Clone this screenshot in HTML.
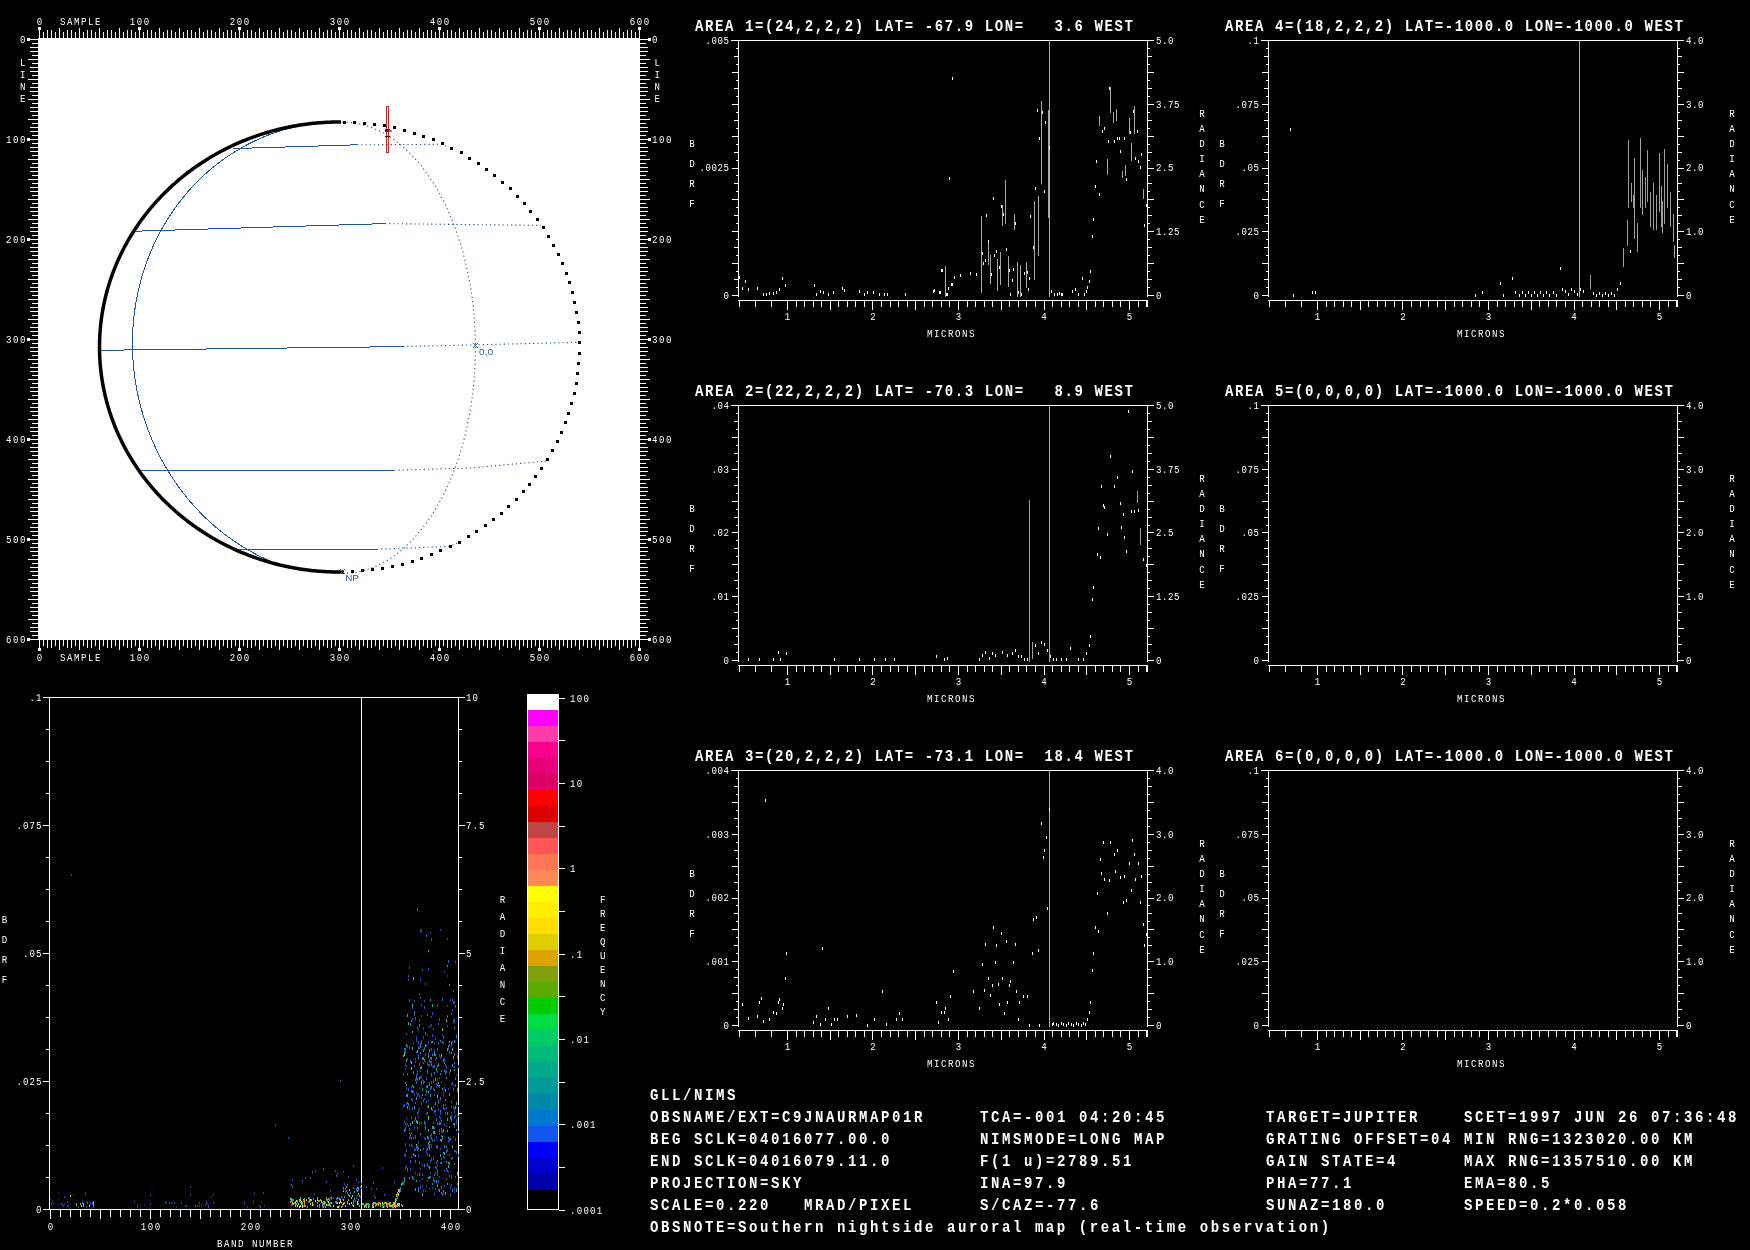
<!DOCTYPE html>
<html><head><meta charset="utf-8"><title>GLL/NIMS</title>
<style>
html,body{margin:0;padding:0;background:#000;width:1750px;height:1250px;overflow:hidden}
svg{display:block;will-change:transform}
text{font-family:"Liberation Mono",monospace;fill:#fff}
.s{font-size:10.6px}
.b{font-size:16.7px;font-weight:bold}
.g{font-family:"Liberation Sans",sans-serif;font-size:9.8px;fill:#2a5a96}
</style></head><body>
<svg width="1750" height="1250" viewBox="0 0 1750 1250">
<rect x="0" y="0" width="1750" height="1250" fill="#000"/>
<rect x="38" y="38" width="602" height="602" fill="#fff"/>
<rect x="39" y="30" width="1" height="8" fill="#fff"/>
<rect x="39" y="640" width="1" height="8" fill="#fff"/>
<rect x="30" y="39" width="8" height="1" fill="#fff"/>
<rect x="640" y="39" width="8" height="1" fill="#fff"/>
<rect x="38" y="27" width="3" height="3" fill="#fff"/>
<rect x="38" y="27" width="3" height="3" fill="#fff"/>
<rect x="38" y="648" width="3" height="3" fill="#fff"/>
<rect x="27" y="38" width="3" height="3" fill="#fff"/>
<rect x="648" y="38" width="3" height="3" fill="#fff"/>
<rect x="43" y="32" width="1" height="6" fill="#fff"/>
<rect x="43" y="640" width="1" height="6" fill="#fff"/>
<rect x="32" y="43" width="6" height="1" fill="#fff"/>
<rect x="640" y="43" width="6" height="1" fill="#fff"/>
<rect x="47" y="30" width="1" height="8" fill="#fff"/>
<rect x="47" y="640" width="1" height="8" fill="#fff"/>
<rect x="30" y="47" width="8" height="1" fill="#fff"/>
<rect x="640" y="47" width="8" height="1" fill="#fff"/>
<rect x="51" y="30" width="1" height="8" fill="#fff"/>
<rect x="51" y="640" width="1" height="8" fill="#fff"/>
<rect x="30" y="51" width="8" height="1" fill="#fff"/>
<rect x="640" y="51" width="8" height="1" fill="#fff"/>
<rect x="55" y="32" width="1" height="6" fill="#fff"/>
<rect x="55" y="640" width="1" height="6" fill="#fff"/>
<rect x="32" y="55" width="6" height="1" fill="#fff"/>
<rect x="640" y="55" width="6" height="1" fill="#fff"/>
<rect x="59" y="28" width="1" height="10" fill="#fff"/>
<rect x="59" y="640" width="1" height="10" fill="#fff"/>
<rect x="28" y="59" width="10" height="1" fill="#fff"/>
<rect x="640" y="59" width="10" height="1" fill="#fff"/>
<rect x="63" y="32" width="1" height="6" fill="#fff"/>
<rect x="63" y="640" width="1" height="6" fill="#fff"/>
<rect x="32" y="63" width="6" height="1" fill="#fff"/>
<rect x="640" y="63" width="6" height="1" fill="#fff"/>
<rect x="67" y="30" width="1" height="8" fill="#fff"/>
<rect x="67" y="640" width="1" height="8" fill="#fff"/>
<rect x="30" y="67" width="8" height="1" fill="#fff"/>
<rect x="640" y="67" width="8" height="1" fill="#fff"/>
<rect x="71" y="30" width="1" height="8" fill="#fff"/>
<rect x="71" y="640" width="1" height="8" fill="#fff"/>
<rect x="30" y="71" width="8" height="1" fill="#fff"/>
<rect x="640" y="71" width="8" height="1" fill="#fff"/>
<rect x="75" y="32" width="1" height="6" fill="#fff"/>
<rect x="75" y="640" width="1" height="6" fill="#fff"/>
<rect x="32" y="75" width="6" height="1" fill="#fff"/>
<rect x="640" y="75" width="6" height="1" fill="#fff"/>
<rect x="79" y="28" width="1" height="10" fill="#fff"/>
<rect x="79" y="640" width="1" height="10" fill="#fff"/>
<rect x="28" y="79" width="10" height="1" fill="#fff"/>
<rect x="640" y="79" width="10" height="1" fill="#fff"/>
<rect x="83" y="32" width="1" height="6" fill="#fff"/>
<rect x="83" y="640" width="1" height="6" fill="#fff"/>
<rect x="32" y="83" width="6" height="1" fill="#fff"/>
<rect x="640" y="83" width="6" height="1" fill="#fff"/>
<rect x="87" y="30" width="1" height="8" fill="#fff"/>
<rect x="87" y="640" width="1" height="8" fill="#fff"/>
<rect x="30" y="87" width="8" height="1" fill="#fff"/>
<rect x="640" y="87" width="8" height="1" fill="#fff"/>
<rect x="91" y="30" width="1" height="8" fill="#fff"/>
<rect x="91" y="640" width="1" height="8" fill="#fff"/>
<rect x="30" y="91" width="8" height="1" fill="#fff"/>
<rect x="640" y="91" width="8" height="1" fill="#fff"/>
<rect x="95" y="32" width="1" height="6" fill="#fff"/>
<rect x="95" y="640" width="1" height="6" fill="#fff"/>
<rect x="32" y="95" width="6" height="1" fill="#fff"/>
<rect x="640" y="95" width="6" height="1" fill="#fff"/>
<rect x="99" y="28" width="1" height="10" fill="#fff"/>
<rect x="99" y="640" width="1" height="10" fill="#fff"/>
<rect x="28" y="99" width="10" height="1" fill="#fff"/>
<rect x="640" y="99" width="10" height="1" fill="#fff"/>
<rect x="103" y="32" width="1" height="6" fill="#fff"/>
<rect x="103" y="640" width="1" height="6" fill="#fff"/>
<rect x="32" y="103" width="6" height="1" fill="#fff"/>
<rect x="640" y="103" width="6" height="1" fill="#fff"/>
<rect x="107" y="30" width="1" height="8" fill="#fff"/>
<rect x="107" y="640" width="1" height="8" fill="#fff"/>
<rect x="30" y="107" width="8" height="1" fill="#fff"/>
<rect x="640" y="107" width="8" height="1" fill="#fff"/>
<rect x="111" y="30" width="1" height="8" fill="#fff"/>
<rect x="111" y="640" width="1" height="8" fill="#fff"/>
<rect x="30" y="111" width="8" height="1" fill="#fff"/>
<rect x="640" y="111" width="8" height="1" fill="#fff"/>
<rect x="115" y="32" width="1" height="6" fill="#fff"/>
<rect x="115" y="640" width="1" height="6" fill="#fff"/>
<rect x="32" y="115" width="6" height="1" fill="#fff"/>
<rect x="640" y="115" width="6" height="1" fill="#fff"/>
<rect x="119" y="28" width="1" height="10" fill="#fff"/>
<rect x="119" y="640" width="1" height="10" fill="#fff"/>
<rect x="28" y="119" width="10" height="1" fill="#fff"/>
<rect x="640" y="119" width="10" height="1" fill="#fff"/>
<rect x="123" y="32" width="1" height="6" fill="#fff"/>
<rect x="123" y="640" width="1" height="6" fill="#fff"/>
<rect x="32" y="123" width="6" height="1" fill="#fff"/>
<rect x="640" y="123" width="6" height="1" fill="#fff"/>
<rect x="127" y="30" width="1" height="8" fill="#fff"/>
<rect x="127" y="640" width="1" height="8" fill="#fff"/>
<rect x="30" y="127" width="8" height="1" fill="#fff"/>
<rect x="640" y="127" width="8" height="1" fill="#fff"/>
<rect x="131" y="30" width="1" height="8" fill="#fff"/>
<rect x="131" y="640" width="1" height="8" fill="#fff"/>
<rect x="30" y="131" width="8" height="1" fill="#fff"/>
<rect x="640" y="131" width="8" height="1" fill="#fff"/>
<rect x="135" y="32" width="1" height="6" fill="#fff"/>
<rect x="135" y="640" width="1" height="6" fill="#fff"/>
<rect x="32" y="135" width="6" height="1" fill="#fff"/>
<rect x="640" y="135" width="6" height="1" fill="#fff"/>
<rect x="139" y="30" width="1" height="8" fill="#fff"/>
<rect x="139" y="640" width="1" height="8" fill="#fff"/>
<rect x="30" y="139" width="8" height="1" fill="#fff"/>
<rect x="640" y="139" width="8" height="1" fill="#fff"/>
<rect x="38" y="27" width="3" height="3" fill="#fff"/>
<rect x="138" y="27" width="3" height="3" fill="#fff"/>
<rect x="138" y="648" width="3" height="3" fill="#fff"/>
<rect x="27" y="138" width="3" height="3" fill="#fff"/>
<rect x="648" y="138" width="3" height="3" fill="#fff"/>
<rect x="143" y="32" width="1" height="6" fill="#fff"/>
<rect x="143" y="640" width="1" height="6" fill="#fff"/>
<rect x="32" y="143" width="6" height="1" fill="#fff"/>
<rect x="640" y="143" width="6" height="1" fill="#fff"/>
<rect x="147" y="30" width="1" height="8" fill="#fff"/>
<rect x="147" y="640" width="1" height="8" fill="#fff"/>
<rect x="30" y="147" width="8" height="1" fill="#fff"/>
<rect x="640" y="147" width="8" height="1" fill="#fff"/>
<rect x="151" y="30" width="1" height="8" fill="#fff"/>
<rect x="151" y="640" width="1" height="8" fill="#fff"/>
<rect x="30" y="151" width="8" height="1" fill="#fff"/>
<rect x="640" y="151" width="8" height="1" fill="#fff"/>
<rect x="155" y="32" width="1" height="6" fill="#fff"/>
<rect x="155" y="640" width="1" height="6" fill="#fff"/>
<rect x="32" y="155" width="6" height="1" fill="#fff"/>
<rect x="640" y="155" width="6" height="1" fill="#fff"/>
<rect x="159" y="28" width="1" height="10" fill="#fff"/>
<rect x="159" y="640" width="1" height="10" fill="#fff"/>
<rect x="28" y="159" width="10" height="1" fill="#fff"/>
<rect x="640" y="159" width="10" height="1" fill="#fff"/>
<rect x="163" y="32" width="1" height="6" fill="#fff"/>
<rect x="163" y="640" width="1" height="6" fill="#fff"/>
<rect x="32" y="163" width="6" height="1" fill="#fff"/>
<rect x="640" y="163" width="6" height="1" fill="#fff"/>
<rect x="167" y="30" width="1" height="8" fill="#fff"/>
<rect x="167" y="640" width="1" height="8" fill="#fff"/>
<rect x="30" y="167" width="8" height="1" fill="#fff"/>
<rect x="640" y="167" width="8" height="1" fill="#fff"/>
<rect x="171" y="30" width="1" height="8" fill="#fff"/>
<rect x="171" y="640" width="1" height="8" fill="#fff"/>
<rect x="30" y="171" width="8" height="1" fill="#fff"/>
<rect x="640" y="171" width="8" height="1" fill="#fff"/>
<rect x="175" y="32" width="1" height="6" fill="#fff"/>
<rect x="175" y="640" width="1" height="6" fill="#fff"/>
<rect x="32" y="175" width="6" height="1" fill="#fff"/>
<rect x="640" y="175" width="6" height="1" fill="#fff"/>
<rect x="179" y="28" width="1" height="10" fill="#fff"/>
<rect x="179" y="640" width="1" height="10" fill="#fff"/>
<rect x="28" y="179" width="10" height="1" fill="#fff"/>
<rect x="640" y="179" width="10" height="1" fill="#fff"/>
<rect x="183" y="32" width="1" height="6" fill="#fff"/>
<rect x="183" y="640" width="1" height="6" fill="#fff"/>
<rect x="32" y="183" width="6" height="1" fill="#fff"/>
<rect x="640" y="183" width="6" height="1" fill="#fff"/>
<rect x="187" y="30" width="1" height="8" fill="#fff"/>
<rect x="187" y="640" width="1" height="8" fill="#fff"/>
<rect x="30" y="187" width="8" height="1" fill="#fff"/>
<rect x="640" y="187" width="8" height="1" fill="#fff"/>
<rect x="191" y="30" width="1" height="8" fill="#fff"/>
<rect x="191" y="640" width="1" height="8" fill="#fff"/>
<rect x="30" y="191" width="8" height="1" fill="#fff"/>
<rect x="640" y="191" width="8" height="1" fill="#fff"/>
<rect x="195" y="32" width="1" height="6" fill="#fff"/>
<rect x="195" y="640" width="1" height="6" fill="#fff"/>
<rect x="32" y="195" width="6" height="1" fill="#fff"/>
<rect x="640" y="195" width="6" height="1" fill="#fff"/>
<rect x="199" y="28" width="1" height="10" fill="#fff"/>
<rect x="199" y="640" width="1" height="10" fill="#fff"/>
<rect x="28" y="199" width="10" height="1" fill="#fff"/>
<rect x="640" y="199" width="10" height="1" fill="#fff"/>
<rect x="203" y="32" width="1" height="6" fill="#fff"/>
<rect x="203" y="640" width="1" height="6" fill="#fff"/>
<rect x="32" y="203" width="6" height="1" fill="#fff"/>
<rect x="640" y="203" width="6" height="1" fill="#fff"/>
<rect x="207" y="30" width="1" height="8" fill="#fff"/>
<rect x="207" y="640" width="1" height="8" fill="#fff"/>
<rect x="30" y="207" width="8" height="1" fill="#fff"/>
<rect x="640" y="207" width="8" height="1" fill="#fff"/>
<rect x="211" y="30" width="1" height="8" fill="#fff"/>
<rect x="211" y="640" width="1" height="8" fill="#fff"/>
<rect x="30" y="211" width="8" height="1" fill="#fff"/>
<rect x="640" y="211" width="8" height="1" fill="#fff"/>
<rect x="215" y="32" width="1" height="6" fill="#fff"/>
<rect x="215" y="640" width="1" height="6" fill="#fff"/>
<rect x="32" y="215" width="6" height="1" fill="#fff"/>
<rect x="640" y="215" width="6" height="1" fill="#fff"/>
<rect x="219" y="28" width="1" height="10" fill="#fff"/>
<rect x="219" y="640" width="1" height="10" fill="#fff"/>
<rect x="28" y="219" width="10" height="1" fill="#fff"/>
<rect x="640" y="219" width="10" height="1" fill="#fff"/>
<rect x="223" y="32" width="1" height="6" fill="#fff"/>
<rect x="223" y="640" width="1" height="6" fill="#fff"/>
<rect x="32" y="223" width="6" height="1" fill="#fff"/>
<rect x="640" y="223" width="6" height="1" fill="#fff"/>
<rect x="227" y="30" width="1" height="8" fill="#fff"/>
<rect x="227" y="640" width="1" height="8" fill="#fff"/>
<rect x="30" y="227" width="8" height="1" fill="#fff"/>
<rect x="640" y="227" width="8" height="1" fill="#fff"/>
<rect x="231" y="30" width="1" height="8" fill="#fff"/>
<rect x="231" y="640" width="1" height="8" fill="#fff"/>
<rect x="30" y="231" width="8" height="1" fill="#fff"/>
<rect x="640" y="231" width="8" height="1" fill="#fff"/>
<rect x="235" y="32" width="1" height="6" fill="#fff"/>
<rect x="235" y="640" width="1" height="6" fill="#fff"/>
<rect x="32" y="235" width="6" height="1" fill="#fff"/>
<rect x="640" y="235" width="6" height="1" fill="#fff"/>
<rect x="239" y="30" width="1" height="8" fill="#fff"/>
<rect x="239" y="640" width="1" height="8" fill="#fff"/>
<rect x="30" y="239" width="8" height="1" fill="#fff"/>
<rect x="640" y="239" width="8" height="1" fill="#fff"/>
<rect x="38" y="27" width="3" height="3" fill="#fff"/>
<rect x="238" y="27" width="3" height="3" fill="#fff"/>
<rect x="238" y="648" width="3" height="3" fill="#fff"/>
<rect x="27" y="238" width="3" height="3" fill="#fff"/>
<rect x="648" y="238" width="3" height="3" fill="#fff"/>
<rect x="243" y="32" width="1" height="6" fill="#fff"/>
<rect x="243" y="640" width="1" height="6" fill="#fff"/>
<rect x="32" y="243" width="6" height="1" fill="#fff"/>
<rect x="640" y="243" width="6" height="1" fill="#fff"/>
<rect x="247" y="30" width="1" height="8" fill="#fff"/>
<rect x="247" y="640" width="1" height="8" fill="#fff"/>
<rect x="30" y="247" width="8" height="1" fill="#fff"/>
<rect x="640" y="247" width="8" height="1" fill="#fff"/>
<rect x="251" y="30" width="1" height="8" fill="#fff"/>
<rect x="251" y="640" width="1" height="8" fill="#fff"/>
<rect x="30" y="251" width="8" height="1" fill="#fff"/>
<rect x="640" y="251" width="8" height="1" fill="#fff"/>
<rect x="255" y="32" width="1" height="6" fill="#fff"/>
<rect x="255" y="640" width="1" height="6" fill="#fff"/>
<rect x="32" y="255" width="6" height="1" fill="#fff"/>
<rect x="640" y="255" width="6" height="1" fill="#fff"/>
<rect x="259" y="28" width="1" height="10" fill="#fff"/>
<rect x="259" y="640" width="1" height="10" fill="#fff"/>
<rect x="28" y="259" width="10" height="1" fill="#fff"/>
<rect x="640" y="259" width="10" height="1" fill="#fff"/>
<rect x="263" y="32" width="1" height="6" fill="#fff"/>
<rect x="263" y="640" width="1" height="6" fill="#fff"/>
<rect x="32" y="263" width="6" height="1" fill="#fff"/>
<rect x="640" y="263" width="6" height="1" fill="#fff"/>
<rect x="267" y="30" width="1" height="8" fill="#fff"/>
<rect x="267" y="640" width="1" height="8" fill="#fff"/>
<rect x="30" y="267" width="8" height="1" fill="#fff"/>
<rect x="640" y="267" width="8" height="1" fill="#fff"/>
<rect x="271" y="30" width="1" height="8" fill="#fff"/>
<rect x="271" y="640" width="1" height="8" fill="#fff"/>
<rect x="30" y="271" width="8" height="1" fill="#fff"/>
<rect x="640" y="271" width="8" height="1" fill="#fff"/>
<rect x="275" y="32" width="1" height="6" fill="#fff"/>
<rect x="275" y="640" width="1" height="6" fill="#fff"/>
<rect x="32" y="275" width="6" height="1" fill="#fff"/>
<rect x="640" y="275" width="6" height="1" fill="#fff"/>
<rect x="279" y="28" width="1" height="10" fill="#fff"/>
<rect x="279" y="640" width="1" height="10" fill="#fff"/>
<rect x="28" y="279" width="10" height="1" fill="#fff"/>
<rect x="640" y="279" width="10" height="1" fill="#fff"/>
<rect x="283" y="32" width="1" height="6" fill="#fff"/>
<rect x="283" y="640" width="1" height="6" fill="#fff"/>
<rect x="32" y="283" width="6" height="1" fill="#fff"/>
<rect x="640" y="283" width="6" height="1" fill="#fff"/>
<rect x="287" y="30" width="1" height="8" fill="#fff"/>
<rect x="287" y="640" width="1" height="8" fill="#fff"/>
<rect x="30" y="287" width="8" height="1" fill="#fff"/>
<rect x="640" y="287" width="8" height="1" fill="#fff"/>
<rect x="291" y="30" width="1" height="8" fill="#fff"/>
<rect x="291" y="640" width="1" height="8" fill="#fff"/>
<rect x="30" y="291" width="8" height="1" fill="#fff"/>
<rect x="640" y="291" width="8" height="1" fill="#fff"/>
<rect x="295" y="32" width="1" height="6" fill="#fff"/>
<rect x="295" y="640" width="1" height="6" fill="#fff"/>
<rect x="32" y="295" width="6" height="1" fill="#fff"/>
<rect x="640" y="295" width="6" height="1" fill="#fff"/>
<rect x="299" y="28" width="1" height="10" fill="#fff"/>
<rect x="299" y="640" width="1" height="10" fill="#fff"/>
<rect x="28" y="299" width="10" height="1" fill="#fff"/>
<rect x="640" y="299" width="10" height="1" fill="#fff"/>
<rect x="303" y="32" width="1" height="6" fill="#fff"/>
<rect x="303" y="640" width="1" height="6" fill="#fff"/>
<rect x="32" y="303" width="6" height="1" fill="#fff"/>
<rect x="640" y="303" width="6" height="1" fill="#fff"/>
<rect x="307" y="30" width="1" height="8" fill="#fff"/>
<rect x="307" y="640" width="1" height="8" fill="#fff"/>
<rect x="30" y="307" width="8" height="1" fill="#fff"/>
<rect x="640" y="307" width="8" height="1" fill="#fff"/>
<rect x="311" y="30" width="1" height="8" fill="#fff"/>
<rect x="311" y="640" width="1" height="8" fill="#fff"/>
<rect x="30" y="311" width="8" height="1" fill="#fff"/>
<rect x="640" y="311" width="8" height="1" fill="#fff"/>
<rect x="315" y="32" width="1" height="6" fill="#fff"/>
<rect x="315" y="640" width="1" height="6" fill="#fff"/>
<rect x="32" y="315" width="6" height="1" fill="#fff"/>
<rect x="640" y="315" width="6" height="1" fill="#fff"/>
<rect x="319" y="28" width="1" height="10" fill="#fff"/>
<rect x="319" y="640" width="1" height="10" fill="#fff"/>
<rect x="28" y="319" width="10" height="1" fill="#fff"/>
<rect x="640" y="319" width="10" height="1" fill="#fff"/>
<rect x="323" y="32" width="1" height="6" fill="#fff"/>
<rect x="323" y="640" width="1" height="6" fill="#fff"/>
<rect x="32" y="323" width="6" height="1" fill="#fff"/>
<rect x="640" y="323" width="6" height="1" fill="#fff"/>
<rect x="327" y="30" width="1" height="8" fill="#fff"/>
<rect x="327" y="640" width="1" height="8" fill="#fff"/>
<rect x="30" y="327" width="8" height="1" fill="#fff"/>
<rect x="640" y="327" width="8" height="1" fill="#fff"/>
<rect x="331" y="30" width="1" height="8" fill="#fff"/>
<rect x="331" y="640" width="1" height="8" fill="#fff"/>
<rect x="30" y="331" width="8" height="1" fill="#fff"/>
<rect x="640" y="331" width="8" height="1" fill="#fff"/>
<rect x="335" y="32" width="1" height="6" fill="#fff"/>
<rect x="335" y="640" width="1" height="6" fill="#fff"/>
<rect x="32" y="335" width="6" height="1" fill="#fff"/>
<rect x="640" y="335" width="6" height="1" fill="#fff"/>
<rect x="339" y="30" width="1" height="8" fill="#fff"/>
<rect x="339" y="640" width="1" height="8" fill="#fff"/>
<rect x="30" y="339" width="8" height="1" fill="#fff"/>
<rect x="640" y="339" width="8" height="1" fill="#fff"/>
<rect x="38" y="27" width="3" height="3" fill="#fff"/>
<rect x="338" y="27" width="3" height="3" fill="#fff"/>
<rect x="338" y="648" width="3" height="3" fill="#fff"/>
<rect x="27" y="338" width="3" height="3" fill="#fff"/>
<rect x="648" y="338" width="3" height="3" fill="#fff"/>
<rect x="343" y="32" width="1" height="6" fill="#fff"/>
<rect x="343" y="640" width="1" height="6" fill="#fff"/>
<rect x="32" y="343" width="6" height="1" fill="#fff"/>
<rect x="640" y="343" width="6" height="1" fill="#fff"/>
<rect x="347" y="30" width="1" height="8" fill="#fff"/>
<rect x="347" y="640" width="1" height="8" fill="#fff"/>
<rect x="30" y="347" width="8" height="1" fill="#fff"/>
<rect x="640" y="347" width="8" height="1" fill="#fff"/>
<rect x="351" y="30" width="1" height="8" fill="#fff"/>
<rect x="351" y="640" width="1" height="8" fill="#fff"/>
<rect x="30" y="351" width="8" height="1" fill="#fff"/>
<rect x="640" y="351" width="8" height="1" fill="#fff"/>
<rect x="355" y="32" width="1" height="6" fill="#fff"/>
<rect x="355" y="640" width="1" height="6" fill="#fff"/>
<rect x="32" y="355" width="6" height="1" fill="#fff"/>
<rect x="640" y="355" width="6" height="1" fill="#fff"/>
<rect x="359" y="28" width="1" height="10" fill="#fff"/>
<rect x="359" y="640" width="1" height="10" fill="#fff"/>
<rect x="28" y="359" width="10" height="1" fill="#fff"/>
<rect x="640" y="359" width="10" height="1" fill="#fff"/>
<rect x="363" y="32" width="1" height="6" fill="#fff"/>
<rect x="363" y="640" width="1" height="6" fill="#fff"/>
<rect x="32" y="363" width="6" height="1" fill="#fff"/>
<rect x="640" y="363" width="6" height="1" fill="#fff"/>
<rect x="367" y="30" width="1" height="8" fill="#fff"/>
<rect x="367" y="640" width="1" height="8" fill="#fff"/>
<rect x="30" y="367" width="8" height="1" fill="#fff"/>
<rect x="640" y="367" width="8" height="1" fill="#fff"/>
<rect x="371" y="30" width="1" height="8" fill="#fff"/>
<rect x="371" y="640" width="1" height="8" fill="#fff"/>
<rect x="30" y="371" width="8" height="1" fill="#fff"/>
<rect x="640" y="371" width="8" height="1" fill="#fff"/>
<rect x="375" y="32" width="1" height="6" fill="#fff"/>
<rect x="375" y="640" width="1" height="6" fill="#fff"/>
<rect x="32" y="375" width="6" height="1" fill="#fff"/>
<rect x="640" y="375" width="6" height="1" fill="#fff"/>
<rect x="379" y="28" width="1" height="10" fill="#fff"/>
<rect x="379" y="640" width="1" height="10" fill="#fff"/>
<rect x="28" y="379" width="10" height="1" fill="#fff"/>
<rect x="640" y="379" width="10" height="1" fill="#fff"/>
<rect x="383" y="32" width="1" height="6" fill="#fff"/>
<rect x="383" y="640" width="1" height="6" fill="#fff"/>
<rect x="32" y="383" width="6" height="1" fill="#fff"/>
<rect x="640" y="383" width="6" height="1" fill="#fff"/>
<rect x="387" y="30" width="1" height="8" fill="#fff"/>
<rect x="387" y="640" width="1" height="8" fill="#fff"/>
<rect x="30" y="387" width="8" height="1" fill="#fff"/>
<rect x="640" y="387" width="8" height="1" fill="#fff"/>
<rect x="391" y="30" width="1" height="8" fill="#fff"/>
<rect x="391" y="640" width="1" height="8" fill="#fff"/>
<rect x="30" y="391" width="8" height="1" fill="#fff"/>
<rect x="640" y="391" width="8" height="1" fill="#fff"/>
<rect x="395" y="32" width="1" height="6" fill="#fff"/>
<rect x="395" y="640" width="1" height="6" fill="#fff"/>
<rect x="32" y="395" width="6" height="1" fill="#fff"/>
<rect x="640" y="395" width="6" height="1" fill="#fff"/>
<rect x="399" y="28" width="1" height="10" fill="#fff"/>
<rect x="399" y="640" width="1" height="10" fill="#fff"/>
<rect x="28" y="399" width="10" height="1" fill="#fff"/>
<rect x="640" y="399" width="10" height="1" fill="#fff"/>
<rect x="403" y="32" width="1" height="6" fill="#fff"/>
<rect x="403" y="640" width="1" height="6" fill="#fff"/>
<rect x="32" y="403" width="6" height="1" fill="#fff"/>
<rect x="640" y="403" width="6" height="1" fill="#fff"/>
<rect x="407" y="30" width="1" height="8" fill="#fff"/>
<rect x="407" y="640" width="1" height="8" fill="#fff"/>
<rect x="30" y="407" width="8" height="1" fill="#fff"/>
<rect x="640" y="407" width="8" height="1" fill="#fff"/>
<rect x="411" y="30" width="1" height="8" fill="#fff"/>
<rect x="411" y="640" width="1" height="8" fill="#fff"/>
<rect x="30" y="411" width="8" height="1" fill="#fff"/>
<rect x="640" y="411" width="8" height="1" fill="#fff"/>
<rect x="415" y="32" width="1" height="6" fill="#fff"/>
<rect x="415" y="640" width="1" height="6" fill="#fff"/>
<rect x="32" y="415" width="6" height="1" fill="#fff"/>
<rect x="640" y="415" width="6" height="1" fill="#fff"/>
<rect x="419" y="28" width="1" height="10" fill="#fff"/>
<rect x="419" y="640" width="1" height="10" fill="#fff"/>
<rect x="28" y="419" width="10" height="1" fill="#fff"/>
<rect x="640" y="419" width="10" height="1" fill="#fff"/>
<rect x="423" y="32" width="1" height="6" fill="#fff"/>
<rect x="423" y="640" width="1" height="6" fill="#fff"/>
<rect x="32" y="423" width="6" height="1" fill="#fff"/>
<rect x="640" y="423" width="6" height="1" fill="#fff"/>
<rect x="427" y="30" width="1" height="8" fill="#fff"/>
<rect x="427" y="640" width="1" height="8" fill="#fff"/>
<rect x="30" y="427" width="8" height="1" fill="#fff"/>
<rect x="640" y="427" width="8" height="1" fill="#fff"/>
<rect x="431" y="30" width="1" height="8" fill="#fff"/>
<rect x="431" y="640" width="1" height="8" fill="#fff"/>
<rect x="30" y="431" width="8" height="1" fill="#fff"/>
<rect x="640" y="431" width="8" height="1" fill="#fff"/>
<rect x="435" y="32" width="1" height="6" fill="#fff"/>
<rect x="435" y="640" width="1" height="6" fill="#fff"/>
<rect x="32" y="435" width="6" height="1" fill="#fff"/>
<rect x="640" y="435" width="6" height="1" fill="#fff"/>
<rect x="439" y="30" width="1" height="8" fill="#fff"/>
<rect x="439" y="640" width="1" height="8" fill="#fff"/>
<rect x="30" y="439" width="8" height="1" fill="#fff"/>
<rect x="640" y="439" width="8" height="1" fill="#fff"/>
<rect x="38" y="27" width="3" height="3" fill="#fff"/>
<rect x="438" y="27" width="3" height="3" fill="#fff"/>
<rect x="438" y="648" width="3" height="3" fill="#fff"/>
<rect x="27" y="438" width="3" height="3" fill="#fff"/>
<rect x="648" y="438" width="3" height="3" fill="#fff"/>
<rect x="443" y="32" width="1" height="6" fill="#fff"/>
<rect x="443" y="640" width="1" height="6" fill="#fff"/>
<rect x="32" y="443" width="6" height="1" fill="#fff"/>
<rect x="640" y="443" width="6" height="1" fill="#fff"/>
<rect x="447" y="30" width="1" height="8" fill="#fff"/>
<rect x="447" y="640" width="1" height="8" fill="#fff"/>
<rect x="30" y="447" width="8" height="1" fill="#fff"/>
<rect x="640" y="447" width="8" height="1" fill="#fff"/>
<rect x="451" y="30" width="1" height="8" fill="#fff"/>
<rect x="451" y="640" width="1" height="8" fill="#fff"/>
<rect x="30" y="451" width="8" height="1" fill="#fff"/>
<rect x="640" y="451" width="8" height="1" fill="#fff"/>
<rect x="455" y="32" width="1" height="6" fill="#fff"/>
<rect x="455" y="640" width="1" height="6" fill="#fff"/>
<rect x="32" y="455" width="6" height="1" fill="#fff"/>
<rect x="640" y="455" width="6" height="1" fill="#fff"/>
<rect x="459" y="28" width="1" height="10" fill="#fff"/>
<rect x="459" y="640" width="1" height="10" fill="#fff"/>
<rect x="28" y="459" width="10" height="1" fill="#fff"/>
<rect x="640" y="459" width="10" height="1" fill="#fff"/>
<rect x="463" y="32" width="1" height="6" fill="#fff"/>
<rect x="463" y="640" width="1" height="6" fill="#fff"/>
<rect x="32" y="463" width="6" height="1" fill="#fff"/>
<rect x="640" y="463" width="6" height="1" fill="#fff"/>
<rect x="467" y="30" width="1" height="8" fill="#fff"/>
<rect x="467" y="640" width="1" height="8" fill="#fff"/>
<rect x="30" y="467" width="8" height="1" fill="#fff"/>
<rect x="640" y="467" width="8" height="1" fill="#fff"/>
<rect x="471" y="30" width="1" height="8" fill="#fff"/>
<rect x="471" y="640" width="1" height="8" fill="#fff"/>
<rect x="30" y="471" width="8" height="1" fill="#fff"/>
<rect x="640" y="471" width="8" height="1" fill="#fff"/>
<rect x="475" y="32" width="1" height="6" fill="#fff"/>
<rect x="475" y="640" width="1" height="6" fill="#fff"/>
<rect x="32" y="475" width="6" height="1" fill="#fff"/>
<rect x="640" y="475" width="6" height="1" fill="#fff"/>
<rect x="479" y="28" width="1" height="10" fill="#fff"/>
<rect x="479" y="640" width="1" height="10" fill="#fff"/>
<rect x="28" y="479" width="10" height="1" fill="#fff"/>
<rect x="640" y="479" width="10" height="1" fill="#fff"/>
<rect x="483" y="32" width="1" height="6" fill="#fff"/>
<rect x="483" y="640" width="1" height="6" fill="#fff"/>
<rect x="32" y="483" width="6" height="1" fill="#fff"/>
<rect x="640" y="483" width="6" height="1" fill="#fff"/>
<rect x="487" y="30" width="1" height="8" fill="#fff"/>
<rect x="487" y="640" width="1" height="8" fill="#fff"/>
<rect x="30" y="487" width="8" height="1" fill="#fff"/>
<rect x="640" y="487" width="8" height="1" fill="#fff"/>
<rect x="491" y="30" width="1" height="8" fill="#fff"/>
<rect x="491" y="640" width="1" height="8" fill="#fff"/>
<rect x="30" y="491" width="8" height="1" fill="#fff"/>
<rect x="640" y="491" width="8" height="1" fill="#fff"/>
<rect x="495" y="32" width="1" height="6" fill="#fff"/>
<rect x="495" y="640" width="1" height="6" fill="#fff"/>
<rect x="32" y="495" width="6" height="1" fill="#fff"/>
<rect x="640" y="495" width="6" height="1" fill="#fff"/>
<rect x="499" y="28" width="1" height="10" fill="#fff"/>
<rect x="499" y="640" width="1" height="10" fill="#fff"/>
<rect x="28" y="499" width="10" height="1" fill="#fff"/>
<rect x="640" y="499" width="10" height="1" fill="#fff"/>
<rect x="503" y="32" width="1" height="6" fill="#fff"/>
<rect x="503" y="640" width="1" height="6" fill="#fff"/>
<rect x="32" y="503" width="6" height="1" fill="#fff"/>
<rect x="640" y="503" width="6" height="1" fill="#fff"/>
<rect x="507" y="30" width="1" height="8" fill="#fff"/>
<rect x="507" y="640" width="1" height="8" fill="#fff"/>
<rect x="30" y="507" width="8" height="1" fill="#fff"/>
<rect x="640" y="507" width="8" height="1" fill="#fff"/>
<rect x="511" y="30" width="1" height="8" fill="#fff"/>
<rect x="511" y="640" width="1" height="8" fill="#fff"/>
<rect x="30" y="511" width="8" height="1" fill="#fff"/>
<rect x="640" y="511" width="8" height="1" fill="#fff"/>
<rect x="515" y="32" width="1" height="6" fill="#fff"/>
<rect x="515" y="640" width="1" height="6" fill="#fff"/>
<rect x="32" y="515" width="6" height="1" fill="#fff"/>
<rect x="640" y="515" width="6" height="1" fill="#fff"/>
<rect x="519" y="28" width="1" height="10" fill="#fff"/>
<rect x="519" y="640" width="1" height="10" fill="#fff"/>
<rect x="28" y="519" width="10" height="1" fill="#fff"/>
<rect x="640" y="519" width="10" height="1" fill="#fff"/>
<rect x="523" y="32" width="1" height="6" fill="#fff"/>
<rect x="523" y="640" width="1" height="6" fill="#fff"/>
<rect x="32" y="523" width="6" height="1" fill="#fff"/>
<rect x="640" y="523" width="6" height="1" fill="#fff"/>
<rect x="527" y="30" width="1" height="8" fill="#fff"/>
<rect x="527" y="640" width="1" height="8" fill="#fff"/>
<rect x="30" y="527" width="8" height="1" fill="#fff"/>
<rect x="640" y="527" width="8" height="1" fill="#fff"/>
<rect x="531" y="30" width="1" height="8" fill="#fff"/>
<rect x="531" y="640" width="1" height="8" fill="#fff"/>
<rect x="30" y="531" width="8" height="1" fill="#fff"/>
<rect x="640" y="531" width="8" height="1" fill="#fff"/>
<rect x="535" y="32" width="1" height="6" fill="#fff"/>
<rect x="535" y="640" width="1" height="6" fill="#fff"/>
<rect x="32" y="535" width="6" height="1" fill="#fff"/>
<rect x="640" y="535" width="6" height="1" fill="#fff"/>
<rect x="539" y="30" width="1" height="8" fill="#fff"/>
<rect x="539" y="640" width="1" height="8" fill="#fff"/>
<rect x="30" y="539" width="8" height="1" fill="#fff"/>
<rect x="640" y="539" width="8" height="1" fill="#fff"/>
<rect x="38" y="27" width="3" height="3" fill="#fff"/>
<rect x="538" y="27" width="3" height="3" fill="#fff"/>
<rect x="538" y="648" width="3" height="3" fill="#fff"/>
<rect x="27" y="538" width="3" height="3" fill="#fff"/>
<rect x="648" y="538" width="3" height="3" fill="#fff"/>
<rect x="543" y="32" width="1" height="6" fill="#fff"/>
<rect x="543" y="640" width="1" height="6" fill="#fff"/>
<rect x="32" y="543" width="6" height="1" fill="#fff"/>
<rect x="640" y="543" width="6" height="1" fill="#fff"/>
<rect x="547" y="30" width="1" height="8" fill="#fff"/>
<rect x="547" y="640" width="1" height="8" fill="#fff"/>
<rect x="30" y="547" width="8" height="1" fill="#fff"/>
<rect x="640" y="547" width="8" height="1" fill="#fff"/>
<rect x="551" y="30" width="1" height="8" fill="#fff"/>
<rect x="551" y="640" width="1" height="8" fill="#fff"/>
<rect x="30" y="551" width="8" height="1" fill="#fff"/>
<rect x="640" y="551" width="8" height="1" fill="#fff"/>
<rect x="555" y="32" width="1" height="6" fill="#fff"/>
<rect x="555" y="640" width="1" height="6" fill="#fff"/>
<rect x="32" y="555" width="6" height="1" fill="#fff"/>
<rect x="640" y="555" width="6" height="1" fill="#fff"/>
<rect x="559" y="28" width="1" height="10" fill="#fff"/>
<rect x="559" y="640" width="1" height="10" fill="#fff"/>
<rect x="28" y="559" width="10" height="1" fill="#fff"/>
<rect x="640" y="559" width="10" height="1" fill="#fff"/>
<rect x="563" y="32" width="1" height="6" fill="#fff"/>
<rect x="563" y="640" width="1" height="6" fill="#fff"/>
<rect x="32" y="563" width="6" height="1" fill="#fff"/>
<rect x="640" y="563" width="6" height="1" fill="#fff"/>
<rect x="567" y="30" width="1" height="8" fill="#fff"/>
<rect x="567" y="640" width="1" height="8" fill="#fff"/>
<rect x="30" y="567" width="8" height="1" fill="#fff"/>
<rect x="640" y="567" width="8" height="1" fill="#fff"/>
<rect x="571" y="30" width="1" height="8" fill="#fff"/>
<rect x="571" y="640" width="1" height="8" fill="#fff"/>
<rect x="30" y="571" width="8" height="1" fill="#fff"/>
<rect x="640" y="571" width="8" height="1" fill="#fff"/>
<rect x="575" y="32" width="1" height="6" fill="#fff"/>
<rect x="575" y="640" width="1" height="6" fill="#fff"/>
<rect x="32" y="575" width="6" height="1" fill="#fff"/>
<rect x="640" y="575" width="6" height="1" fill="#fff"/>
<rect x="579" y="28" width="1" height="10" fill="#fff"/>
<rect x="579" y="640" width="1" height="10" fill="#fff"/>
<rect x="28" y="579" width="10" height="1" fill="#fff"/>
<rect x="640" y="579" width="10" height="1" fill="#fff"/>
<rect x="583" y="32" width="1" height="6" fill="#fff"/>
<rect x="583" y="640" width="1" height="6" fill="#fff"/>
<rect x="32" y="583" width="6" height="1" fill="#fff"/>
<rect x="640" y="583" width="6" height="1" fill="#fff"/>
<rect x="587" y="30" width="1" height="8" fill="#fff"/>
<rect x="587" y="640" width="1" height="8" fill="#fff"/>
<rect x="30" y="587" width="8" height="1" fill="#fff"/>
<rect x="640" y="587" width="8" height="1" fill="#fff"/>
<rect x="591" y="30" width="1" height="8" fill="#fff"/>
<rect x="591" y="640" width="1" height="8" fill="#fff"/>
<rect x="30" y="591" width="8" height="1" fill="#fff"/>
<rect x="640" y="591" width="8" height="1" fill="#fff"/>
<rect x="595" y="32" width="1" height="6" fill="#fff"/>
<rect x="595" y="640" width="1" height="6" fill="#fff"/>
<rect x="32" y="595" width="6" height="1" fill="#fff"/>
<rect x="640" y="595" width="6" height="1" fill="#fff"/>
<rect x="599" y="28" width="1" height="10" fill="#fff"/>
<rect x="599" y="640" width="1" height="10" fill="#fff"/>
<rect x="28" y="599" width="10" height="1" fill="#fff"/>
<rect x="640" y="599" width="10" height="1" fill="#fff"/>
<rect x="603" y="32" width="1" height="6" fill="#fff"/>
<rect x="603" y="640" width="1" height="6" fill="#fff"/>
<rect x="32" y="603" width="6" height="1" fill="#fff"/>
<rect x="640" y="603" width="6" height="1" fill="#fff"/>
<rect x="607" y="30" width="1" height="8" fill="#fff"/>
<rect x="607" y="640" width="1" height="8" fill="#fff"/>
<rect x="30" y="607" width="8" height="1" fill="#fff"/>
<rect x="640" y="607" width="8" height="1" fill="#fff"/>
<rect x="611" y="30" width="1" height="8" fill="#fff"/>
<rect x="611" y="640" width="1" height="8" fill="#fff"/>
<rect x="30" y="611" width="8" height="1" fill="#fff"/>
<rect x="640" y="611" width="8" height="1" fill="#fff"/>
<rect x="615" y="32" width="1" height="6" fill="#fff"/>
<rect x="615" y="640" width="1" height="6" fill="#fff"/>
<rect x="32" y="615" width="6" height="1" fill="#fff"/>
<rect x="640" y="615" width="6" height="1" fill="#fff"/>
<rect x="619" y="28" width="1" height="10" fill="#fff"/>
<rect x="619" y="640" width="1" height="10" fill="#fff"/>
<rect x="28" y="619" width="10" height="1" fill="#fff"/>
<rect x="640" y="619" width="10" height="1" fill="#fff"/>
<rect x="623" y="32" width="1" height="6" fill="#fff"/>
<rect x="623" y="640" width="1" height="6" fill="#fff"/>
<rect x="32" y="623" width="6" height="1" fill="#fff"/>
<rect x="640" y="623" width="6" height="1" fill="#fff"/>
<rect x="627" y="30" width="1" height="8" fill="#fff"/>
<rect x="627" y="640" width="1" height="8" fill="#fff"/>
<rect x="30" y="627" width="8" height="1" fill="#fff"/>
<rect x="640" y="627" width="8" height="1" fill="#fff"/>
<rect x="631" y="30" width="1" height="8" fill="#fff"/>
<rect x="631" y="640" width="1" height="8" fill="#fff"/>
<rect x="30" y="631" width="8" height="1" fill="#fff"/>
<rect x="640" y="631" width="8" height="1" fill="#fff"/>
<rect x="635" y="32" width="1" height="6" fill="#fff"/>
<rect x="635" y="640" width="1" height="6" fill="#fff"/>
<rect x="32" y="635" width="6" height="1" fill="#fff"/>
<rect x="640" y="635" width="6" height="1" fill="#fff"/>
<rect x="639" y="30" width="1" height="8" fill="#fff"/>
<rect x="639" y="640" width="1" height="8" fill="#fff"/>
<rect x="30" y="639" width="8" height="1" fill="#fff"/>
<rect x="640" y="639" width="8" height="1" fill="#fff"/>
<rect x="38" y="27" width="3" height="3" fill="#fff"/>
<rect x="638" y="27" width="3" height="3" fill="#fff"/>
<rect x="638" y="648" width="3" height="3" fill="#fff"/>
<rect x="27" y="638" width="3" height="3" fill="#fff"/>
<rect x="648" y="638" width="3" height="3" fill="#fff"/>
<text class="s" transform="scale(0.86,1)" x="42.75" y="25.00" letter-spacing="1.78" xml:space="preserve">0</text>
<text class="s" transform="scale(0.86,1)" x="42.75" y="661.00" letter-spacing="1.78" xml:space="preserve">0</text>
<text class="s" transform="scale(0.86,1)" x="23.29" y="43.00" letter-spacing="1.78" xml:space="preserve">0</text>
<text class="s" transform="scale(0.86,1)" x="758.14" y="43.00" letter-spacing="1.78" xml:space="preserve">0</text>
<text class="s" transform="scale(0.86,1)" x="150.89" y="25.00" letter-spacing="1.78" xml:space="preserve">100</text>
<text class="s" transform="scale(0.86,1)" x="150.89" y="661.00" letter-spacing="1.78" xml:space="preserve">100</text>
<text class="s" transform="scale(0.86,1)" x="7.01" y="143.00" letter-spacing="1.78" xml:space="preserve">100</text>
<text class="s" transform="scale(0.86,1)" x="758.14" y="143.00" letter-spacing="1.78" xml:space="preserve">100</text>
<text class="s" transform="scale(0.86,1)" x="267.17" y="25.00" letter-spacing="1.78" xml:space="preserve">200</text>
<text class="s" transform="scale(0.86,1)" x="267.17" y="661.00" letter-spacing="1.78" xml:space="preserve">200</text>
<text class="s" transform="scale(0.86,1)" x="7.01" y="243.00" letter-spacing="1.78" xml:space="preserve">200</text>
<text class="s" transform="scale(0.86,1)" x="758.14" y="243.00" letter-spacing="1.78" xml:space="preserve">200</text>
<text class="s" transform="scale(0.86,1)" x="383.45" y="25.00" letter-spacing="1.78" xml:space="preserve">300</text>
<text class="s" transform="scale(0.86,1)" x="383.45" y="661.00" letter-spacing="1.78" xml:space="preserve">300</text>
<text class="s" transform="scale(0.86,1)" x="7.01" y="343.00" letter-spacing="1.78" xml:space="preserve">300</text>
<text class="s" transform="scale(0.86,1)" x="758.14" y="343.00" letter-spacing="1.78" xml:space="preserve">300</text>
<text class="s" transform="scale(0.86,1)" x="499.73" y="25.00" letter-spacing="1.78" xml:space="preserve">400</text>
<text class="s" transform="scale(0.86,1)" x="499.73" y="661.00" letter-spacing="1.78" xml:space="preserve">400</text>
<text class="s" transform="scale(0.86,1)" x="7.01" y="443.00" letter-spacing="1.78" xml:space="preserve">400</text>
<text class="s" transform="scale(0.86,1)" x="758.14" y="443.00" letter-spacing="1.78" xml:space="preserve">400</text>
<text class="s" transform="scale(0.86,1)" x="616.01" y="25.00" letter-spacing="1.78" xml:space="preserve">500</text>
<text class="s" transform="scale(0.86,1)" x="616.01" y="661.00" letter-spacing="1.78" xml:space="preserve">500</text>
<text class="s" transform="scale(0.86,1)" x="7.01" y="543.00" letter-spacing="1.78" xml:space="preserve">500</text>
<text class="s" transform="scale(0.86,1)" x="758.14" y="543.00" letter-spacing="1.78" xml:space="preserve">500</text>
<text class="s" transform="scale(0.86,1)" x="732.29" y="25.00" letter-spacing="1.78" xml:space="preserve">600</text>
<text class="s" transform="scale(0.86,1)" x="732.29" y="661.00" letter-spacing="1.78" xml:space="preserve">600</text>
<text class="s" transform="scale(0.86,1)" x="7.01" y="643.00" letter-spacing="1.78" xml:space="preserve">600</text>
<text class="s" transform="scale(0.86,1)" x="758.14" y="643.00" letter-spacing="1.78" xml:space="preserve">600</text>
<text class="s" transform="scale(0.86,1)" x="69.77" y="25.00" letter-spacing="1.78" xml:space="preserve">SAMPLE</text>
<text class="s" transform="scale(0.86,1)" x="69.77" y="661.00" letter-spacing="1.78" xml:space="preserve">SAMPLE</text>
<text class="s" transform="scale(0.86,1)" x="23.26" y="66.00" letter-spacing="1.78" xml:space="preserve">L</text>
<text class="s" transform="scale(0.86,1)" x="761.05" y="66.00" letter-spacing="1.78" xml:space="preserve">L</text>
<text class="s" transform="scale(0.86,1)" x="23.26" y="78.00" letter-spacing="1.78" xml:space="preserve">I</text>
<text class="s" transform="scale(0.86,1)" x="761.05" y="78.00" letter-spacing="1.78" xml:space="preserve">I</text>
<text class="s" transform="scale(0.86,1)" x="23.26" y="90.00" letter-spacing="1.78" xml:space="preserve">N</text>
<text class="s" transform="scale(0.86,1)" x="761.05" y="90.00" letter-spacing="1.78" xml:space="preserve">N</text>
<text class="s" transform="scale(0.86,1)" x="23.26" y="102.00" letter-spacing="1.78" xml:space="preserve">E</text>
<text class="s" transform="scale(0.86,1)" x="761.05" y="102.00" letter-spacing="1.78" xml:space="preserve">E</text>
<!--globe-->
<polyline points="313.38,123.68 312.72,123.77 312.06,123.86 311.40,123.95 310.75,124.05 310.09,124.14 309.43,124.24 308.77,124.34 308.12,124.44 307.46,124.55 306.80,124.65 306.15,124.76 305.49,124.88 304.84,124.99 304.18,125.11 303.53,125.22 302.87,125.34 302.22,125.47 301.57,125.59 300.92,125.72 300.26,125.85 299.61,125.98 298.96,126.11 298.31,126.25 297.66,126.39 297.01,126.53 296.36,126.67 295.71,126.81 295.06,126.96 294.42,127.11 293.77,127.26 293.12,127.42 292.48,127.57 291.83,127.73 291.18,127.89 290.54,128.05 289.89,128.22 289.25,128.38 288.61,128.55 287.97,128.72 287.32,128.90 286.68,129.07 286.04,129.25 285.40,129.43 284.76,129.61 284.12,129.80 283.48,129.98 282.84,130.17 282.21,130.36 281.57,130.55 280.93,130.75 280.30,130.95 279.66,131.15 279.03,131.35 278.40,131.55 277.76,131.76 277.13,131.96 276.50,132.17 275.87,132.39 275.24,132.60 274.61,132.82 273.98,133.04 273.35,133.26 272.72,133.48 272.10,133.71 271.47,133.93 270.85,134.16 270.22,134.39 269.60,134.63 268.97,134.86 268.35,135.10 267.73,135.34 267.11,135.58 266.49,135.83 265.87,136.07 265.25,136.32 264.63,136.57 264.02,136.82 263.40,137.08 262.78,137.34 262.17,137.60 261.56,137.86 260.94,138.12 260.33,138.38 259.72,138.65 259.11,138.92 258.50,139.19 257.89,139.47 257.28,139.74 256.68,140.02 256.07,140.30 255.46,140.58 254.86,140.87 254.26,141.15 253.65,141.44 253.05,141.73 252.45,142.02 251.85,142.32 251.25,142.61 250.65,142.91 250.06,143.21 249.46,143.51 248.87,143.82 248.27,144.12 247.68,144.43 247.09,144.74 246.49,145.06 245.90,145.37 245.31,145.69 244.73,146.01 244.14,146.33 243.55,146.65 242.97,146.97 242.38,147.30 241.80,147.63 241.21,147.96 240.63,148.29 240.05,148.63 239.47,148.96 238.90,149.30 238.32,149.64 237.74,149.99 237.17,150.33 236.59,150.68 236.02,151.02 235.45,151.38 234.88,151.73 234.31,152.08 233.74,152.44 233.17,152.80 232.60,153.16 232.04,153.52 231.47,153.88 230.91,154.25 230.35,154.62 229.79,154.99 229.23,155.36 228.67,155.73 228.11,156.11 227.55,156.49 227.00,156.87 226.44,157.25 225.89,157.63 225.34,158.01 224.79,158.40 224.24,158.79 223.69,159.18 223.14,159.57 222.60,159.97 222.05,160.37 221.51,160.76 220.97,161.16 220.43,161.57 219.89,161.97 219.35,162.38 218.81,162.78 218.27,163.19 217.74,163.60 217.21,164.02 216.67,164.43 216.14,164.85 215.61,165.27 215.08,165.69 214.56,166.11 214.03,166.53 213.51,166.96 212.98,167.39 212.46,167.82 211.94,168.25 211.42,168.68 210.90,169.12 210.39,169.55 209.87,169.99 209.36,170.43 208.84,170.87 208.33,171.32 207.82,171.76 207.31,172.21 206.80,172.66 206.30,173.11 205.79,173.56 205.29,174.02 204.79,174.47 204.29,174.93 203.79,175.39 203.29,175.85 202.79,176.32 202.30,176.78 201.81,177.25 201.31,177.71 200.82,178.18 200.33,178.66 199.85,179.13 199.36,179.60 198.87,180.08 198.39,180.56 197.91,181.04 197.43,181.52 196.95,182.00 196.47,182.49 195.99,182.97 195.52,183.46 195.04,183.95 194.57,184.44 194.10,184.94 193.63,185.43 193.17,185.93 192.70,186.43 192.24,186.93 191.77,187.43 191.31,187.93 190.85,188.43 190.39,188.94 189.94,189.45 189.48,189.96 189.03,190.47 188.57,190.98 188.12,191.49 187.67,192.01 187.23,192.53 186.78,193.04 186.33,193.56 185.89,194.09 185.45,194.61 185.01,195.13 184.57,195.66 184.14,196.19 183.70,196.72 183.27,197.25 182.83,197.78 182.40,198.31 181.98,198.85 181.55,199.39 181.12,199.92 180.70,200.46 180.28,201.00 179.86,201.55 179.44,202.09 179.02,202.64 178.60,203.18 178.19,203.73 177.78,204.28 177.37,204.83 176.96,205.39 176.55,205.94 176.14,206.50 175.74,207.05 175.34,207.61 174.93,208.17 174.54,208.73 174.14,209.30 173.74,209.86 173.35,210.43 172.95,210.99 172.56,211.56 172.17,212.13 171.79,212.70 171.40,213.27 171.02,213.85 170.64,214.42 170.25,215.00 169.88,215.58 169.50,216.16 169.12,216.74 168.75,217.32 168.38,217.90 168.01,218.48 167.64,219.07 167.27,219.66 166.91,220.24 166.54,220.83 166.18,221.42 165.82,222.02 165.47,222.61 165.11,223.20 164.75,223.80 164.40,224.40 164.05,225.00 163.70,225.59 163.35,226.20 163.01,226.80 162.67,227.40 162.32,228.00 161.98,228.61 161.65,229.22 161.31,229.82 160.97,230.43 160.64,231.04 160.31,231.66 159.98,232.27 159.65,232.88 159.33,233.50 159.00,234.11 158.68,234.73 158.36,235.35 158.04,235.97 157.73,236.59 157.41,237.21 157.10,237.83 156.79,238.46 156.48,239.08 156.17,239.71 155.87,240.33 155.56,240.96 155.26,241.59 154.96,242.22 154.67,242.85 154.37,243.49 154.08,244.12 153.78,244.75 153.49,245.39 153.20,246.03 152.92,246.67 152.63,247.30 152.35,247.94 152.07,248.58 151.79,249.23 151.51,249.87 151.24,250.51 150.97,251.16 150.69,251.80 150.42,252.45 150.16,253.10 149.89,253.75 149.63,254.40 149.37,255.05 149.11,255.70 148.85,256.35 148.59,257.00 148.34,257.66 148.09,258.31 147.84,258.97 147.59,259.63 147.34,260.28 147.10,260.94 146.86,261.60 146.62,262.26 146.38,262.92 146.14,263.59 145.91,264.25 145.67,264.91 145.44,265.58 145.21,266.24 144.99,266.91 144.76,267.58 144.54,268.24 144.32,268.91 144.10,269.58 143.88,270.25 143.67,270.92 143.46,271.60 143.25,272.27 143.04,272.94 142.83,273.62 142.63,274.29 142.42,274.97 142.22,275.64 142.02,276.32 141.83,277.00 141.63,277.68 141.44,278.36 141.25,279.04 141.06,279.72 140.87,280.40 140.69,281.08 140.50,281.76 140.32,282.45 140.14,283.13 139.97,283.82 139.79,284.50 139.62,285.19 139.45,285.88 139.28,286.56 139.11,287.25 138.95,287.94 138.79,288.63 138.63,289.32 138.47,290.01 138.31,290.70 138.16,291.39 138.00,292.08 137.85,292.78 137.71,293.47 137.56,294.16 137.42,294.86 137.27,295.55 137.13,296.25 136.99,296.95 136.86,297.64 136.72,298.34 136.59,299.04 136.46,299.73 136.34,300.43 136.21,301.13 136.09,301.83 135.96,302.53 135.84,303.23 135.73,303.93 135.61,304.64 135.50,305.34 135.39,306.04 135.28,306.74 135.17,307.45 135.06,308.15 134.96,308.85 134.86,309.56 134.76,310.26 134.66,310.97 134.57,311.67 134.48,312.38 134.39,313.09 134.30,313.79 134.21,314.50 134.13,315.21 134.04,315.91 133.96,316.62 133.89,317.33 133.81,318.04 133.74,318.75 133.66,319.46 133.59,320.17 133.53,320.88 133.46,321.59 133.40,322.30 133.34,323.01 133.28,323.72 133.22,324.43 133.16,325.14 133.11,325.86 133.06,326.57 133.01,327.28 132.96,327.99 132.92,328.71 132.88,329.42 132.84,330.13 132.80,330.84 132.76,331.56 132.73,332.27 132.69,332.99 132.66,333.70 132.64,334.41 132.61,335.13 132.59,335.84 132.56,336.56 132.54,337.27 132.53,337.99 132.51,338.70 132.50,339.42 132.49,340.13 132.48,340.85 132.47,341.56 132.46,342.28 132.46,343.00 132.46,343.71 132.46,344.43 132.46,345.14 132.47,345.86 132.48,346.57 132.49,347.29 132.50,348.01 132.51,348.72 132.53,349.44 132.55,350.15 132.57,350.87 132.59,351.59 132.61,352.30 132.64,353.02 132.67,353.73 132.70,354.45 132.73,355.17 132.77,355.88 132.80,356.60 132.84,357.31 132.88,358.03 132.92,358.74 132.97,359.46 133.02,360.17 133.07,360.89 133.12,361.60 133.17,362.32 133.23,363.03 133.28,363.75 133.34,364.46 133.41,365.18 133.47,365.89 133.54,366.61 133.60,367.32 133.67,368.03 133.75,368.75 133.82,369.46 133.90,370.17 133.98,370.89 134.06,371.60 134.14,372.31 134.22,373.03 134.31,373.74 134.40,374.45 134.49,375.16 134.58,375.87 134.68,376.58 134.78,377.29 134.88,378.01 134.98,378.72 135.08,379.43 135.19,380.14 135.29,380.85 135.40,381.55 135.51,382.26 135.63,382.97 135.74,383.68 135.86,384.39 135.98,385.10 136.10,385.80 136.23,386.51 136.35,387.22 136.48,387.92 136.61,388.63 136.74,389.33 136.88,390.04 137.02,390.74 137.15,391.45 137.29,392.15 137.44,392.85 137.58,393.56 137.73,394.26 137.88,394.96 138.03,395.66 138.18,396.36 138.33,397.07 138.49,397.77 138.65,398.47 138.81,399.17 138.97,399.86 139.14,400.56 139.31,401.26 139.47,401.96 139.65,402.65 139.82,403.35 139.99,404.05 140.17,404.74 140.35,405.44 140.53,406.13 140.71,406.82 140.90,407.52 141.09,408.21 141.28,408.90 141.47,409.59 141.66,410.28 141.85,410.97 142.05,411.66 142.25,412.35 142.45,413.04 142.66,413.73 142.86,414.41 143.07,415.10 143.28,415.79 143.49,416.47 143.70,417.16 143.92,417.84 144.13,418.52 144.35,419.21 144.57,419.89 144.80,420.57 145.02,421.25 145.25,421.93 145.48,422.61 145.71,423.29 145.94,423.96 146.18,424.64 146.41,425.32 146.65,425.99 146.89,426.67 147.13,427.34 147.38,428.01 147.63,428.69 147.87,429.36 148.12,430.03 148.38,430.70 148.63,431.37 148.89,432.03 149.14,432.70 149.40,433.37 149.67,434.03 149.93,434.70 150.20,435.36 150.46,436.03 150.73,436.69 151.01,437.35 151.28,438.01 151.55,438.67 151.83,439.33 152.11,439.99 152.39,440.65 152.68,441.30 152.96,441.96 153.25,442.61 153.54,443.27 153.83,443.92 154.12,444.57 154.41,445.22 154.71,445.87 155.01,446.52 155.31,447.17 155.61,447.82 155.91,448.46 156.22,449.11 156.53,449.75 156.84,450.39 157.15,451.04 157.46,451.68 157.77,452.32 158.09,452.96 158.41,453.60 158.73,454.23 159.05,454.87 159.38,455.50 159.70,456.14 160.03,456.77 160.36,457.40 160.69,458.03 161.02,458.66 161.36,459.29 161.70,459.92 162.03,460.55 162.37,461.17 162.72,461.80 163.06,462.42 163.41,463.04 163.75,463.66 164.10,464.28 164.45,464.90 164.81,465.52 165.16,466.14 165.52,466.75 165.88,467.36 166.24,467.98 166.60,468.59 166.96,469.20 167.33,469.81 167.69,470.42 168.06,471.03 168.43,471.63 168.80,472.24 169.18,472.84 169.55,473.44 169.93,474.04 170.31,474.64 170.69,475.24 171.07,475.84 171.46,476.44 171.84,477.03 172.23,477.62 172.62,478.22 173.01,478.81 173.41,479.40 173.80,479.99 174.20,480.57 174.59,481.16 174.99,481.74 175.39,482.33 175.80,482.91 176.20,483.49 176.61,484.07 177.02,484.65 177.43,485.23 177.84,485.80 178.25,486.37 178.66,486.95 179.08,487.52 179.50,488.09 179.92,488.66 180.34,489.23 180.76,489.79 181.19,490.36 181.61,490.92 182.04,491.48 182.47,492.04 182.90,492.60 183.33,493.16 183.76,493.71 184.20,494.27 184.64,494.82 185.08,495.37 185.52,495.92 185.96,496.47 186.40,497.02 186.85,497.57 187.29,498.11 187.74,498.66 188.19,499.20 188.64,499.74 189.09,500.28 189.55,500.81 190.00,501.35 190.46,501.88 190.92,502.42 191.38,502.95 191.84,503.48 192.30,504.01 192.77,504.53 193.23,505.06 193.70,505.58 194.17,506.10 194.64,506.63 195.11,507.14 195.59,507.66 196.06,508.18 196.54,508.69 197.02,509.21 197.50,509.72 197.98,510.23 198.46,510.74 198.94,511.24 199.43,511.75 199.92,512.25 200.41,512.75 200.89,513.25 201.39,513.75 201.88,514.25 202.37,514.74 202.87,515.24 203.36,515.73 203.86,516.22 204.36,516.71 204.86,517.20 205.36,517.68 205.87,518.16 206.37,518.65 206.88,519.13 207.39,519.61 207.90,520.08 208.41,520.56 208.92,521.03 209.43,521.50 209.95,521.98 210.46,522.44 210.98,522.91 211.50,523.38 212.02,523.84 212.54,524.30 213.06,524.76 213.58,525.22 214.11,525.68 214.63,526.13 215.16,526.59 215.69,527.04 216.22,527.49 216.75,527.93 217.28,528.38 217.82,528.83 218.35,529.27 218.89,529.71 219.43,530.15 219.97,530.59 220.51,531.02 221.05,531.45 221.59,531.89 222.13,532.32 222.68,532.75 223.22,533.17 223.77,533.60 224.32,534.02 224.87,534.44 225.42,534.86 225.97,535.28 226.53,535.69 227.08,536.11 227.64,536.52 228.19,536.93 228.75,537.34 229.31,537.75 229.87,538.15 230.43,538.55 230.99,538.95 231.56,539.35 232.12,539.75 232.69,540.15 233.25,540.54 233.82,540.93 234.39,541.32 234.96,541.71 235.53,542.09 236.10,542.48 236.68,542.86 237.25,543.24 237.83,543.62 238.40,543.99 238.98,544.37 239.56,544.74 240.14,545.11 240.72,545.48 241.30,545.85 241.88,546.21 242.47,546.58 243.05,546.94 243.64,547.30 244.22,547.65 244.81,548.01 245.40,548.36 245.99,548.71 246.58,549.06 247.17,549.41 247.77,549.75 248.36,550.10 248.95,550.44 249.55,550.78 250.15,551.12 250.74,551.45 251.34,551.78 251.94,552.12 252.54,552.45 253.14,552.77 253.74,553.10 254.35,553.42 254.95,553.74 255.55,554.06 256.16,554.38 256.77,554.70 257.37,555.01 257.98,555.32 258.59,555.63 259.20,555.94 259.81,556.24 260.42,556.54 261.03,556.85 261.65,557.15 262.26,557.44 262.88,557.74 263.49,558.03 264.11,558.32 264.72,558.61 265.34,558.90 265.96,559.18 266.58,559.46 267.20,559.75 267.82,560.02 268.44,560.30 269.07,560.57 269.69,560.85 270.31,561.12 270.94,561.39 271.56,561.65 272.19,561.92 272.82,562.18 273.44,562.44 274.07,562.69 274.70,562.95 275.33,563.20 275.96,563.46 276.59,563.70" fill="none" stroke="#1f5a96" stroke-width="1" shape-rendering="crispEdges"/>
<polyline points="342.43,122.15 343.13,122.15 343.82,122.16 344.52,122.18 345.22,122.20 345.91,122.23 346.61,122.26 347.30,122.30 348.00,122.35 348.69,122.40 349.39,122.46 350.09,122.52 350.78,122.60 351.48,122.67 352.17,122.76 352.86,122.85 353.56,122.94 354.25,123.04 354.95,123.15 355.64,123.27 356.33,123.39 357.02,123.51 357.72,123.65 358.41,123.78 359.10,123.93 359.79,124.08 360.48,124.24 361.17,124.40 361.86,124.57 362.55,124.75 363.23,124.93 363.92,125.12 364.61,125.31 365.29,125.51 365.98,125.72 366.67,125.93 367.35,126.15 368.03,126.37 368.72,126.60 369.40,126.84 370.08,127.08 370.76,127.33 371.44,127.59 372.12,127.85 372.80,128.11 373.48,128.39 374.15,128.66 374.83,128.95 375.50,129.24 376.18,129.54 376.85,129.84 377.52,130.15 378.19,130.46 378.86,130.78 379.53,131.11 380.20,131.44 380.87,131.78 381.53,132.13 382.20,132.48 382.86,132.83 383.53,133.20 384.19,133.56 384.85,133.94 385.51,134.32 386.17,134.70 386.82,135.09 387.48,135.49 388.13,135.90 388.79,136.30 389.44,136.72 390.09,137.14 390.74,137.57 391.39,138.00 392.03,138.44 392.68,138.88 393.32,139.33 393.97,139.78 394.61,140.24 395.25,140.71 395.89,141.18 396.52,141.66 397.16,142.14 397.79,142.63 398.42,143.13 399.05,143.63 399.68,144.13 400.31,144.65 400.94,145.16 401.56,145.69 402.18,146.21 402.81,146.75 403.43,147.29 404.04,147.83 404.66,148.38 405.27,148.94 405.89,149.50 406.50,150.07 407.11,150.64 407.72,151.21 408.32,151.80 408.93,152.39 409.53,152.98 410.13,153.58 410.73,154.18 411.32,154.79 411.92,155.41 412.51,156.03 413.10,156.65 413.69,157.28 414.28,157.92 414.86,158.56 415.44,159.20 416.03,159.86 416.60,160.51 417.18,161.17 417.76,161.84 418.33,162.51 418.90,163.19 419.47,163.87 420.04,164.56 420.60,165.25 421.16,165.95 421.72,166.65 422.28,167.36 422.84,168.07 423.39,168.79 423.94,169.51 424.49,170.23 425.04,170.97 425.58,171.70 426.12,172.44 426.66,173.19 427.20,173.94 427.74,174.70 428.27,175.46 428.80,176.22 429.33,176.99 429.85,177.77 430.38,178.54 430.90,179.33 431.42,180.12 431.93,180.91 432.45,181.71 432.96,182.51 433.47,183.32 433.97,184.13 434.48,184.94 434.98,185.76 435.48,186.59 435.97,187.42 436.47,188.25 436.96,189.09 437.45,189.93 437.93,190.78 438.42,191.63 438.90,192.48 439.38,193.34 439.85,194.20 440.32,195.07 440.79,195.94 441.26,196.82 441.73,197.70 442.19,198.59 442.65,199.47 443.10,200.37 443.56,201.26 444.01,202.16 444.46,203.07 444.90,203.98 445.34,204.89 445.78,205.80 446.22,206.73 446.65,207.65 447.08,208.58 447.51,209.51 447.94,210.44 448.36,211.38 448.78,212.33 449.20,213.27 449.61,214.22 450.02,215.18 450.43,216.14 450.83,217.10 451.24,218.06 451.63,219.03 452.03,220.00 452.42,220.98 452.81,221.96 453.20,222.94 453.58,223.93 453.96,224.92 454.34,225.91 454.72,226.90 455.09,227.90 455.46,228.91 455.82,229.91 456.18,230.92 456.54,231.93 456.90,232.95 457.25,233.97 457.60,234.99 457.95,236.01 458.29,237.04 458.63,238.07 458.97,239.11 459.30,240.14 459.63,241.18 459.96,242.23 460.29,243.27 460.61,244.32 460.92,245.37 461.24,246.43 461.55,247.48 461.86,248.54 462.16,249.61 462.46,250.67 462.76,251.74 463.06,252.81 463.35,253.88 463.64,254.96 463.92,256.04 464.20,257.12 464.48,258.20 464.76,259.29 465.03,260.38 465.30,261.47 465.56,262.56 465.82,263.65 466.08,264.75 466.34,265.85 466.59,266.95 466.83,268.06 467.08,269.16 467.32,270.27 467.56,271.38 467.79,272.50 468.02,273.61 468.25,274.73 468.47,275.85 468.69,276.97 468.91,278.09 469.12,279.22 469.33,280.34 469.54,281.47 469.74,282.60 469.94,283.73 470.14,284.87 470.33,286.00 470.52,287.14 470.71,288.28 470.89,289.42 471.07,290.56 471.24,291.71 471.41,292.85 471.58,294.00 471.75,295.15 471.91,296.30 472.06,297.45 472.22,298.60 472.37,299.75 472.51,300.91 472.66,302.06 472.80,303.22 472.93,304.38 473.06,305.54 473.19,306.70 473.32,307.87 473.44,309.03 473.56,310.19 473.67,311.36 473.78,312.53 473.89,313.69 473.99,314.86 474.09,316.03 474.19,317.20 474.28,318.37 474.37,319.54 474.46,320.72 474.54,321.89 474.62,323.07 474.69,324.24 474.76,325.42 474.83,326.59 474.89,327.77 474.95,328.95 475.01,330.12 475.06,331.30 475.11,332.48 475.16,333.66 475.20,334.84 475.24,336.02 475.27,337.20 475.30,338.38 475.33,339.56 475.35,340.74 475.37,341.92 475.39,343.10 475.40,344.29 475.41,345.47 475.42,346.65 475.42,347.83 475.42,349.01 475.41,350.19 475.40,351.37 475.39,352.56 475.37,353.74 475.35,354.92 475.33,356.10 475.30,357.28 475.27,358.46 475.24,359.64 475.20,360.82 475.16,362.00 475.11,363.18 475.06,364.36 475.01,365.54 474.95,366.71 474.89,367.89 474.83,369.07 474.76,370.24 474.69,371.42 474.62,372.59 474.54,373.77 474.46,374.94 474.37,376.12 474.28,377.29 474.19,378.46 474.09,379.63 473.99,380.80 473.89,381.97 473.78,383.13 473.67,384.30 473.56,385.47 473.44,386.63 473.32,387.79 473.19,388.96 473.06,390.12 472.93,391.28 472.80,392.44 472.66,393.60 472.51,394.75 472.37,395.91 472.22,397.06 472.06,398.21 471.91,399.36 471.75,400.51 471.58,401.66 471.41,402.81 471.24,403.95 471.07,405.10 470.89,406.24 470.71,407.38 470.52,408.52 470.33,409.66 470.14,410.79 469.94,411.93 469.74,413.06 469.54,414.19 469.33,415.32 469.12,416.44 468.91,417.57 468.69,418.69 468.47,419.81 468.25,420.93 468.02,422.05 467.79,423.16 467.56,424.28 467.32,425.39 467.08,426.50 466.83,427.60 466.59,428.71 466.34,429.81 466.08,430.91 465.82,432.01 465.56,433.10 465.30,434.19 465.03,435.28 464.76,436.37 464.48,437.46 464.20,438.54 463.92,439.62 463.64,440.70 463.35,441.78 463.06,442.85 462.76,443.92 462.46,444.99 462.16,446.05 461.86,447.12 461.55,448.18 461.24,449.23 460.92,450.29 460.61,451.34 460.29,452.39 459.96,453.43 459.63,454.48 459.30,455.52 458.97,456.55 458.63,457.59 458.29,458.62 457.95,459.65 457.60,460.67 457.25,461.69 456.90,462.71 456.54,463.73 456.18,464.74 455.82,465.75 455.46,466.75 455.09,467.76 454.72,468.76 454.34,469.75 453.96,470.74 453.58,471.73 453.20,472.72 452.81,473.70 452.42,474.68 452.03,475.66 451.63,476.63 451.24,477.60 450.83,478.56 450.43,479.52 450.02,480.48 449.61,481.44 449.20,482.39 448.78,483.33 448.36,484.28 447.94,485.22 447.51,486.15 447.08,487.08 446.65,488.01 446.22,488.93 445.78,489.86 445.34,490.77 444.90,491.68 444.46,492.59 444.01,493.50 443.56,494.40 443.10,495.29 442.65,496.19 442.19,497.07 441.73,497.96 441.26,498.84 440.79,499.72 440.32,500.59 439.85,501.46 439.38,502.32 438.90,503.18 438.42,504.03 437.93,504.88 437.45,505.73 436.96,506.57 436.47,507.41 435.97,508.24 435.48,509.07 434.98,509.90 434.48,510.72 433.97,511.53 433.47,512.34 432.96,513.15 432.45,513.95 431.93,514.75 431.42,515.54 430.90,516.33 430.38,517.12 429.85,517.89 429.33,518.67 428.80,519.44 428.27,520.20 427.74,520.96 427.20,521.72 426.66,522.47 426.12,523.22 425.58,523.96 425.04,524.69 424.49,525.43 423.94,526.15 423.39,526.87 422.84,527.59 422.28,528.30 421.72,529.01 421.16,529.71 420.60,530.41 420.04,531.10 419.47,531.79 418.90,532.47 418.33,533.15 417.76,533.82 417.18,534.49 416.60,535.15 416.03,535.80 415.44,536.46 414.86,537.10 414.28,537.74 413.69,538.38 413.10,539.01 412.51,539.63 411.92,540.25 411.32,540.87 410.73,541.48 410.13,542.08 409.53,542.68 408.93,543.27 408.32,543.86 407.72,544.45 407.11,545.02 406.50,545.59 405.89,546.16 405.27,546.72 404.66,547.28 404.04,547.83 403.43,548.37 402.81,548.91 402.18,549.45 401.56,549.97 400.94,550.50 400.31,551.01 399.68,551.53 399.05,552.03 398.42,552.53 397.79,553.03 397.16,553.52 396.52,554.00 395.89,554.48 395.25,554.95 394.61,555.42 393.97,555.88 393.32,556.33 392.68,556.78 392.03,557.22 391.39,557.66 390.74,558.09 390.09,558.52 389.44,558.94 388.79,559.36 388.13,559.76 387.48,560.17 386.82,560.57 386.17,560.96 385.51,561.34 384.85,561.72 384.19,562.10 383.53,562.46 382.86,562.83 382.20,563.18 381.53,563.53 380.87,563.88 380.20,564.22 379.53,564.55 378.86,564.88 378.19,565.20 377.52,565.51 376.85,565.82 376.18,566.12 375.50,566.42 374.83,566.71 374.15,567.00 373.48,567.27 372.80,567.55 372.12,567.81 371.44,568.07 370.76,568.33 370.08,568.58 369.40,568.82 368.72,569.06 368.03,569.29 367.35,569.51 366.67,569.73 365.98,569.94 365.29,570.15 364.61,570.35 363.92,570.54 363.23,570.73 362.55,570.91 361.86,571.09 361.17,571.26 360.48,571.42 359.79,571.58 359.10,571.73 358.41,571.88 357.72,572.01 357.02,572.15 356.33,572.27 355.64,572.39 354.95,572.51 354.25,572.62 353.56,572.72 352.86,572.81 352.17,572.90 351.48,572.99 350.78,573.06 350.09,573.14 349.39,573.20 348.69,573.26 348.00,573.31 347.30,573.36 346.61,573.40 345.91,573.43 345.22,573.46 344.52,573.48 343.82,573.50 343.13,573.51 342.43,573.51" fill="none" stroke="#1f4f88" stroke-width="1.1" stroke-dasharray="1.2 3"/>
<polyline points="233.00,148.60 357.00,144.80" fill="none" stroke="#1f5a96" stroke-width="1" shape-rendering="crispEdges"/>
<polyline points="357.00,144.80 442.00,144.30 449.00,147.50" fill="none" stroke="#1f4f88" stroke-width="1.1" stroke-dasharray="1.2 3"/>
<polyline points="136.30,231.20 385.00,223.60" fill="none" stroke="#1f5a96" stroke-width="1" shape-rendering="crispEdges"/>
<polyline points="385.00,223.60 541.00,225.40" fill="none" stroke="#1f4f88" stroke-width="1.1" stroke-dasharray="1.2 3"/>
<polyline points="100.20,350.30 403.00,346.60" fill="none" stroke="#1f5a96" stroke-width="1" shape-rendering="crispEdges"/>
<polyline points="403.00,346.60 579.60,342.30" fill="none" stroke="#1f4f88" stroke-width="1.1" stroke-dasharray="1.2 3"/>
<polyline points="140.00,470.60 394.30,470.30" fill="none" stroke="#1f5a96" stroke-width="1" shape-rendering="crispEdges"/>
<polyline points="394.30,470.30 470.00,468.00 547.00,461.00" fill="none" stroke="#1f4f88" stroke-width="1.1" stroke-dasharray="1.2 3"/>
<polyline points="236.00,549.30 377.00,549.30" fill="none" stroke="#1f5a96" stroke-width="1" shape-rendering="crispEdges"/>
<polyline points="377.00,549.30 450.00,546.40 460.60,541.60" fill="none" stroke="#1f4f88" stroke-width="1.1" stroke-dasharray="1.2 3"/>
<polyline points="341.00,122.00 337.62,122.01 335.73,122.03 333.85,122.06 331.96,122.11 330.08,122.17 328.19,122.25 326.31,122.34 324.43,122.44 322.55,122.56 320.67,122.69 318.79,122.84 316.91,123.00 315.04,123.17 313.16,123.36 311.29,123.56 309.42,123.77 307.55,124.00 305.68,124.24 303.82,124.50 301.96,124.77 300.10,125.05 298.24,125.35 296.38,125.66 294.53,125.99 292.68,126.32 290.83,126.67 288.99,127.04 287.15,127.42 285.31,127.81 283.47,128.22 281.64,128.64 279.81,129.07 277.99,129.51 276.17,129.97 274.35,130.45 272.54,130.93 270.73,131.43 268.93,131.95 267.13,132.47 265.34,133.01 263.55,133.56 261.76,134.13 259.98,134.71 258.20,135.30 256.43,135.91 254.67,136.53 252.91,137.16 251.15,137.80 249.40,138.46 247.66,139.13 245.92,139.81 244.18,140.51 242.46,141.21 240.74,141.93 239.02,142.67 237.31,143.41 235.61,144.17 233.91,144.94 232.23,145.73 230.54,146.52 228.87,147.33 227.20,148.15 225.53,148.99 223.88,149.83 222.23,150.69 220.59,151.56 218.96,152.44 217.33,153.33 215.71,154.24 214.10,155.16 212.50,156.09 210.90,157.03 209.31,157.98 207.73,158.94 206.16,159.92 204.60,160.91 203.05,161.91 201.50,162.92 199.96,163.94 198.43,164.97 196.91,166.02 195.40,167.07 193.90,168.14 192.40,169.22 190.92,170.30 189.44,171.40 187.98,172.51 186.52,173.63 185.07,174.77 183.63,175.91 182.20,177.06 180.79,178.23 179.38,179.40 177.98,180.58 176.59,181.78 175.21,182.98 173.84,184.20 172.48,185.42 171.13,186.66 169.79,187.90 168.47,189.16 167.15,190.42 165.84,191.69 164.55,192.98 163.26,194.27 161.99,195.57 160.73,196.88 159.47,198.20 158.23,199.53 157.00,200.87 155.78,202.22 154.58,203.58 153.38,204.95 152.20,206.32 151.02,207.70 149.86,209.10 148.71,210.50 147.58,211.91 146.45,213.32 145.34,214.75 144.23,216.18 143.14,217.62 142.07,219.07 141.00,220.53 139.95,222.00 138.91,223.47 137.88,224.95 136.86,226.44 135.86,227.93 134.87,229.44 133.89,230.95 132.92,232.47 131.97,233.99 131.03,235.52 130.10,237.06 129.19,238.61 128.28,240.16 127.40,241.72 126.52,243.28 125.66,244.85 124.81,246.43 123.97,248.01 123.15,249.60 122.34,251.20 121.55,252.80 120.76,254.41 119.99,256.02 119.24,257.64 118.50,259.27 117.77,260.90 117.05,262.53 116.35,264.17 115.67,265.82 114.99,267.47 114.33,269.12 113.69,270.78 113.06,272.45 112.44,274.12 111.84,275.79 111.25,277.47 110.67,279.15 110.11,280.84 109.56,282.53 109.03,284.23 108.51,285.93 108.01,287.63 107.52,289.33 107.04,291.04 106.58,292.76 106.13,294.47 105.70,296.19 105.28,297.92 104.88,299.64 104.49,301.37 104.11,303.10 103.75,304.84 103.41,306.58 103.07,308.32 102.76,310.06 102.45,311.80 102.17,313.55 101.89,315.30 101.64,317.05 101.39,318.80 101.16,320.55 100.95,322.31 100.75,324.07 100.57,325.83 100.40,327.59 100.24,329.35 100.10,331.11 99.97,332.87 99.86,334.64 99.77,336.40 99.69,338.17 99.62,339.93 99.57,341.70 99.53,343.47 99.51,345.23 99.50,347.00 99.51,348.77 99.53,350.53 99.57,352.30 99.62,354.07 99.69,355.83 99.77,357.60 99.86,359.36 99.97,361.13 100.10,362.89 100.24,364.65 100.40,366.41 100.57,368.17 100.75,369.93 100.95,371.69 101.16,373.45 101.39,375.20 101.64,376.95 101.89,378.70 102.17,380.45 102.45,382.20 102.76,383.94 103.07,385.68 103.41,387.42 103.75,389.16 104.11,390.90 104.49,392.63 104.88,394.36 105.28,396.08 105.70,397.81 106.13,399.53 106.58,401.24 107.04,402.96 107.52,404.67 108.01,406.37 108.51,408.07 109.03,409.77 109.56,411.47 110.11,413.16 110.67,414.85 111.25,416.53 111.84,418.21 112.44,419.88 113.06,421.55 113.69,423.22 114.33,424.88 114.99,426.53 115.67,428.18 116.35,429.83 117.05,431.47 117.77,433.10 118.50,434.73 119.24,436.36 119.99,437.98 120.76,439.59 121.55,441.20 122.34,442.80 123.15,444.40 123.97,445.99 124.81,447.57 125.66,449.15 126.52,450.72 127.40,452.28 128.28,453.84 129.19,455.39 130.10,456.94 131.03,458.48 131.97,460.01 132.92,461.53 133.89,463.05 134.87,464.56 135.86,466.07 136.86,467.56 137.88,469.05 138.91,470.53 139.95,472.00 141.00,473.47 142.07,474.93 143.14,476.38 144.23,477.82 145.34,479.25 146.45,480.68 147.58,482.09 148.71,483.50 149.86,484.90 151.02,486.30 152.20,487.68 153.38,489.05 154.58,490.42 155.78,491.78 157.00,493.13 158.23,494.47 159.47,495.80 160.73,497.12 161.99,498.43 163.26,499.73 164.55,501.02 165.84,502.31 167.15,503.58 168.47,504.84 169.79,506.10 171.13,507.34 172.48,508.58 173.84,509.80 175.21,511.02 176.59,512.22 177.98,513.42 179.38,514.60 180.79,515.77 182.20,516.94 183.63,518.09 185.07,519.23 186.52,520.37 187.98,521.49 189.44,522.60 190.92,523.70 192.40,524.78 193.90,525.86 195.40,526.93 196.91,527.98 198.43,529.03 199.96,530.06 201.50,531.08 203.05,532.09 204.60,533.09 206.16,534.08 207.73,535.06 209.31,536.02 210.90,536.97 212.50,537.91 214.10,538.84 215.71,539.76 217.33,540.67 218.96,541.56 220.59,542.44 222.23,543.31 223.88,544.17 225.53,545.01 227.20,545.85 228.87,546.67 230.54,547.48 232.23,548.27 233.91,549.06 235.61,549.83 237.31,550.59 239.02,551.33 240.74,552.07 242.46,552.79 244.18,553.49 245.92,554.19 247.66,554.87 249.40,555.54 251.15,556.20 252.91,556.84 254.67,557.47 256.43,558.09 258.20,558.70 259.98,559.29 261.76,559.87 263.55,560.44 265.34,560.99 267.13,561.53 268.93,562.05 270.73,562.57 272.54,563.07 274.35,563.55 276.17,564.03 277.99,564.49 279.81,564.93 281.64,565.36 283.47,565.78 285.31,566.19 287.15,566.58 288.99,566.96 290.83,567.33 292.68,567.68 294.53,568.01 296.38,568.34 298.24,568.65 300.10,568.95 301.96,569.23 303.82,569.50 305.68,569.76 307.55,570.00 309.42,570.23 311.29,570.44 313.16,570.64 315.04,570.83 316.91,571.00 318.79,571.16 320.67,571.31 322.55,571.44 324.43,571.56 326.31,571.66 328.19,571.75 330.08,571.83 331.96,571.89 333.85,571.94 335.73,571.97 337.62,571.99 344.00,572.00" fill="none" stroke="#000" stroke-width="3.5"/>
<rect x="343" y="121" width="3" height="3" fill="#000"/>
<rect x="353" y="121" width="3" height="3" fill="#000"/>
<rect x="363" y="122" width="3" height="3" fill="#000"/>
<rect x="373" y="123" width="3" height="3" fill="#000"/>
<rect x="383" y="124" width="3" height="3" fill="#000"/>
<rect x="393" y="126" width="3" height="3" fill="#000"/>
<rect x="403" y="129" width="3" height="3" fill="#000"/>
<rect x="413" y="132" width="3" height="3" fill="#000"/>
<rect x="422" y="135" width="3" height="3" fill="#000"/>
<rect x="432" y="138" width="3" height="3" fill="#000"/>
<rect x="441" y="142" width="3" height="3" fill="#000"/>
<rect x="450" y="147" width="3" height="3" fill="#000"/>
<rect x="460" y="151" width="3" height="3" fill="#000"/>
<rect x="468" y="157" width="3" height="3" fill="#000"/>
<rect x="477" y="162" width="3" height="3" fill="#000"/>
<rect x="485" y="168" width="3" height="3" fill="#000"/>
<rect x="493" y="174" width="3" height="3" fill="#000"/>
<rect x="501" y="181" width="3" height="3" fill="#000"/>
<rect x="509" y="187" width="3" height="3" fill="#000"/>
<rect x="516" y="195" width="3" height="3" fill="#000"/>
<rect x="523" y="202" width="3" height="3" fill="#000"/>
<rect x="529" y="210" width="3" height="3" fill="#000"/>
<rect x="536" y="218" width="3" height="3" fill="#000"/>
<rect x="542" y="226" width="3" height="3" fill="#000"/>
<rect x="547" y="235" width="3" height="3" fill="#000"/>
<rect x="552" y="244" width="3" height="3" fill="#000"/>
<rect x="557" y="253" width="3" height="3" fill="#000"/>
<rect x="561" y="262" width="3" height="3" fill="#000"/>
<rect x="565" y="272" width="3" height="3" fill="#000"/>
<rect x="568" y="281" width="3" height="3" fill="#000"/>
<rect x="571" y="291" width="3" height="3" fill="#000"/>
<rect x="573" y="301" width="3" height="3" fill="#000"/>
<rect x="575" y="311" width="3" height="3" fill="#000"/>
<rect x="577" y="321" width="3" height="3" fill="#000"/>
<rect x="578" y="331" width="3" height="3" fill="#000"/>
<rect x="578" y="341" width="3" height="3" fill="#000"/>
<rect x="578" y="352" width="3" height="3" fill="#000"/>
<rect x="577" y="362" width="3" height="3" fill="#000"/>
<rect x="576" y="372" width="3" height="3" fill="#000"/>
<rect x="575" y="382" width="3" height="3" fill="#000"/>
<rect x="573" y="392" width="3" height="3" fill="#000"/>
<rect x="570" y="402" width="3" height="3" fill="#000"/>
<rect x="567" y="412" width="3" height="3" fill="#000"/>
<rect x="564" y="421" width="3" height="3" fill="#000"/>
<rect x="560" y="431" width="3" height="3" fill="#000"/>
<rect x="556" y="440" width="3" height="3" fill="#000"/>
<rect x="551" y="449" width="3" height="3" fill="#000"/>
<rect x="546" y="458" width="3" height="3" fill="#000"/>
<rect x="540" y="467" width="3" height="3" fill="#000"/>
<rect x="534" y="475" width="3" height="3" fill="#000"/>
<rect x="528" y="483" width="3" height="3" fill="#000"/>
<rect x="522" y="490" width="3" height="3" fill="#000"/>
<rect x="515" y="498" width="3" height="3" fill="#000"/>
<rect x="507" y="505" width="3" height="3" fill="#000"/>
<rect x="500" y="512" width="3" height="3" fill="#000"/>
<rect x="492" y="518" width="3" height="3" fill="#000"/>
<rect x="484" y="524" width="3" height="3" fill="#000"/>
<rect x="475" y="530" width="3" height="3" fill="#000"/>
<rect x="467" y="535" width="3" height="3" fill="#000"/>
<rect x="458" y="541" width="3" height="3" fill="#000"/>
<rect x="449" y="545" width="3" height="3" fill="#000"/>
<rect x="439" y="549" width="3" height="3" fill="#000"/>
<rect x="430" y="553" width="3" height="3" fill="#000"/>
<rect x="420" y="557" width="3" height="3" fill="#000"/>
<rect x="411" y="560" width="3" height="3" fill="#000"/>
<rect x="401" y="563" width="3" height="3" fill="#000"/>
<rect x="391" y="565" width="3" height="3" fill="#000"/>
<rect x="381" y="567" width="3" height="3" fill="#000"/>
<rect x="371" y="568" width="3" height="3" fill="#000"/>
<rect x="361" y="569" width="3" height="3" fill="#000"/>
<rect x="351" y="570" width="3" height="3" fill="#000"/>
<text class="g" x="479" y="355" letter-spacing="0.3">0,0</text>
<text class="g" x="345.3" y="581" letter-spacing="0">NP</text>
<path d="M473,343 l5,5 M478,343 l-5,5" stroke="#1f5a96" stroke-width="1"/>
<path d="M340,569 l5,5 M345,569 l-5,5" stroke="#1f5a96" stroke-width="1"/>
<rect x="386.5" y="106.5" width="2" height="46" fill="none" stroke="#b82a2a" stroke-width="1"/>
<rect x="385" y="129" width="5" height="3" fill="#5a0a0a"/>
<rect x="385" y="136" width="5" height="1" fill="#2a0505"/>
<rect x="389" y="130" width="3" height="2" fill="#e06060"/>
<text class="b" transform="scale(0.84,1)" x="827.38" y="31.00" letter-spacing="1.88" xml:space="preserve">AREA 1=(24,2,2,2) LAT= -67.9 LON=   3.6 WEST</text>
<rect x="731" y="40" width="423" height="1" fill="#fff"/>
<rect x="738" y="40" width="1" height="257" fill="#fff"/>
<rect x="1147" y="40" width="1" height="257" fill="#fff"/>
<rect x="732" y="40" width="6" height="1" fill="#fff"/>
<rect x="1148" y="40" width="6" height="1" fill="#fff"/>
<rect x="736" y="48" width="2" height="1" fill="#fff"/>
<rect x="1148" y="48" width="2" height="1" fill="#fff"/>
<rect x="734" y="56" width="4" height="1" fill="#fff"/>
<rect x="1148" y="56" width="4" height="1" fill="#fff"/>
<rect x="736" y="64" width="2" height="1" fill="#fff"/>
<rect x="1148" y="64" width="2" height="1" fill="#fff"/>
<rect x="732" y="72" width="6" height="1" fill="#fff"/>
<rect x="1148" y="72" width="6" height="1" fill="#fff"/>
<rect x="736" y="80" width="2" height="1" fill="#fff"/>
<rect x="1148" y="80" width="2" height="1" fill="#fff"/>
<rect x="734" y="88" width="4" height="1" fill="#fff"/>
<rect x="1148" y="88" width="4" height="1" fill="#fff"/>
<rect x="736" y="96" width="2" height="1" fill="#fff"/>
<rect x="1148" y="96" width="2" height="1" fill="#fff"/>
<rect x="732" y="104" width="6" height="1" fill="#fff"/>
<rect x="1148" y="104" width="6" height="1" fill="#fff"/>
<rect x="736" y="112" width="2" height="1" fill="#fff"/>
<rect x="1148" y="112" width="2" height="1" fill="#fff"/>
<rect x="734" y="120" width="4" height="1" fill="#fff"/>
<rect x="1148" y="120" width="4" height="1" fill="#fff"/>
<rect x="736" y="128" width="2" height="1" fill="#fff"/>
<rect x="1148" y="128" width="2" height="1" fill="#fff"/>
<rect x="732" y="136" width="6" height="1" fill="#fff"/>
<rect x="1148" y="136" width="6" height="1" fill="#fff"/>
<rect x="736" y="144" width="2" height="1" fill="#fff"/>
<rect x="1148" y="144" width="2" height="1" fill="#fff"/>
<rect x="734" y="152" width="4" height="1" fill="#fff"/>
<rect x="1148" y="152" width="4" height="1" fill="#fff"/>
<rect x="736" y="160" width="2" height="1" fill="#fff"/>
<rect x="1148" y="160" width="2" height="1" fill="#fff"/>
<rect x="732" y="168" width="6" height="1" fill="#fff"/>
<rect x="1148" y="168" width="6" height="1" fill="#fff"/>
<rect x="736" y="175" width="2" height="1" fill="#fff"/>
<rect x="1148" y="175" width="2" height="1" fill="#fff"/>
<rect x="734" y="183" width="4" height="1" fill="#fff"/>
<rect x="1148" y="183" width="4" height="1" fill="#fff"/>
<rect x="736" y="191" width="2" height="1" fill="#fff"/>
<rect x="1148" y="191" width="2" height="1" fill="#fff"/>
<rect x="732" y="199" width="6" height="1" fill="#fff"/>
<rect x="1148" y="199" width="6" height="1" fill="#fff"/>
<rect x="736" y="207" width="2" height="1" fill="#fff"/>
<rect x="1148" y="207" width="2" height="1" fill="#fff"/>
<rect x="734" y="215" width="4" height="1" fill="#fff"/>
<rect x="1148" y="215" width="4" height="1" fill="#fff"/>
<rect x="736" y="223" width="2" height="1" fill="#fff"/>
<rect x="1148" y="223" width="2" height="1" fill="#fff"/>
<rect x="732" y="231" width="6" height="1" fill="#fff"/>
<rect x="1148" y="231" width="6" height="1" fill="#fff"/>
<rect x="736" y="239" width="2" height="1" fill="#fff"/>
<rect x="1148" y="239" width="2" height="1" fill="#fff"/>
<rect x="734" y="247" width="4" height="1" fill="#fff"/>
<rect x="1148" y="247" width="4" height="1" fill="#fff"/>
<rect x="736" y="255" width="2" height="1" fill="#fff"/>
<rect x="1148" y="255" width="2" height="1" fill="#fff"/>
<rect x="732" y="263" width="6" height="1" fill="#fff"/>
<rect x="1148" y="263" width="6" height="1" fill="#fff"/>
<rect x="736" y="271" width="2" height="1" fill="#fff"/>
<rect x="1148" y="271" width="2" height="1" fill="#fff"/>
<rect x="734" y="279" width="4" height="1" fill="#fff"/>
<rect x="1148" y="279" width="4" height="1" fill="#fff"/>
<rect x="736" y="287" width="2" height="1" fill="#fff"/>
<rect x="1148" y="287" width="2" height="1" fill="#fff"/>
<rect x="732" y="295" width="6" height="1" fill="#fff"/>
<rect x="1148" y="295" width="6" height="1" fill="#fff"/>
<rect x="738" y="300" width="410" height="1" fill="#fff"/>
<rect x="739" y="301" width="1" height="6" fill="#fff"/>
<rect x="755" y="301" width="1" height="6" fill="#fff"/>
<rect x="771" y="301" width="1" height="6" fill="#fff"/>
<rect x="787" y="301" width="1" height="9" fill="#fff"/>
<rect x="796" y="301" width="1" height="6" fill="#fff"/>
<rect x="804" y="301" width="1" height="6" fill="#fff"/>
<rect x="813" y="301" width="1" height="6" fill="#fff"/>
<rect x="821" y="301" width="1" height="6" fill="#fff"/>
<rect x="830" y="301" width="1" height="9" fill="#fff"/>
<rect x="838" y="301" width="1" height="6" fill="#fff"/>
<rect x="847" y="301" width="1" height="6" fill="#fff"/>
<rect x="855" y="301" width="1" height="6" fill="#fff"/>
<rect x="864" y="301" width="1" height="6" fill="#fff"/>
<rect x="872" y="301" width="1" height="9" fill="#fff"/>
<rect x="881" y="301" width="1" height="6" fill="#fff"/>
<rect x="890" y="301" width="1" height="6" fill="#fff"/>
<rect x="898" y="301" width="1" height="6" fill="#fff"/>
<rect x="907" y="301" width="1" height="6" fill="#fff"/>
<rect x="915" y="301" width="1" height="9" fill="#fff"/>
<rect x="924" y="301" width="1" height="6" fill="#fff"/>
<rect x="932" y="301" width="1" height="6" fill="#fff"/>
<rect x="941" y="301" width="1" height="6" fill="#fff"/>
<rect x="949" y="301" width="1" height="6" fill="#fff"/>
<rect x="958" y="301" width="1" height="9" fill="#fff"/>
<rect x="967" y="301" width="1" height="6" fill="#fff"/>
<rect x="975" y="301" width="1" height="6" fill="#fff"/>
<rect x="984" y="301" width="1" height="6" fill="#fff"/>
<rect x="992" y="301" width="1" height="6" fill="#fff"/>
<rect x="1001" y="301" width="1" height="9" fill="#fff"/>
<rect x="1009" y="301" width="1" height="6" fill="#fff"/>
<rect x="1018" y="301" width="1" height="6" fill="#fff"/>
<rect x="1026" y="301" width="1" height="6" fill="#fff"/>
<rect x="1035" y="301" width="1" height="6" fill="#fff"/>
<rect x="1044" y="301" width="1" height="9" fill="#fff"/>
<rect x="1052" y="301" width="1" height="6" fill="#fff"/>
<rect x="1061" y="301" width="1" height="6" fill="#fff"/>
<rect x="1069" y="301" width="1" height="6" fill="#fff"/>
<rect x="1078" y="301" width="1" height="6" fill="#fff"/>
<rect x="1086" y="301" width="1" height="9" fill="#fff"/>
<rect x="1095" y="301" width="1" height="6" fill="#fff"/>
<rect x="1103" y="301" width="1" height="6" fill="#fff"/>
<rect x="1112" y="301" width="1" height="6" fill="#fff"/>
<rect x="1120" y="301" width="1" height="6" fill="#fff"/>
<rect x="1129" y="301" width="1" height="9" fill="#fff"/>
<rect x="1138" y="301" width="1" height="6" fill="#fff"/>
<rect x="1146" y="301" width="1" height="6" fill="#fff"/>
<rect x="1147" y="301" width="1" height="6" fill="#fff"/>
<text class="s" transform="scale(0.86,1)" x="912.52" y="320.00" letter-spacing="0.62" xml:space="preserve">1</text>
<text class="s" transform="scale(0.86,1)" x="1011.94" y="320.00" letter-spacing="0.62" xml:space="preserve">2</text>
<text class="s" transform="scale(0.86,1)" x="1111.35" y="320.00" letter-spacing="0.62" xml:space="preserve">3</text>
<text class="s" transform="scale(0.86,1)" x="1210.77" y="320.00" letter-spacing="0.62" xml:space="preserve">4</text>
<text class="s" transform="scale(0.86,1)" x="1310.19" y="320.00" letter-spacing="0.62" xml:space="preserve">5</text>
<text class="s" transform="scale(0.86,1)" x="1077.91" y="337.00" letter-spacing="1.78" xml:space="preserve">MICRONS</text>
<text class="s" transform="scale(0.86,1)" x="801.47" y="147.00" letter-spacing="1.78" xml:space="preserve">B</text>
<text class="s" transform="scale(0.86,1)" x="801.47" y="167.00" letter-spacing="1.78" xml:space="preserve">D</text>
<text class="s" transform="scale(0.86,1)" x="801.47" y="187.00" letter-spacing="1.78" xml:space="preserve">R</text>
<text class="s" transform="scale(0.86,1)" x="801.47" y="207.00" letter-spacing="1.78" xml:space="preserve">F</text>
<text class="s" transform="scale(0.86,1)" x="1394.49" y="117.00" letter-spacing="1.78" xml:space="preserve">R</text>
<text class="s" transform="scale(0.86,1)" x="1394.49" y="132.10" letter-spacing="1.78" xml:space="preserve">A</text>
<text class="s" transform="scale(0.86,1)" x="1394.49" y="147.20" letter-spacing="1.78" xml:space="preserve">D</text>
<text class="s" transform="scale(0.86,1)" x="1394.49" y="162.30" letter-spacing="1.78" xml:space="preserve">I</text>
<text class="s" transform="scale(0.86,1)" x="1394.49" y="177.40" letter-spacing="1.78" xml:space="preserve">A</text>
<text class="s" transform="scale(0.86,1)" x="1394.49" y="192.50" letter-spacing="1.78" xml:space="preserve">N</text>
<text class="s" transform="scale(0.86,1)" x="1394.49" y="207.60" letter-spacing="1.78" xml:space="preserve">C</text>
<text class="s" transform="scale(0.86,1)" x="1394.49" y="222.70" letter-spacing="1.78" xml:space="preserve">E</text>
<text class="s" transform="scale(0.86,1)" x="820.38" y="44.00" letter-spacing="0.62" xml:space="preserve">.005</text>
<text class="s" transform="scale(0.86,1)" x="813.41" y="171.50" letter-spacing="0.62" xml:space="preserve">.0025</text>
<text class="s" transform="scale(0.86,1)" x="841.31" y="299.00" letter-spacing="0.62" xml:space="preserve">0</text>
<text class="s" transform="scale(0.86,1)" x="1344.19" y="44.00" letter-spacing="0.62" xml:space="preserve">5.0</text>
<text class="s" transform="scale(0.86,1)" x="1344.19" y="107.75" letter-spacing="0.62" xml:space="preserve">3.75</text>
<text class="s" transform="scale(0.86,1)" x="1344.19" y="171.50" letter-spacing="0.62" xml:space="preserve">2.5</text>
<text class="s" transform="scale(0.86,1)" x="1344.19" y="235.25" letter-spacing="0.62" xml:space="preserve">1.25</text>
<text class="s" transform="scale(0.86,1)" x="1344.19" y="299.00" letter-spacing="0.62" xml:space="preserve">0</text>
<rect x="1049" y="41" width="1" height="256" fill="#a8a8a8"/>
<text class="b" transform="scale(0.84,1)" x="1458.33" y="31.00" letter-spacing="1.88" xml:space="preserve">AREA 4=(18,2,2,2) LAT=-1000.0 LON=-1000.0 WEST</text>
<rect x="1261" y="40" width="423" height="1" fill="#fff"/>
<rect x="1268" y="40" width="1" height="257" fill="#fff"/>
<rect x="1677" y="40" width="1" height="257" fill="#fff"/>
<rect x="1262" y="40" width="6" height="1" fill="#fff"/>
<rect x="1678" y="40" width="6" height="1" fill="#fff"/>
<rect x="1266" y="48" width="2" height="1" fill="#fff"/>
<rect x="1678" y="48" width="2" height="1" fill="#fff"/>
<rect x="1264" y="56" width="4" height="1" fill="#fff"/>
<rect x="1678" y="56" width="4" height="1" fill="#fff"/>
<rect x="1266" y="64" width="2" height="1" fill="#fff"/>
<rect x="1678" y="64" width="2" height="1" fill="#fff"/>
<rect x="1262" y="72" width="6" height="1" fill="#fff"/>
<rect x="1678" y="72" width="6" height="1" fill="#fff"/>
<rect x="1266" y="80" width="2" height="1" fill="#fff"/>
<rect x="1678" y="80" width="2" height="1" fill="#fff"/>
<rect x="1264" y="88" width="4" height="1" fill="#fff"/>
<rect x="1678" y="88" width="4" height="1" fill="#fff"/>
<rect x="1266" y="96" width="2" height="1" fill="#fff"/>
<rect x="1678" y="96" width="2" height="1" fill="#fff"/>
<rect x="1262" y="104" width="6" height="1" fill="#fff"/>
<rect x="1678" y="104" width="6" height="1" fill="#fff"/>
<rect x="1266" y="112" width="2" height="1" fill="#fff"/>
<rect x="1678" y="112" width="2" height="1" fill="#fff"/>
<rect x="1264" y="120" width="4" height="1" fill="#fff"/>
<rect x="1678" y="120" width="4" height="1" fill="#fff"/>
<rect x="1266" y="128" width="2" height="1" fill="#fff"/>
<rect x="1678" y="128" width="2" height="1" fill="#fff"/>
<rect x="1262" y="136" width="6" height="1" fill="#fff"/>
<rect x="1678" y="136" width="6" height="1" fill="#fff"/>
<rect x="1266" y="144" width="2" height="1" fill="#fff"/>
<rect x="1678" y="144" width="2" height="1" fill="#fff"/>
<rect x="1264" y="152" width="4" height="1" fill="#fff"/>
<rect x="1678" y="152" width="4" height="1" fill="#fff"/>
<rect x="1266" y="160" width="2" height="1" fill="#fff"/>
<rect x="1678" y="160" width="2" height="1" fill="#fff"/>
<rect x="1262" y="168" width="6" height="1" fill="#fff"/>
<rect x="1678" y="168" width="6" height="1" fill="#fff"/>
<rect x="1266" y="175" width="2" height="1" fill="#fff"/>
<rect x="1678" y="175" width="2" height="1" fill="#fff"/>
<rect x="1264" y="183" width="4" height="1" fill="#fff"/>
<rect x="1678" y="183" width="4" height="1" fill="#fff"/>
<rect x="1266" y="191" width="2" height="1" fill="#fff"/>
<rect x="1678" y="191" width="2" height="1" fill="#fff"/>
<rect x="1262" y="199" width="6" height="1" fill="#fff"/>
<rect x="1678" y="199" width="6" height="1" fill="#fff"/>
<rect x="1266" y="207" width="2" height="1" fill="#fff"/>
<rect x="1678" y="207" width="2" height="1" fill="#fff"/>
<rect x="1264" y="215" width="4" height="1" fill="#fff"/>
<rect x="1678" y="215" width="4" height="1" fill="#fff"/>
<rect x="1266" y="223" width="2" height="1" fill="#fff"/>
<rect x="1678" y="223" width="2" height="1" fill="#fff"/>
<rect x="1262" y="231" width="6" height="1" fill="#fff"/>
<rect x="1678" y="231" width="6" height="1" fill="#fff"/>
<rect x="1266" y="239" width="2" height="1" fill="#fff"/>
<rect x="1678" y="239" width="2" height="1" fill="#fff"/>
<rect x="1264" y="247" width="4" height="1" fill="#fff"/>
<rect x="1678" y="247" width="4" height="1" fill="#fff"/>
<rect x="1266" y="255" width="2" height="1" fill="#fff"/>
<rect x="1678" y="255" width="2" height="1" fill="#fff"/>
<rect x="1262" y="263" width="6" height="1" fill="#fff"/>
<rect x="1678" y="263" width="6" height="1" fill="#fff"/>
<rect x="1266" y="271" width="2" height="1" fill="#fff"/>
<rect x="1678" y="271" width="2" height="1" fill="#fff"/>
<rect x="1264" y="279" width="4" height="1" fill="#fff"/>
<rect x="1678" y="279" width="4" height="1" fill="#fff"/>
<rect x="1266" y="287" width="2" height="1" fill="#fff"/>
<rect x="1678" y="287" width="2" height="1" fill="#fff"/>
<rect x="1262" y="295" width="6" height="1" fill="#fff"/>
<rect x="1678" y="295" width="6" height="1" fill="#fff"/>
<rect x="1268" y="300" width="410" height="1" fill="#fff"/>
<rect x="1269" y="301" width="1" height="6" fill="#fff"/>
<rect x="1285" y="301" width="1" height="6" fill="#fff"/>
<rect x="1301" y="301" width="1" height="6" fill="#fff"/>
<rect x="1317" y="301" width="1" height="9" fill="#fff"/>
<rect x="1326" y="301" width="1" height="6" fill="#fff"/>
<rect x="1334" y="301" width="1" height="6" fill="#fff"/>
<rect x="1343" y="301" width="1" height="6" fill="#fff"/>
<rect x="1351" y="301" width="1" height="6" fill="#fff"/>
<rect x="1360" y="301" width="1" height="9" fill="#fff"/>
<rect x="1368" y="301" width="1" height="6" fill="#fff"/>
<rect x="1377" y="301" width="1" height="6" fill="#fff"/>
<rect x="1385" y="301" width="1" height="6" fill="#fff"/>
<rect x="1394" y="301" width="1" height="6" fill="#fff"/>
<rect x="1402" y="301" width="1" height="9" fill="#fff"/>
<rect x="1411" y="301" width="1" height="6" fill="#fff"/>
<rect x="1420" y="301" width="1" height="6" fill="#fff"/>
<rect x="1428" y="301" width="1" height="6" fill="#fff"/>
<rect x="1437" y="301" width="1" height="6" fill="#fff"/>
<rect x="1445" y="301" width="1" height="9" fill="#fff"/>
<rect x="1454" y="301" width="1" height="6" fill="#fff"/>
<rect x="1462" y="301" width="1" height="6" fill="#fff"/>
<rect x="1471" y="301" width="1" height="6" fill="#fff"/>
<rect x="1479" y="301" width="1" height="6" fill="#fff"/>
<rect x="1488" y="301" width="1" height="9" fill="#fff"/>
<rect x="1497" y="301" width="1" height="6" fill="#fff"/>
<rect x="1505" y="301" width="1" height="6" fill="#fff"/>
<rect x="1514" y="301" width="1" height="6" fill="#fff"/>
<rect x="1522" y="301" width="1" height="6" fill="#fff"/>
<rect x="1531" y="301" width="1" height="9" fill="#fff"/>
<rect x="1539" y="301" width="1" height="6" fill="#fff"/>
<rect x="1548" y="301" width="1" height="6" fill="#fff"/>
<rect x="1556" y="301" width="1" height="6" fill="#fff"/>
<rect x="1565" y="301" width="1" height="6" fill="#fff"/>
<rect x="1574" y="301" width="1" height="9" fill="#fff"/>
<rect x="1582" y="301" width="1" height="6" fill="#fff"/>
<rect x="1591" y="301" width="1" height="6" fill="#fff"/>
<rect x="1599" y="301" width="1" height="6" fill="#fff"/>
<rect x="1608" y="301" width="1" height="6" fill="#fff"/>
<rect x="1616" y="301" width="1" height="9" fill="#fff"/>
<rect x="1625" y="301" width="1" height="6" fill="#fff"/>
<rect x="1633" y="301" width="1" height="6" fill="#fff"/>
<rect x="1642" y="301" width="1" height="6" fill="#fff"/>
<rect x="1650" y="301" width="1" height="6" fill="#fff"/>
<rect x="1659" y="301" width="1" height="9" fill="#fff"/>
<rect x="1668" y="301" width="1" height="6" fill="#fff"/>
<rect x="1676" y="301" width="1" height="6" fill="#fff"/>
<rect x="1677" y="301" width="1" height="6" fill="#fff"/>
<text class="s" transform="scale(0.86,1)" x="1528.80" y="320.00" letter-spacing="0.62" xml:space="preserve">1</text>
<text class="s" transform="scale(0.86,1)" x="1628.22" y="320.00" letter-spacing="0.62" xml:space="preserve">2</text>
<text class="s" transform="scale(0.86,1)" x="1727.63" y="320.00" letter-spacing="0.62" xml:space="preserve">3</text>
<text class="s" transform="scale(0.86,1)" x="1827.05" y="320.00" letter-spacing="0.62" xml:space="preserve">4</text>
<text class="s" transform="scale(0.86,1)" x="1926.47" y="320.00" letter-spacing="0.62" xml:space="preserve">5</text>
<text class="s" transform="scale(0.86,1)" x="1694.19" y="337.00" letter-spacing="1.78" xml:space="preserve">MICRONS</text>
<text class="s" transform="scale(0.86,1)" x="1417.75" y="147.00" letter-spacing="1.78" xml:space="preserve">B</text>
<text class="s" transform="scale(0.86,1)" x="1417.75" y="167.00" letter-spacing="1.78" xml:space="preserve">D</text>
<text class="s" transform="scale(0.86,1)" x="1417.75" y="187.00" letter-spacing="1.78" xml:space="preserve">R</text>
<text class="s" transform="scale(0.86,1)" x="1417.75" y="207.00" letter-spacing="1.78" xml:space="preserve">F</text>
<text class="s" transform="scale(0.86,1)" x="2010.77" y="117.00" letter-spacing="1.78" xml:space="preserve">R</text>
<text class="s" transform="scale(0.86,1)" x="2010.77" y="132.10" letter-spacing="1.78" xml:space="preserve">A</text>
<text class="s" transform="scale(0.86,1)" x="2010.77" y="147.20" letter-spacing="1.78" xml:space="preserve">D</text>
<text class="s" transform="scale(0.86,1)" x="2010.77" y="162.30" letter-spacing="1.78" xml:space="preserve">I</text>
<text class="s" transform="scale(0.86,1)" x="2010.77" y="177.40" letter-spacing="1.78" xml:space="preserve">A</text>
<text class="s" transform="scale(0.86,1)" x="2010.77" y="192.50" letter-spacing="1.78" xml:space="preserve">N</text>
<text class="s" transform="scale(0.86,1)" x="2010.77" y="207.60" letter-spacing="1.78" xml:space="preserve">C</text>
<text class="s" transform="scale(0.86,1)" x="2010.77" y="222.70" letter-spacing="1.78" xml:space="preserve">E</text>
<text class="s" transform="scale(0.86,1)" x="1450.62" y="44.00" letter-spacing="0.62" xml:space="preserve">.1</text>
<text class="s" transform="scale(0.86,1)" x="1436.66" y="107.75" letter-spacing="0.62" xml:space="preserve">.075</text>
<text class="s" transform="scale(0.86,1)" x="1443.64" y="171.50" letter-spacing="0.62" xml:space="preserve">.05</text>
<text class="s" transform="scale(0.86,1)" x="1436.66" y="235.25" letter-spacing="0.62" xml:space="preserve">.025</text>
<text class="s" transform="scale(0.86,1)" x="1457.59" y="299.00" letter-spacing="0.62" xml:space="preserve">0</text>
<text class="s" transform="scale(0.86,1)" x="1960.47" y="44.00" letter-spacing="0.62" xml:space="preserve">4.0</text>
<text class="s" transform="scale(0.86,1)" x="1960.47" y="107.75" letter-spacing="0.62" xml:space="preserve">3.0</text>
<text class="s" transform="scale(0.86,1)" x="1960.47" y="171.50" letter-spacing="0.62" xml:space="preserve">2.0</text>
<text class="s" transform="scale(0.86,1)" x="1960.47" y="235.25" letter-spacing="0.62" xml:space="preserve">1.0</text>
<text class="s" transform="scale(0.86,1)" x="1960.47" y="299.00" letter-spacing="0.62" xml:space="preserve">0</text>
<rect x="1579" y="41" width="1" height="256" fill="#a8a8a8"/>
<text class="b" transform="scale(0.84,1)" x="827.38" y="396.00" letter-spacing="1.88" xml:space="preserve">AREA 2=(22,2,2,2) LAT= -70.3 LON=   8.9 WEST</text>
<rect x="731" y="405" width="423" height="1" fill="#fff"/>
<rect x="738" y="405" width="1" height="257" fill="#fff"/>
<rect x="1147" y="405" width="1" height="257" fill="#fff"/>
<rect x="732" y="405" width="6" height="1" fill="#fff"/>
<rect x="1148" y="405" width="6" height="1" fill="#fff"/>
<rect x="736" y="413" width="2" height="1" fill="#fff"/>
<rect x="1148" y="413" width="2" height="1" fill="#fff"/>
<rect x="734" y="421" width="4" height="1" fill="#fff"/>
<rect x="1148" y="421" width="4" height="1" fill="#fff"/>
<rect x="736" y="429" width="2" height="1" fill="#fff"/>
<rect x="1148" y="429" width="2" height="1" fill="#fff"/>
<rect x="732" y="437" width="6" height="1" fill="#fff"/>
<rect x="1148" y="437" width="6" height="1" fill="#fff"/>
<rect x="736" y="445" width="2" height="1" fill="#fff"/>
<rect x="1148" y="445" width="2" height="1" fill="#fff"/>
<rect x="734" y="453" width="4" height="1" fill="#fff"/>
<rect x="1148" y="453" width="4" height="1" fill="#fff"/>
<rect x="736" y="461" width="2" height="1" fill="#fff"/>
<rect x="1148" y="461" width="2" height="1" fill="#fff"/>
<rect x="732" y="469" width="6" height="1" fill="#fff"/>
<rect x="1148" y="469" width="6" height="1" fill="#fff"/>
<rect x="736" y="477" width="2" height="1" fill="#fff"/>
<rect x="1148" y="477" width="2" height="1" fill="#fff"/>
<rect x="734" y="485" width="4" height="1" fill="#fff"/>
<rect x="1148" y="485" width="4" height="1" fill="#fff"/>
<rect x="736" y="493" width="2" height="1" fill="#fff"/>
<rect x="1148" y="493" width="2" height="1" fill="#fff"/>
<rect x="732" y="501" width="6" height="1" fill="#fff"/>
<rect x="1148" y="501" width="6" height="1" fill="#fff"/>
<rect x="736" y="509" width="2" height="1" fill="#fff"/>
<rect x="1148" y="509" width="2" height="1" fill="#fff"/>
<rect x="734" y="517" width="4" height="1" fill="#fff"/>
<rect x="1148" y="517" width="4" height="1" fill="#fff"/>
<rect x="736" y="525" width="2" height="1" fill="#fff"/>
<rect x="1148" y="525" width="2" height="1" fill="#fff"/>
<rect x="732" y="532" width="6" height="1" fill="#fff"/>
<rect x="1148" y="532" width="6" height="1" fill="#fff"/>
<rect x="736" y="540" width="2" height="1" fill="#fff"/>
<rect x="1148" y="540" width="2" height="1" fill="#fff"/>
<rect x="734" y="548" width="4" height="1" fill="#fff"/>
<rect x="1148" y="548" width="4" height="1" fill="#fff"/>
<rect x="736" y="556" width="2" height="1" fill="#fff"/>
<rect x="1148" y="556" width="2" height="1" fill="#fff"/>
<rect x="732" y="564" width="6" height="1" fill="#fff"/>
<rect x="1148" y="564" width="6" height="1" fill="#fff"/>
<rect x="736" y="572" width="2" height="1" fill="#fff"/>
<rect x="1148" y="572" width="2" height="1" fill="#fff"/>
<rect x="734" y="580" width="4" height="1" fill="#fff"/>
<rect x="1148" y="580" width="4" height="1" fill="#fff"/>
<rect x="736" y="588" width="2" height="1" fill="#fff"/>
<rect x="1148" y="588" width="2" height="1" fill="#fff"/>
<rect x="732" y="596" width="6" height="1" fill="#fff"/>
<rect x="1148" y="596" width="6" height="1" fill="#fff"/>
<rect x="736" y="604" width="2" height="1" fill="#fff"/>
<rect x="1148" y="604" width="2" height="1" fill="#fff"/>
<rect x="734" y="612" width="4" height="1" fill="#fff"/>
<rect x="1148" y="612" width="4" height="1" fill="#fff"/>
<rect x="736" y="620" width="2" height="1" fill="#fff"/>
<rect x="1148" y="620" width="2" height="1" fill="#fff"/>
<rect x="732" y="628" width="6" height="1" fill="#fff"/>
<rect x="1148" y="628" width="6" height="1" fill="#fff"/>
<rect x="736" y="636" width="2" height="1" fill="#fff"/>
<rect x="1148" y="636" width="2" height="1" fill="#fff"/>
<rect x="734" y="644" width="4" height="1" fill="#fff"/>
<rect x="1148" y="644" width="4" height="1" fill="#fff"/>
<rect x="736" y="652" width="2" height="1" fill="#fff"/>
<rect x="1148" y="652" width="2" height="1" fill="#fff"/>
<rect x="732" y="660" width="6" height="1" fill="#fff"/>
<rect x="1148" y="660" width="6" height="1" fill="#fff"/>
<rect x="738" y="665" width="410" height="1" fill="#fff"/>
<rect x="739" y="666" width="1" height="6" fill="#fff"/>
<rect x="755" y="666" width="1" height="6" fill="#fff"/>
<rect x="771" y="666" width="1" height="6" fill="#fff"/>
<rect x="787" y="666" width="1" height="9" fill="#fff"/>
<rect x="796" y="666" width="1" height="6" fill="#fff"/>
<rect x="804" y="666" width="1" height="6" fill="#fff"/>
<rect x="813" y="666" width="1" height="6" fill="#fff"/>
<rect x="821" y="666" width="1" height="6" fill="#fff"/>
<rect x="830" y="666" width="1" height="9" fill="#fff"/>
<rect x="838" y="666" width="1" height="6" fill="#fff"/>
<rect x="847" y="666" width="1" height="6" fill="#fff"/>
<rect x="855" y="666" width="1" height="6" fill="#fff"/>
<rect x="864" y="666" width="1" height="6" fill="#fff"/>
<rect x="872" y="666" width="1" height="9" fill="#fff"/>
<rect x="881" y="666" width="1" height="6" fill="#fff"/>
<rect x="890" y="666" width="1" height="6" fill="#fff"/>
<rect x="898" y="666" width="1" height="6" fill="#fff"/>
<rect x="907" y="666" width="1" height="6" fill="#fff"/>
<rect x="915" y="666" width="1" height="9" fill="#fff"/>
<rect x="924" y="666" width="1" height="6" fill="#fff"/>
<rect x="932" y="666" width="1" height="6" fill="#fff"/>
<rect x="941" y="666" width="1" height="6" fill="#fff"/>
<rect x="949" y="666" width="1" height="6" fill="#fff"/>
<rect x="958" y="666" width="1" height="9" fill="#fff"/>
<rect x="967" y="666" width="1" height="6" fill="#fff"/>
<rect x="975" y="666" width="1" height="6" fill="#fff"/>
<rect x="984" y="666" width="1" height="6" fill="#fff"/>
<rect x="992" y="666" width="1" height="6" fill="#fff"/>
<rect x="1001" y="666" width="1" height="9" fill="#fff"/>
<rect x="1009" y="666" width="1" height="6" fill="#fff"/>
<rect x="1018" y="666" width="1" height="6" fill="#fff"/>
<rect x="1026" y="666" width="1" height="6" fill="#fff"/>
<rect x="1035" y="666" width="1" height="6" fill="#fff"/>
<rect x="1044" y="666" width="1" height="9" fill="#fff"/>
<rect x="1052" y="666" width="1" height="6" fill="#fff"/>
<rect x="1061" y="666" width="1" height="6" fill="#fff"/>
<rect x="1069" y="666" width="1" height="6" fill="#fff"/>
<rect x="1078" y="666" width="1" height="6" fill="#fff"/>
<rect x="1086" y="666" width="1" height="9" fill="#fff"/>
<rect x="1095" y="666" width="1" height="6" fill="#fff"/>
<rect x="1103" y="666" width="1" height="6" fill="#fff"/>
<rect x="1112" y="666" width="1" height="6" fill="#fff"/>
<rect x="1120" y="666" width="1" height="6" fill="#fff"/>
<rect x="1129" y="666" width="1" height="9" fill="#fff"/>
<rect x="1138" y="666" width="1" height="6" fill="#fff"/>
<rect x="1146" y="666" width="1" height="6" fill="#fff"/>
<rect x="1147" y="666" width="1" height="6" fill="#fff"/>
<text class="s" transform="scale(0.86,1)" x="912.52" y="685.00" letter-spacing="0.62" xml:space="preserve">1</text>
<text class="s" transform="scale(0.86,1)" x="1011.94" y="685.00" letter-spacing="0.62" xml:space="preserve">2</text>
<text class="s" transform="scale(0.86,1)" x="1111.35" y="685.00" letter-spacing="0.62" xml:space="preserve">3</text>
<text class="s" transform="scale(0.86,1)" x="1210.77" y="685.00" letter-spacing="0.62" xml:space="preserve">4</text>
<text class="s" transform="scale(0.86,1)" x="1310.19" y="685.00" letter-spacing="0.62" xml:space="preserve">5</text>
<text class="s" transform="scale(0.86,1)" x="1077.91" y="702.00" letter-spacing="1.78" xml:space="preserve">MICRONS</text>
<text class="s" transform="scale(0.86,1)" x="801.47" y="512.00" letter-spacing="1.78" xml:space="preserve">B</text>
<text class="s" transform="scale(0.86,1)" x="801.47" y="532.00" letter-spacing="1.78" xml:space="preserve">D</text>
<text class="s" transform="scale(0.86,1)" x="801.47" y="552.00" letter-spacing="1.78" xml:space="preserve">R</text>
<text class="s" transform="scale(0.86,1)" x="801.47" y="572.00" letter-spacing="1.78" xml:space="preserve">F</text>
<text class="s" transform="scale(0.86,1)" x="1394.49" y="482.00" letter-spacing="1.78" xml:space="preserve">R</text>
<text class="s" transform="scale(0.86,1)" x="1394.49" y="497.10" letter-spacing="1.78" xml:space="preserve">A</text>
<text class="s" transform="scale(0.86,1)" x="1394.49" y="512.20" letter-spacing="1.78" xml:space="preserve">D</text>
<text class="s" transform="scale(0.86,1)" x="1394.49" y="527.30" letter-spacing="1.78" xml:space="preserve">I</text>
<text class="s" transform="scale(0.86,1)" x="1394.49" y="542.40" letter-spacing="1.78" xml:space="preserve">A</text>
<text class="s" transform="scale(0.86,1)" x="1394.49" y="557.50" letter-spacing="1.78" xml:space="preserve">N</text>
<text class="s" transform="scale(0.86,1)" x="1394.49" y="572.60" letter-spacing="1.78" xml:space="preserve">C</text>
<text class="s" transform="scale(0.86,1)" x="1394.49" y="587.70" letter-spacing="1.78" xml:space="preserve">E</text>
<text class="s" transform="scale(0.86,1)" x="827.36" y="409.00" letter-spacing="0.62" xml:space="preserve">.04</text>
<text class="s" transform="scale(0.86,1)" x="827.36" y="472.75" letter-spacing="0.62" xml:space="preserve">.03</text>
<text class="s" transform="scale(0.86,1)" x="827.36" y="536.50" letter-spacing="0.62" xml:space="preserve">.02</text>
<text class="s" transform="scale(0.86,1)" x="827.36" y="600.25" letter-spacing="0.62" xml:space="preserve">.01</text>
<text class="s" transform="scale(0.86,1)" x="841.31" y="664.00" letter-spacing="0.62" xml:space="preserve">0</text>
<text class="s" transform="scale(0.86,1)" x="1344.19" y="409.00" letter-spacing="0.62" xml:space="preserve">5.0</text>
<text class="s" transform="scale(0.86,1)" x="1344.19" y="472.75" letter-spacing="0.62" xml:space="preserve">3.75</text>
<text class="s" transform="scale(0.86,1)" x="1344.19" y="536.50" letter-spacing="0.62" xml:space="preserve">2.5</text>
<text class="s" transform="scale(0.86,1)" x="1344.19" y="600.25" letter-spacing="0.62" xml:space="preserve">1.25</text>
<text class="s" transform="scale(0.86,1)" x="1344.19" y="664.00" letter-spacing="0.62" xml:space="preserve">0</text>
<rect x="1049" y="406" width="1" height="256" fill="#a8a8a8"/>
<text class="b" transform="scale(0.84,1)" x="1458.33" y="396.00" letter-spacing="1.88" xml:space="preserve">AREA 5=(0,0,0,0) LAT=-1000.0 LON=-1000.0 WEST</text>
<rect x="1261" y="405" width="423" height="1" fill="#fff"/>
<rect x="1268" y="405" width="1" height="257" fill="#fff"/>
<rect x="1677" y="405" width="1" height="257" fill="#fff"/>
<rect x="1262" y="405" width="6" height="1" fill="#fff"/>
<rect x="1678" y="405" width="6" height="1" fill="#fff"/>
<rect x="1266" y="413" width="2" height="1" fill="#fff"/>
<rect x="1678" y="413" width="2" height="1" fill="#fff"/>
<rect x="1264" y="421" width="4" height="1" fill="#fff"/>
<rect x="1678" y="421" width="4" height="1" fill="#fff"/>
<rect x="1266" y="429" width="2" height="1" fill="#fff"/>
<rect x="1678" y="429" width="2" height="1" fill="#fff"/>
<rect x="1262" y="437" width="6" height="1" fill="#fff"/>
<rect x="1678" y="437" width="6" height="1" fill="#fff"/>
<rect x="1266" y="445" width="2" height="1" fill="#fff"/>
<rect x="1678" y="445" width="2" height="1" fill="#fff"/>
<rect x="1264" y="453" width="4" height="1" fill="#fff"/>
<rect x="1678" y="453" width="4" height="1" fill="#fff"/>
<rect x="1266" y="461" width="2" height="1" fill="#fff"/>
<rect x="1678" y="461" width="2" height="1" fill="#fff"/>
<rect x="1262" y="469" width="6" height="1" fill="#fff"/>
<rect x="1678" y="469" width="6" height="1" fill="#fff"/>
<rect x="1266" y="477" width="2" height="1" fill="#fff"/>
<rect x="1678" y="477" width="2" height="1" fill="#fff"/>
<rect x="1264" y="485" width="4" height="1" fill="#fff"/>
<rect x="1678" y="485" width="4" height="1" fill="#fff"/>
<rect x="1266" y="493" width="2" height="1" fill="#fff"/>
<rect x="1678" y="493" width="2" height="1" fill="#fff"/>
<rect x="1262" y="501" width="6" height="1" fill="#fff"/>
<rect x="1678" y="501" width="6" height="1" fill="#fff"/>
<rect x="1266" y="509" width="2" height="1" fill="#fff"/>
<rect x="1678" y="509" width="2" height="1" fill="#fff"/>
<rect x="1264" y="517" width="4" height="1" fill="#fff"/>
<rect x="1678" y="517" width="4" height="1" fill="#fff"/>
<rect x="1266" y="525" width="2" height="1" fill="#fff"/>
<rect x="1678" y="525" width="2" height="1" fill="#fff"/>
<rect x="1262" y="532" width="6" height="1" fill="#fff"/>
<rect x="1678" y="532" width="6" height="1" fill="#fff"/>
<rect x="1266" y="540" width="2" height="1" fill="#fff"/>
<rect x="1678" y="540" width="2" height="1" fill="#fff"/>
<rect x="1264" y="548" width="4" height="1" fill="#fff"/>
<rect x="1678" y="548" width="4" height="1" fill="#fff"/>
<rect x="1266" y="556" width="2" height="1" fill="#fff"/>
<rect x="1678" y="556" width="2" height="1" fill="#fff"/>
<rect x="1262" y="564" width="6" height="1" fill="#fff"/>
<rect x="1678" y="564" width="6" height="1" fill="#fff"/>
<rect x="1266" y="572" width="2" height="1" fill="#fff"/>
<rect x="1678" y="572" width="2" height="1" fill="#fff"/>
<rect x="1264" y="580" width="4" height="1" fill="#fff"/>
<rect x="1678" y="580" width="4" height="1" fill="#fff"/>
<rect x="1266" y="588" width="2" height="1" fill="#fff"/>
<rect x="1678" y="588" width="2" height="1" fill="#fff"/>
<rect x="1262" y="596" width="6" height="1" fill="#fff"/>
<rect x="1678" y="596" width="6" height="1" fill="#fff"/>
<rect x="1266" y="604" width="2" height="1" fill="#fff"/>
<rect x="1678" y="604" width="2" height="1" fill="#fff"/>
<rect x="1264" y="612" width="4" height="1" fill="#fff"/>
<rect x="1678" y="612" width="4" height="1" fill="#fff"/>
<rect x="1266" y="620" width="2" height="1" fill="#fff"/>
<rect x="1678" y="620" width="2" height="1" fill="#fff"/>
<rect x="1262" y="628" width="6" height="1" fill="#fff"/>
<rect x="1678" y="628" width="6" height="1" fill="#fff"/>
<rect x="1266" y="636" width="2" height="1" fill="#fff"/>
<rect x="1678" y="636" width="2" height="1" fill="#fff"/>
<rect x="1264" y="644" width="4" height="1" fill="#fff"/>
<rect x="1678" y="644" width="4" height="1" fill="#fff"/>
<rect x="1266" y="652" width="2" height="1" fill="#fff"/>
<rect x="1678" y="652" width="2" height="1" fill="#fff"/>
<rect x="1262" y="660" width="6" height="1" fill="#fff"/>
<rect x="1678" y="660" width="6" height="1" fill="#fff"/>
<rect x="1268" y="665" width="410" height="1" fill="#fff"/>
<rect x="1269" y="666" width="1" height="6" fill="#fff"/>
<rect x="1285" y="666" width="1" height="6" fill="#fff"/>
<rect x="1301" y="666" width="1" height="6" fill="#fff"/>
<rect x="1317" y="666" width="1" height="9" fill="#fff"/>
<rect x="1326" y="666" width="1" height="6" fill="#fff"/>
<rect x="1334" y="666" width="1" height="6" fill="#fff"/>
<rect x="1343" y="666" width="1" height="6" fill="#fff"/>
<rect x="1351" y="666" width="1" height="6" fill="#fff"/>
<rect x="1360" y="666" width="1" height="9" fill="#fff"/>
<rect x="1368" y="666" width="1" height="6" fill="#fff"/>
<rect x="1377" y="666" width="1" height="6" fill="#fff"/>
<rect x="1385" y="666" width="1" height="6" fill="#fff"/>
<rect x="1394" y="666" width="1" height="6" fill="#fff"/>
<rect x="1402" y="666" width="1" height="9" fill="#fff"/>
<rect x="1411" y="666" width="1" height="6" fill="#fff"/>
<rect x="1420" y="666" width="1" height="6" fill="#fff"/>
<rect x="1428" y="666" width="1" height="6" fill="#fff"/>
<rect x="1437" y="666" width="1" height="6" fill="#fff"/>
<rect x="1445" y="666" width="1" height="9" fill="#fff"/>
<rect x="1454" y="666" width="1" height="6" fill="#fff"/>
<rect x="1462" y="666" width="1" height="6" fill="#fff"/>
<rect x="1471" y="666" width="1" height="6" fill="#fff"/>
<rect x="1479" y="666" width="1" height="6" fill="#fff"/>
<rect x="1488" y="666" width="1" height="9" fill="#fff"/>
<rect x="1497" y="666" width="1" height="6" fill="#fff"/>
<rect x="1505" y="666" width="1" height="6" fill="#fff"/>
<rect x="1514" y="666" width="1" height="6" fill="#fff"/>
<rect x="1522" y="666" width="1" height="6" fill="#fff"/>
<rect x="1531" y="666" width="1" height="9" fill="#fff"/>
<rect x="1539" y="666" width="1" height="6" fill="#fff"/>
<rect x="1548" y="666" width="1" height="6" fill="#fff"/>
<rect x="1556" y="666" width="1" height="6" fill="#fff"/>
<rect x="1565" y="666" width="1" height="6" fill="#fff"/>
<rect x="1574" y="666" width="1" height="9" fill="#fff"/>
<rect x="1582" y="666" width="1" height="6" fill="#fff"/>
<rect x="1591" y="666" width="1" height="6" fill="#fff"/>
<rect x="1599" y="666" width="1" height="6" fill="#fff"/>
<rect x="1608" y="666" width="1" height="6" fill="#fff"/>
<rect x="1616" y="666" width="1" height="9" fill="#fff"/>
<rect x="1625" y="666" width="1" height="6" fill="#fff"/>
<rect x="1633" y="666" width="1" height="6" fill="#fff"/>
<rect x="1642" y="666" width="1" height="6" fill="#fff"/>
<rect x="1650" y="666" width="1" height="6" fill="#fff"/>
<rect x="1659" y="666" width="1" height="9" fill="#fff"/>
<rect x="1668" y="666" width="1" height="6" fill="#fff"/>
<rect x="1676" y="666" width="1" height="6" fill="#fff"/>
<rect x="1677" y="666" width="1" height="6" fill="#fff"/>
<text class="s" transform="scale(0.86,1)" x="1528.80" y="685.00" letter-spacing="0.62" xml:space="preserve">1</text>
<text class="s" transform="scale(0.86,1)" x="1628.22" y="685.00" letter-spacing="0.62" xml:space="preserve">2</text>
<text class="s" transform="scale(0.86,1)" x="1727.63" y="685.00" letter-spacing="0.62" xml:space="preserve">3</text>
<text class="s" transform="scale(0.86,1)" x="1827.05" y="685.00" letter-spacing="0.62" xml:space="preserve">4</text>
<text class="s" transform="scale(0.86,1)" x="1926.47" y="685.00" letter-spacing="0.62" xml:space="preserve">5</text>
<text class="s" transform="scale(0.86,1)" x="1694.19" y="702.00" letter-spacing="1.78" xml:space="preserve">MICRONS</text>
<text class="s" transform="scale(0.86,1)" x="1417.75" y="512.00" letter-spacing="1.78" xml:space="preserve">B</text>
<text class="s" transform="scale(0.86,1)" x="1417.75" y="532.00" letter-spacing="1.78" xml:space="preserve">D</text>
<text class="s" transform="scale(0.86,1)" x="1417.75" y="552.00" letter-spacing="1.78" xml:space="preserve">R</text>
<text class="s" transform="scale(0.86,1)" x="1417.75" y="572.00" letter-spacing="1.78" xml:space="preserve">F</text>
<text class="s" transform="scale(0.86,1)" x="2010.77" y="482.00" letter-spacing="1.78" xml:space="preserve">R</text>
<text class="s" transform="scale(0.86,1)" x="2010.77" y="497.10" letter-spacing="1.78" xml:space="preserve">A</text>
<text class="s" transform="scale(0.86,1)" x="2010.77" y="512.20" letter-spacing="1.78" xml:space="preserve">D</text>
<text class="s" transform="scale(0.86,1)" x="2010.77" y="527.30" letter-spacing="1.78" xml:space="preserve">I</text>
<text class="s" transform="scale(0.86,1)" x="2010.77" y="542.40" letter-spacing="1.78" xml:space="preserve">A</text>
<text class="s" transform="scale(0.86,1)" x="2010.77" y="557.50" letter-spacing="1.78" xml:space="preserve">N</text>
<text class="s" transform="scale(0.86,1)" x="2010.77" y="572.60" letter-spacing="1.78" xml:space="preserve">C</text>
<text class="s" transform="scale(0.86,1)" x="2010.77" y="587.70" letter-spacing="1.78" xml:space="preserve">E</text>
<text class="s" transform="scale(0.86,1)" x="1450.62" y="409.00" letter-spacing="0.62" xml:space="preserve">.1</text>
<text class="s" transform="scale(0.86,1)" x="1436.66" y="472.75" letter-spacing="0.62" xml:space="preserve">.075</text>
<text class="s" transform="scale(0.86,1)" x="1443.64" y="536.50" letter-spacing="0.62" xml:space="preserve">.05</text>
<text class="s" transform="scale(0.86,1)" x="1436.66" y="600.25" letter-spacing="0.62" xml:space="preserve">.025</text>
<text class="s" transform="scale(0.86,1)" x="1457.59" y="664.00" letter-spacing="0.62" xml:space="preserve">0</text>
<text class="s" transform="scale(0.86,1)" x="1960.47" y="409.00" letter-spacing="0.62" xml:space="preserve">4.0</text>
<text class="s" transform="scale(0.86,1)" x="1960.47" y="472.75" letter-spacing="0.62" xml:space="preserve">3.0</text>
<text class="s" transform="scale(0.86,1)" x="1960.47" y="536.50" letter-spacing="0.62" xml:space="preserve">2.0</text>
<text class="s" transform="scale(0.86,1)" x="1960.47" y="600.25" letter-spacing="0.62" xml:space="preserve">1.0</text>
<text class="s" transform="scale(0.86,1)" x="1960.47" y="664.00" letter-spacing="0.62" xml:space="preserve">0</text>
<text class="b" transform="scale(0.84,1)" x="827.38" y="761.00" letter-spacing="1.88" xml:space="preserve">AREA 3=(20,2,2,2) LAT= -73.1 LON=  18.4 WEST</text>
<rect x="731" y="770" width="423" height="1" fill="#fff"/>
<rect x="738" y="770" width="1" height="257" fill="#fff"/>
<rect x="1147" y="770" width="1" height="257" fill="#fff"/>
<rect x="732" y="770" width="6" height="1" fill="#fff"/>
<rect x="1148" y="770" width="6" height="1" fill="#fff"/>
<rect x="736" y="778" width="2" height="1" fill="#fff"/>
<rect x="1148" y="778" width="2" height="1" fill="#fff"/>
<rect x="734" y="786" width="4" height="1" fill="#fff"/>
<rect x="1148" y="786" width="4" height="1" fill="#fff"/>
<rect x="736" y="794" width="2" height="1" fill="#fff"/>
<rect x="1148" y="794" width="2" height="1" fill="#fff"/>
<rect x="732" y="802" width="6" height="1" fill="#fff"/>
<rect x="1148" y="802" width="6" height="1" fill="#fff"/>
<rect x="736" y="810" width="2" height="1" fill="#fff"/>
<rect x="1148" y="810" width="2" height="1" fill="#fff"/>
<rect x="734" y="818" width="4" height="1" fill="#fff"/>
<rect x="1148" y="818" width="4" height="1" fill="#fff"/>
<rect x="736" y="826" width="2" height="1" fill="#fff"/>
<rect x="1148" y="826" width="2" height="1" fill="#fff"/>
<rect x="732" y="834" width="6" height="1" fill="#fff"/>
<rect x="1148" y="834" width="6" height="1" fill="#fff"/>
<rect x="736" y="842" width="2" height="1" fill="#fff"/>
<rect x="1148" y="842" width="2" height="1" fill="#fff"/>
<rect x="734" y="850" width="4" height="1" fill="#fff"/>
<rect x="1148" y="850" width="4" height="1" fill="#fff"/>
<rect x="736" y="858" width="2" height="1" fill="#fff"/>
<rect x="1148" y="858" width="2" height="1" fill="#fff"/>
<rect x="732" y="866" width="6" height="1" fill="#fff"/>
<rect x="1148" y="866" width="6" height="1" fill="#fff"/>
<rect x="736" y="874" width="2" height="1" fill="#fff"/>
<rect x="1148" y="874" width="2" height="1" fill="#fff"/>
<rect x="734" y="882" width="4" height="1" fill="#fff"/>
<rect x="1148" y="882" width="4" height="1" fill="#fff"/>
<rect x="736" y="890" width="2" height="1" fill="#fff"/>
<rect x="1148" y="890" width="2" height="1" fill="#fff"/>
<rect x="732" y="898" width="6" height="1" fill="#fff"/>
<rect x="1148" y="898" width="6" height="1" fill="#fff"/>
<rect x="736" y="905" width="2" height="1" fill="#fff"/>
<rect x="1148" y="905" width="2" height="1" fill="#fff"/>
<rect x="734" y="913" width="4" height="1" fill="#fff"/>
<rect x="1148" y="913" width="4" height="1" fill="#fff"/>
<rect x="736" y="921" width="2" height="1" fill="#fff"/>
<rect x="1148" y="921" width="2" height="1" fill="#fff"/>
<rect x="732" y="929" width="6" height="1" fill="#fff"/>
<rect x="1148" y="929" width="6" height="1" fill="#fff"/>
<rect x="736" y="937" width="2" height="1" fill="#fff"/>
<rect x="1148" y="937" width="2" height="1" fill="#fff"/>
<rect x="734" y="945" width="4" height="1" fill="#fff"/>
<rect x="1148" y="945" width="4" height="1" fill="#fff"/>
<rect x="736" y="953" width="2" height="1" fill="#fff"/>
<rect x="1148" y="953" width="2" height="1" fill="#fff"/>
<rect x="732" y="961" width="6" height="1" fill="#fff"/>
<rect x="1148" y="961" width="6" height="1" fill="#fff"/>
<rect x="736" y="969" width="2" height="1" fill="#fff"/>
<rect x="1148" y="969" width="2" height="1" fill="#fff"/>
<rect x="734" y="977" width="4" height="1" fill="#fff"/>
<rect x="1148" y="977" width="4" height="1" fill="#fff"/>
<rect x="736" y="985" width="2" height="1" fill="#fff"/>
<rect x="1148" y="985" width="2" height="1" fill="#fff"/>
<rect x="732" y="993" width="6" height="1" fill="#fff"/>
<rect x="1148" y="993" width="6" height="1" fill="#fff"/>
<rect x="736" y="1001" width="2" height="1" fill="#fff"/>
<rect x="1148" y="1001" width="2" height="1" fill="#fff"/>
<rect x="734" y="1009" width="4" height="1" fill="#fff"/>
<rect x="1148" y="1009" width="4" height="1" fill="#fff"/>
<rect x="736" y="1017" width="2" height="1" fill="#fff"/>
<rect x="1148" y="1017" width="2" height="1" fill="#fff"/>
<rect x="732" y="1025" width="6" height="1" fill="#fff"/>
<rect x="1148" y="1025" width="6" height="1" fill="#fff"/>
<rect x="738" y="1030" width="410" height="1" fill="#fff"/>
<rect x="739" y="1031" width="1" height="6" fill="#fff"/>
<rect x="755" y="1031" width="1" height="6" fill="#fff"/>
<rect x="771" y="1031" width="1" height="6" fill="#fff"/>
<rect x="787" y="1031" width="1" height="9" fill="#fff"/>
<rect x="796" y="1031" width="1" height="6" fill="#fff"/>
<rect x="804" y="1031" width="1" height="6" fill="#fff"/>
<rect x="813" y="1031" width="1" height="6" fill="#fff"/>
<rect x="821" y="1031" width="1" height="6" fill="#fff"/>
<rect x="830" y="1031" width="1" height="9" fill="#fff"/>
<rect x="838" y="1031" width="1" height="6" fill="#fff"/>
<rect x="847" y="1031" width="1" height="6" fill="#fff"/>
<rect x="855" y="1031" width="1" height="6" fill="#fff"/>
<rect x="864" y="1031" width="1" height="6" fill="#fff"/>
<rect x="872" y="1031" width="1" height="9" fill="#fff"/>
<rect x="881" y="1031" width="1" height="6" fill="#fff"/>
<rect x="890" y="1031" width="1" height="6" fill="#fff"/>
<rect x="898" y="1031" width="1" height="6" fill="#fff"/>
<rect x="907" y="1031" width="1" height="6" fill="#fff"/>
<rect x="915" y="1031" width="1" height="9" fill="#fff"/>
<rect x="924" y="1031" width="1" height="6" fill="#fff"/>
<rect x="932" y="1031" width="1" height="6" fill="#fff"/>
<rect x="941" y="1031" width="1" height="6" fill="#fff"/>
<rect x="949" y="1031" width="1" height="6" fill="#fff"/>
<rect x="958" y="1031" width="1" height="9" fill="#fff"/>
<rect x="967" y="1031" width="1" height="6" fill="#fff"/>
<rect x="975" y="1031" width="1" height="6" fill="#fff"/>
<rect x="984" y="1031" width="1" height="6" fill="#fff"/>
<rect x="992" y="1031" width="1" height="6" fill="#fff"/>
<rect x="1001" y="1031" width="1" height="9" fill="#fff"/>
<rect x="1009" y="1031" width="1" height="6" fill="#fff"/>
<rect x="1018" y="1031" width="1" height="6" fill="#fff"/>
<rect x="1026" y="1031" width="1" height="6" fill="#fff"/>
<rect x="1035" y="1031" width="1" height="6" fill="#fff"/>
<rect x="1044" y="1031" width="1" height="9" fill="#fff"/>
<rect x="1052" y="1031" width="1" height="6" fill="#fff"/>
<rect x="1061" y="1031" width="1" height="6" fill="#fff"/>
<rect x="1069" y="1031" width="1" height="6" fill="#fff"/>
<rect x="1078" y="1031" width="1" height="6" fill="#fff"/>
<rect x="1086" y="1031" width="1" height="9" fill="#fff"/>
<rect x="1095" y="1031" width="1" height="6" fill="#fff"/>
<rect x="1103" y="1031" width="1" height="6" fill="#fff"/>
<rect x="1112" y="1031" width="1" height="6" fill="#fff"/>
<rect x="1120" y="1031" width="1" height="6" fill="#fff"/>
<rect x="1129" y="1031" width="1" height="9" fill="#fff"/>
<rect x="1138" y="1031" width="1" height="6" fill="#fff"/>
<rect x="1146" y="1031" width="1" height="6" fill="#fff"/>
<rect x="1147" y="1031" width="1" height="6" fill="#fff"/>
<text class="s" transform="scale(0.86,1)" x="912.52" y="1050.00" letter-spacing="0.62" xml:space="preserve">1</text>
<text class="s" transform="scale(0.86,1)" x="1011.94" y="1050.00" letter-spacing="0.62" xml:space="preserve">2</text>
<text class="s" transform="scale(0.86,1)" x="1111.35" y="1050.00" letter-spacing="0.62" xml:space="preserve">3</text>
<text class="s" transform="scale(0.86,1)" x="1210.77" y="1050.00" letter-spacing="0.62" xml:space="preserve">4</text>
<text class="s" transform="scale(0.86,1)" x="1310.19" y="1050.00" letter-spacing="0.62" xml:space="preserve">5</text>
<text class="s" transform="scale(0.86,1)" x="1077.91" y="1067.00" letter-spacing="1.78" xml:space="preserve">MICRONS</text>
<text class="s" transform="scale(0.86,1)" x="801.47" y="877.00" letter-spacing="1.78" xml:space="preserve">B</text>
<text class="s" transform="scale(0.86,1)" x="801.47" y="897.00" letter-spacing="1.78" xml:space="preserve">D</text>
<text class="s" transform="scale(0.86,1)" x="801.47" y="917.00" letter-spacing="1.78" xml:space="preserve">R</text>
<text class="s" transform="scale(0.86,1)" x="801.47" y="937.00" letter-spacing="1.78" xml:space="preserve">F</text>
<text class="s" transform="scale(0.86,1)" x="1394.49" y="847.00" letter-spacing="1.78" xml:space="preserve">R</text>
<text class="s" transform="scale(0.86,1)" x="1394.49" y="862.10" letter-spacing="1.78" xml:space="preserve">A</text>
<text class="s" transform="scale(0.86,1)" x="1394.49" y="877.20" letter-spacing="1.78" xml:space="preserve">D</text>
<text class="s" transform="scale(0.86,1)" x="1394.49" y="892.30" letter-spacing="1.78" xml:space="preserve">I</text>
<text class="s" transform="scale(0.86,1)" x="1394.49" y="907.40" letter-spacing="1.78" xml:space="preserve">A</text>
<text class="s" transform="scale(0.86,1)" x="1394.49" y="922.50" letter-spacing="1.78" xml:space="preserve">N</text>
<text class="s" transform="scale(0.86,1)" x="1394.49" y="937.60" letter-spacing="1.78" xml:space="preserve">C</text>
<text class="s" transform="scale(0.86,1)" x="1394.49" y="952.70" letter-spacing="1.78" xml:space="preserve">E</text>
<text class="s" transform="scale(0.86,1)" x="820.38" y="774.00" letter-spacing="0.62" xml:space="preserve">.004</text>
<text class="s" transform="scale(0.86,1)" x="820.38" y="837.75" letter-spacing="0.62" xml:space="preserve">.003</text>
<text class="s" transform="scale(0.86,1)" x="820.38" y="901.50" letter-spacing="0.62" xml:space="preserve">.002</text>
<text class="s" transform="scale(0.86,1)" x="820.38" y="965.25" letter-spacing="0.62" xml:space="preserve">.001</text>
<text class="s" transform="scale(0.86,1)" x="841.31" y="1029.00" letter-spacing="0.62" xml:space="preserve">0</text>
<text class="s" transform="scale(0.86,1)" x="1344.19" y="774.00" letter-spacing="0.62" xml:space="preserve">4.0</text>
<text class="s" transform="scale(0.86,1)" x="1344.19" y="837.75" letter-spacing="0.62" xml:space="preserve">3.0</text>
<text class="s" transform="scale(0.86,1)" x="1344.19" y="901.50" letter-spacing="0.62" xml:space="preserve">2.0</text>
<text class="s" transform="scale(0.86,1)" x="1344.19" y="965.25" letter-spacing="0.62" xml:space="preserve">1.0</text>
<text class="s" transform="scale(0.86,1)" x="1344.19" y="1029.00" letter-spacing="0.62" xml:space="preserve">0</text>
<rect x="1049" y="771" width="1" height="256" fill="#a8a8a8"/>
<text class="b" transform="scale(0.84,1)" x="1458.33" y="761.00" letter-spacing="1.88" xml:space="preserve">AREA 6=(0,0,0,0) LAT=-1000.0 LON=-1000.0 WEST</text>
<rect x="1261" y="770" width="423" height="1" fill="#fff"/>
<rect x="1268" y="770" width="1" height="257" fill="#fff"/>
<rect x="1677" y="770" width="1" height="257" fill="#fff"/>
<rect x="1262" y="770" width="6" height="1" fill="#fff"/>
<rect x="1678" y="770" width="6" height="1" fill="#fff"/>
<rect x="1266" y="778" width="2" height="1" fill="#fff"/>
<rect x="1678" y="778" width="2" height="1" fill="#fff"/>
<rect x="1264" y="786" width="4" height="1" fill="#fff"/>
<rect x="1678" y="786" width="4" height="1" fill="#fff"/>
<rect x="1266" y="794" width="2" height="1" fill="#fff"/>
<rect x="1678" y="794" width="2" height="1" fill="#fff"/>
<rect x="1262" y="802" width="6" height="1" fill="#fff"/>
<rect x="1678" y="802" width="6" height="1" fill="#fff"/>
<rect x="1266" y="810" width="2" height="1" fill="#fff"/>
<rect x="1678" y="810" width="2" height="1" fill="#fff"/>
<rect x="1264" y="818" width="4" height="1" fill="#fff"/>
<rect x="1678" y="818" width="4" height="1" fill="#fff"/>
<rect x="1266" y="826" width="2" height="1" fill="#fff"/>
<rect x="1678" y="826" width="2" height="1" fill="#fff"/>
<rect x="1262" y="834" width="6" height="1" fill="#fff"/>
<rect x="1678" y="834" width="6" height="1" fill="#fff"/>
<rect x="1266" y="842" width="2" height="1" fill="#fff"/>
<rect x="1678" y="842" width="2" height="1" fill="#fff"/>
<rect x="1264" y="850" width="4" height="1" fill="#fff"/>
<rect x="1678" y="850" width="4" height="1" fill="#fff"/>
<rect x="1266" y="858" width="2" height="1" fill="#fff"/>
<rect x="1678" y="858" width="2" height="1" fill="#fff"/>
<rect x="1262" y="866" width="6" height="1" fill="#fff"/>
<rect x="1678" y="866" width="6" height="1" fill="#fff"/>
<rect x="1266" y="874" width="2" height="1" fill="#fff"/>
<rect x="1678" y="874" width="2" height="1" fill="#fff"/>
<rect x="1264" y="882" width="4" height="1" fill="#fff"/>
<rect x="1678" y="882" width="4" height="1" fill="#fff"/>
<rect x="1266" y="890" width="2" height="1" fill="#fff"/>
<rect x="1678" y="890" width="2" height="1" fill="#fff"/>
<rect x="1262" y="898" width="6" height="1" fill="#fff"/>
<rect x="1678" y="898" width="6" height="1" fill="#fff"/>
<rect x="1266" y="905" width="2" height="1" fill="#fff"/>
<rect x="1678" y="905" width="2" height="1" fill="#fff"/>
<rect x="1264" y="913" width="4" height="1" fill="#fff"/>
<rect x="1678" y="913" width="4" height="1" fill="#fff"/>
<rect x="1266" y="921" width="2" height="1" fill="#fff"/>
<rect x="1678" y="921" width="2" height="1" fill="#fff"/>
<rect x="1262" y="929" width="6" height="1" fill="#fff"/>
<rect x="1678" y="929" width="6" height="1" fill="#fff"/>
<rect x="1266" y="937" width="2" height="1" fill="#fff"/>
<rect x="1678" y="937" width="2" height="1" fill="#fff"/>
<rect x="1264" y="945" width="4" height="1" fill="#fff"/>
<rect x="1678" y="945" width="4" height="1" fill="#fff"/>
<rect x="1266" y="953" width="2" height="1" fill="#fff"/>
<rect x="1678" y="953" width="2" height="1" fill="#fff"/>
<rect x="1262" y="961" width="6" height="1" fill="#fff"/>
<rect x="1678" y="961" width="6" height="1" fill="#fff"/>
<rect x="1266" y="969" width="2" height="1" fill="#fff"/>
<rect x="1678" y="969" width="2" height="1" fill="#fff"/>
<rect x="1264" y="977" width="4" height="1" fill="#fff"/>
<rect x="1678" y="977" width="4" height="1" fill="#fff"/>
<rect x="1266" y="985" width="2" height="1" fill="#fff"/>
<rect x="1678" y="985" width="2" height="1" fill="#fff"/>
<rect x="1262" y="993" width="6" height="1" fill="#fff"/>
<rect x="1678" y="993" width="6" height="1" fill="#fff"/>
<rect x="1266" y="1001" width="2" height="1" fill="#fff"/>
<rect x="1678" y="1001" width="2" height="1" fill="#fff"/>
<rect x="1264" y="1009" width="4" height="1" fill="#fff"/>
<rect x="1678" y="1009" width="4" height="1" fill="#fff"/>
<rect x="1266" y="1017" width="2" height="1" fill="#fff"/>
<rect x="1678" y="1017" width="2" height="1" fill="#fff"/>
<rect x="1262" y="1025" width="6" height="1" fill="#fff"/>
<rect x="1678" y="1025" width="6" height="1" fill="#fff"/>
<rect x="1268" y="1030" width="410" height="1" fill="#fff"/>
<rect x="1269" y="1031" width="1" height="6" fill="#fff"/>
<rect x="1285" y="1031" width="1" height="6" fill="#fff"/>
<rect x="1301" y="1031" width="1" height="6" fill="#fff"/>
<rect x="1317" y="1031" width="1" height="9" fill="#fff"/>
<rect x="1326" y="1031" width="1" height="6" fill="#fff"/>
<rect x="1334" y="1031" width="1" height="6" fill="#fff"/>
<rect x="1343" y="1031" width="1" height="6" fill="#fff"/>
<rect x="1351" y="1031" width="1" height="6" fill="#fff"/>
<rect x="1360" y="1031" width="1" height="9" fill="#fff"/>
<rect x="1368" y="1031" width="1" height="6" fill="#fff"/>
<rect x="1377" y="1031" width="1" height="6" fill="#fff"/>
<rect x="1385" y="1031" width="1" height="6" fill="#fff"/>
<rect x="1394" y="1031" width="1" height="6" fill="#fff"/>
<rect x="1402" y="1031" width="1" height="9" fill="#fff"/>
<rect x="1411" y="1031" width="1" height="6" fill="#fff"/>
<rect x="1420" y="1031" width="1" height="6" fill="#fff"/>
<rect x="1428" y="1031" width="1" height="6" fill="#fff"/>
<rect x="1437" y="1031" width="1" height="6" fill="#fff"/>
<rect x="1445" y="1031" width="1" height="9" fill="#fff"/>
<rect x="1454" y="1031" width="1" height="6" fill="#fff"/>
<rect x="1462" y="1031" width="1" height="6" fill="#fff"/>
<rect x="1471" y="1031" width="1" height="6" fill="#fff"/>
<rect x="1479" y="1031" width="1" height="6" fill="#fff"/>
<rect x="1488" y="1031" width="1" height="9" fill="#fff"/>
<rect x="1497" y="1031" width="1" height="6" fill="#fff"/>
<rect x="1505" y="1031" width="1" height="6" fill="#fff"/>
<rect x="1514" y="1031" width="1" height="6" fill="#fff"/>
<rect x="1522" y="1031" width="1" height="6" fill="#fff"/>
<rect x="1531" y="1031" width="1" height="9" fill="#fff"/>
<rect x="1539" y="1031" width="1" height="6" fill="#fff"/>
<rect x="1548" y="1031" width="1" height="6" fill="#fff"/>
<rect x="1556" y="1031" width="1" height="6" fill="#fff"/>
<rect x="1565" y="1031" width="1" height="6" fill="#fff"/>
<rect x="1574" y="1031" width="1" height="9" fill="#fff"/>
<rect x="1582" y="1031" width="1" height="6" fill="#fff"/>
<rect x="1591" y="1031" width="1" height="6" fill="#fff"/>
<rect x="1599" y="1031" width="1" height="6" fill="#fff"/>
<rect x="1608" y="1031" width="1" height="6" fill="#fff"/>
<rect x="1616" y="1031" width="1" height="9" fill="#fff"/>
<rect x="1625" y="1031" width="1" height="6" fill="#fff"/>
<rect x="1633" y="1031" width="1" height="6" fill="#fff"/>
<rect x="1642" y="1031" width="1" height="6" fill="#fff"/>
<rect x="1650" y="1031" width="1" height="6" fill="#fff"/>
<rect x="1659" y="1031" width="1" height="9" fill="#fff"/>
<rect x="1668" y="1031" width="1" height="6" fill="#fff"/>
<rect x="1676" y="1031" width="1" height="6" fill="#fff"/>
<rect x="1677" y="1031" width="1" height="6" fill="#fff"/>
<text class="s" transform="scale(0.86,1)" x="1528.80" y="1050.00" letter-spacing="0.62" xml:space="preserve">1</text>
<text class="s" transform="scale(0.86,1)" x="1628.22" y="1050.00" letter-spacing="0.62" xml:space="preserve">2</text>
<text class="s" transform="scale(0.86,1)" x="1727.63" y="1050.00" letter-spacing="0.62" xml:space="preserve">3</text>
<text class="s" transform="scale(0.86,1)" x="1827.05" y="1050.00" letter-spacing="0.62" xml:space="preserve">4</text>
<text class="s" transform="scale(0.86,1)" x="1926.47" y="1050.00" letter-spacing="0.62" xml:space="preserve">5</text>
<text class="s" transform="scale(0.86,1)" x="1694.19" y="1067.00" letter-spacing="1.78" xml:space="preserve">MICRONS</text>
<text class="s" transform="scale(0.86,1)" x="1417.75" y="877.00" letter-spacing="1.78" xml:space="preserve">B</text>
<text class="s" transform="scale(0.86,1)" x="1417.75" y="897.00" letter-spacing="1.78" xml:space="preserve">D</text>
<text class="s" transform="scale(0.86,1)" x="1417.75" y="917.00" letter-spacing="1.78" xml:space="preserve">R</text>
<text class="s" transform="scale(0.86,1)" x="1417.75" y="937.00" letter-spacing="1.78" xml:space="preserve">F</text>
<text class="s" transform="scale(0.86,1)" x="2010.77" y="847.00" letter-spacing="1.78" xml:space="preserve">R</text>
<text class="s" transform="scale(0.86,1)" x="2010.77" y="862.10" letter-spacing="1.78" xml:space="preserve">A</text>
<text class="s" transform="scale(0.86,1)" x="2010.77" y="877.20" letter-spacing="1.78" xml:space="preserve">D</text>
<text class="s" transform="scale(0.86,1)" x="2010.77" y="892.30" letter-spacing="1.78" xml:space="preserve">I</text>
<text class="s" transform="scale(0.86,1)" x="2010.77" y="907.40" letter-spacing="1.78" xml:space="preserve">A</text>
<text class="s" transform="scale(0.86,1)" x="2010.77" y="922.50" letter-spacing="1.78" xml:space="preserve">N</text>
<text class="s" transform="scale(0.86,1)" x="2010.77" y="937.60" letter-spacing="1.78" xml:space="preserve">C</text>
<text class="s" transform="scale(0.86,1)" x="2010.77" y="952.70" letter-spacing="1.78" xml:space="preserve">E</text>
<text class="s" transform="scale(0.86,1)" x="1450.62" y="774.00" letter-spacing="0.62" xml:space="preserve">.1</text>
<text class="s" transform="scale(0.86,1)" x="1436.66" y="837.75" letter-spacing="0.62" xml:space="preserve">.075</text>
<text class="s" transform="scale(0.86,1)" x="1443.64" y="901.50" letter-spacing="0.62" xml:space="preserve">.05</text>
<text class="s" transform="scale(0.86,1)" x="1436.66" y="965.25" letter-spacing="0.62" xml:space="preserve">.025</text>
<text class="s" transform="scale(0.86,1)" x="1457.59" y="1029.00" letter-spacing="0.62" xml:space="preserve">0</text>
<text class="s" transform="scale(0.86,1)" x="1960.47" y="774.00" letter-spacing="0.62" xml:space="preserve">4.0</text>
<text class="s" transform="scale(0.86,1)" x="1960.47" y="837.75" letter-spacing="0.62" xml:space="preserve">3.0</text>
<text class="s" transform="scale(0.86,1)" x="1960.47" y="901.50" letter-spacing="0.62" xml:space="preserve">2.0</text>
<text class="s" transform="scale(0.86,1)" x="1960.47" y="965.25" letter-spacing="0.62" xml:space="preserve">1.0</text>
<text class="s" transform="scale(0.86,1)" x="1960.47" y="1029.00" letter-spacing="0.62" xml:space="preserve">0</text>
<rect x="739" y="276" width="1" height="3" fill="#fff"/>
<rect x="742" y="287" width="1" height="3" fill="#fff"/>
<rect x="745" y="280" width="1" height="3" fill="#fff"/>
<rect x="748" y="288" width="1" height="3" fill="#fff"/>
<rect x="757" y="287" width="1" height="3" fill="#fff"/>
<rect x="763" y="293" width="1" height="3" fill="#fff"/>
<rect x="766" y="293" width="1" height="3" fill="#fff"/>
<rect x="769" y="292" width="1" height="3" fill="#fff"/>
<rect x="773" y="292" width="1" height="3" fill="#fff"/>
<rect x="776" y="291" width="1" height="3" fill="#fff"/>
<rect x="779" y="288" width="1" height="3" fill="#fff"/>
<rect x="782" y="277" width="1" height="3" fill="#fff"/>
<rect x="785" y="284" width="1" height="3" fill="#fff"/>
<rect x="814" y="284" width="1" height="3" fill="#fff"/>
<rect x="816" y="293" width="1" height="3" fill="#fff"/>
<rect x="820" y="290" width="1" height="3" fill="#fff"/>
<rect x="823" y="291" width="1" height="3" fill="#fff"/>
<rect x="828" y="293" width="1" height="3" fill="#fff"/>
<rect x="833" y="291" width="1" height="3" fill="#fff"/>
<rect x="842" y="287" width="1" height="3" fill="#fff"/>
<rect x="844" y="289" width="1" height="3" fill="#fff"/>
<rect x="859" y="290" width="1" height="3" fill="#fff"/>
<rect x="864" y="293" width="1" height="3" fill="#fff"/>
<rect x="867" y="291" width="1" height="3" fill="#fff"/>
<rect x="873" y="291" width="1" height="3" fill="#fff"/>
<rect x="879" y="293" width="1" height="3" fill="#fff"/>
<rect x="884" y="293" width="1" height="3" fill="#fff"/>
<rect x="887" y="293" width="1" height="3" fill="#fff"/>
<rect x="905" y="293" width="1" height="3" fill="#fff"/>
<rect x="933" y="290" width="1" height="3" fill="#fff"/>
<rect x="939" y="291" width="1" height="3" fill="#fff"/>
<rect x="942" y="269" width="1" height="3" fill="#fff"/>
<rect x="947" y="293" width="1" height="3" fill="#fff"/>
<rect x="948" y="287" width="1" height="3" fill="#fff"/>
<rect x="952" y="283" width="1" height="3" fill="#fff"/>
<rect x="945" y="266" width="1" height="30" fill="#a8a8a8"/>
<rect x="952" y="77" width="1" height="3" fill="#fff"/>
<rect x="949" y="177" width="1" height="3" fill="#fff"/>
<rect x="934" y="289" width="1" height="3" fill="#fff"/>
<rect x="940" y="291" width="1" height="3" fill="#fff"/>
<rect x="941" y="269" width="1" height="3" fill="#fff"/>
<rect x="946" y="293" width="1" height="3" fill="#fff"/>
<rect x="948" y="287" width="1" height="3" fill="#fff"/>
<rect x="951" y="283" width="1" height="3" fill="#fff"/>
<rect x="954" y="276" width="1" height="3" fill="#fff"/>
<rect x="960" y="274" width="1" height="3" fill="#fff"/>
<rect x="970" y="272" width="1" height="3" fill="#fff"/>
<rect x="976" y="273" width="1" height="3" fill="#fff"/>
<rect x="982" y="252" width="1" height="3" fill="#fff"/>
<rect x="983" y="262" width="1" height="3" fill="#fff"/>
<rect x="985" y="259" width="1" height="3" fill="#fff"/>
<rect x="986" y="214" width="1" height="3" fill="#fff"/>
<rect x="988" y="240" width="1" height="3" fill="#fff"/>
<rect x="991" y="273" width="1" height="3" fill="#fff"/>
<rect x="993" y="197" width="1" height="3" fill="#fff"/>
<rect x="994" y="254" width="1" height="3" fill="#fff"/>
<rect x="996" y="250" width="1" height="3" fill="#fff"/>
<rect x="999" y="266" width="1" height="3" fill="#fff"/>
<rect x="1001" y="205" width="1" height="3" fill="#fff"/>
<rect x="1003" y="213" width="1" height="3" fill="#fff"/>
<rect x="1005" y="200" width="1" height="3" fill="#fff"/>
<rect x="1006" y="248" width="1" height="3" fill="#fff"/>
<rect x="1009" y="269" width="1" height="3" fill="#fff"/>
<rect x="1010" y="293" width="1" height="3" fill="#fff"/>
<rect x="1012" y="279" width="1" height="3" fill="#fff"/>
<rect x="1013" y="268" width="1" height="3" fill="#fff"/>
<rect x="1015" y="222" width="1" height="3" fill="#fff"/>
<rect x="1018" y="291" width="1" height="3" fill="#fff"/>
<rect x="1021" y="293" width="1" height="3" fill="#fff"/>
<rect x="1024" y="272" width="1" height="3" fill="#fff"/>
<rect x="1027" y="271" width="1" height="3" fill="#fff"/>
<rect x="1028" y="288" width="1" height="3" fill="#fff"/>
<rect x="1029" y="277" width="1" height="3" fill="#fff"/>
<rect x="1030" y="215" width="1" height="3" fill="#fff"/>
<rect x="1033" y="246" width="1" height="3" fill="#fff"/>
<rect x="1035" y="187" width="1" height="3" fill="#fff"/>
<rect x="1037" y="109" width="1" height="3" fill="#fff"/>
<rect x="1038" y="224" width="1" height="3" fill="#fff"/>
<rect x="1039" y="137" width="1" height="3" fill="#fff"/>
<rect x="1041" y="142" width="1" height="3" fill="#fff"/>
<rect x="1042" y="111" width="1" height="3" fill="#fff"/>
<rect x="1044" y="190" width="1" height="3" fill="#fff"/>
<rect x="1045" y="121" width="1" height="3" fill="#fff"/>
<rect x="1048" y="163" width="1" height="3" fill="#fff"/>
<rect x="1049" y="146" width="1" height="3" fill="#fff"/>
<rect x="1051" y="290" width="1" height="3" fill="#fff"/>
<rect x="1054" y="293" width="1" height="3" fill="#fff"/>
<rect x="1057" y="293" width="1" height="3" fill="#fff"/>
<rect x="1059" y="292" width="1" height="3" fill="#fff"/>
<rect x="1061" y="293" width="1" height="3" fill="#fff"/>
<rect x="1062" y="293" width="1" height="3" fill="#fff"/>
<rect x="1072" y="290" width="1" height="3" fill="#fff"/>
<rect x="1075" y="288" width="1" height="3" fill="#fff"/>
<rect x="1078" y="293" width="1" height="3" fill="#fff"/>
<rect x="1082" y="277" width="1" height="3" fill="#fff"/>
<rect x="1084" y="293" width="1" height="3" fill="#fff"/>
<rect x="1086" y="290" width="1" height="3" fill="#fff"/>
<rect x="1087" y="286" width="1" height="3" fill="#fff"/>
<rect x="1089" y="280" width="1" height="3" fill="#fff"/>
<rect x="1090" y="270" width="1" height="3" fill="#fff"/>
<rect x="1092" y="235" width="1" height="3" fill="#fff"/>
<rect x="1093" y="218" width="1" height="3" fill="#fff"/>
<rect x="1095" y="185" width="1" height="3" fill="#fff"/>
<rect x="1096" y="160" width="1" height="3" fill="#fff"/>
<rect x="1099" y="193" width="1" height="3" fill="#fff"/>
<rect x="1102" y="130" width="1" height="3" fill="#fff"/>
<rect x="1104" y="127" width="1" height="3" fill="#fff"/>
<rect x="1108" y="140" width="1" height="3" fill="#fff"/>
<rect x="1109" y="87" width="1" height="3" fill="#fff"/>
<rect x="1114" y="140" width="1" height="3" fill="#fff"/>
<rect x="1117" y="137" width="1" height="3" fill="#fff"/>
<rect x="1119" y="137" width="1" height="3" fill="#fff"/>
<rect x="1120" y="150" width="1" height="3" fill="#fff"/>
<rect x="1124" y="137" width="1" height="3" fill="#fff"/>
<rect x="1126" y="178" width="1" height="3" fill="#fff"/>
<rect x="1130" y="131" width="1" height="3" fill="#fff"/>
<rect x="1133" y="110" width="1" height="3" fill="#fff"/>
<rect x="1135" y="157" width="1" height="3" fill="#fff"/>
<rect x="1137" y="130" width="1" height="3" fill="#fff"/>
<rect x="1138" y="160" width="1" height="3" fill="#fff"/>
<rect x="1140" y="166" width="1" height="3" fill="#fff"/>
<rect x="1141" y="153" width="1" height="3" fill="#fff"/>
<rect x="1144" y="224" width="1" height="3" fill="#fff"/>
<rect x="1146" y="204" width="1" height="3" fill="#fff"/>
<rect x="945" y="266" width="1" height="31" fill="#a8a8a8"/>
<rect x="981" y="216" width="1" height="77" fill="#a8a8a8"/>
<rect x="988" y="243" width="1" height="22" fill="#a8a8a8"/>
<rect x="990" y="255" width="1" height="29" fill="#a8a8a8"/>
<rect x="997" y="259" width="1" height="32" fill="#a8a8a8"/>
<rect x="1000" y="252" width="1" height="33" fill="#a8a8a8"/>
<rect x="1002" y="205" width="1" height="21" fill="#a8a8a8"/>
<rect x="1005" y="180" width="1" height="44" fill="#a8a8a8"/>
<rect x="1008" y="256" width="1" height="31" fill="#a8a8a8"/>
<rect x="1014" y="214" width="1" height="16" fill="#a8a8a8"/>
<rect x="1017" y="262" width="1" height="35" fill="#a8a8a8"/>
<rect x="1020" y="265" width="1" height="32" fill="#a8a8a8"/>
<rect x="1026" y="262" width="1" height="26" fill="#a8a8a8"/>
<rect x="1034" y="201" width="1" height="79" fill="#a8a8a8"/>
<rect x="1038" y="196" width="1" height="60" fill="#a8a8a8"/>
<rect x="1041" y="101" width="1" height="83" fill="#a8a8a8"/>
<rect x="1048" y="110" width="1" height="108" fill="#a8a8a8"/>
<rect x="1099" y="116" width="1" height="10" fill="#a8a8a8"/>
<rect x="1107" y="159" width="1" height="16" fill="#a8a8a8"/>
<rect x="1110" y="87" width="1" height="26" fill="#a8a8a8"/>
<rect x="1113" y="112" width="1" height="11" fill="#a8a8a8"/>
<rect x="1116" y="109" width="1" height="12" fill="#a8a8a8"/>
<rect x="1122" y="171" width="1" height="7" fill="#a8a8a8"/>
<rect x="1125" y="165" width="1" height="11" fill="#a8a8a8"/>
<rect x="1129" y="118" width="1" height="16" fill="#a8a8a8"/>
<rect x="1131" y="143" width="1" height="18" fill="#a8a8a8"/>
<rect x="1134" y="106" width="1" height="28" fill="#a8a8a8"/>
<rect x="1143" y="189" width="1" height="10" fill="#a8a8a8"/>
<rect x="748" y="658" width="1" height="3" fill="#fff"/>
<rect x="759" y="658" width="1" height="3" fill="#fff"/>
<rect x="773" y="658" width="1" height="3" fill="#fff"/>
<rect x="778" y="651" width="1" height="3" fill="#fff"/>
<rect x="780" y="658" width="1" height="3" fill="#fff"/>
<rect x="786" y="652" width="1" height="3" fill="#fff"/>
<rect x="834" y="658" width="1" height="3" fill="#fff"/>
<rect x="859" y="658" width="1" height="3" fill="#fff"/>
<rect x="874" y="658" width="1" height="3" fill="#fff"/>
<rect x="885" y="658" width="1" height="3" fill="#fff"/>
<rect x="894" y="658" width="1" height="3" fill="#fff"/>
<rect x="936" y="655" width="1" height="3" fill="#fff"/>
<rect x="944" y="658" width="1" height="3" fill="#fff"/>
<rect x="947" y="657" width="1" height="3" fill="#fff"/>
<rect x="979" y="658" width="1" height="3" fill="#fff"/>
<rect x="982" y="654" width="1" height="3" fill="#fff"/>
<rect x="985" y="651" width="1" height="3" fill="#fff"/>
<rect x="989" y="657" width="1" height="3" fill="#fff"/>
<rect x="992" y="652" width="1" height="3" fill="#fff"/>
<rect x="995" y="654" width="1" height="3" fill="#fff"/>
<rect x="1002" y="651" width="1" height="3" fill="#fff"/>
<rect x="1007" y="654" width="1" height="3" fill="#fff"/>
<rect x="1012" y="652" width="1" height="3" fill="#fff"/>
<rect x="1015" y="649" width="1" height="3" fill="#fff"/>
<rect x="1018" y="655" width="1" height="3" fill="#fff"/>
<rect x="1021" y="655" width="1" height="3" fill="#fff"/>
<rect x="1024" y="658" width="1" height="3" fill="#fff"/>
<rect x="1027" y="658" width="1" height="3" fill="#fff"/>
<rect x="1035" y="644" width="1" height="3" fill="#fff"/>
<rect x="1038" y="652" width="1" height="3" fill="#fff"/>
<rect x="1041" y="641" width="1" height="3" fill="#fff"/>
<rect x="1044" y="643" width="1" height="3" fill="#fff"/>
<rect x="1047" y="649" width="1" height="3" fill="#fff"/>
<rect x="1050" y="655" width="1" height="3" fill="#fff"/>
<rect x="1053" y="658" width="1" height="3" fill="#fff"/>
<rect x="1056" y="658" width="1" height="3" fill="#fff"/>
<rect x="1061" y="658" width="1" height="3" fill="#fff"/>
<rect x="1066" y="658" width="1" height="3" fill="#fff"/>
<rect x="1070" y="647" width="1" height="3" fill="#fff"/>
<rect x="1078" y="658" width="1" height="3" fill="#fff"/>
<rect x="1083" y="658" width="1" height="3" fill="#fff"/>
<rect x="1086" y="652" width="1" height="3" fill="#fff"/>
<rect x="1089" y="644" width="1" height="3" fill="#fff"/>
<rect x="1090" y="635" width="1" height="3" fill="#fff"/>
<rect x="1092" y="598" width="1" height="3" fill="#fff"/>
<rect x="1093" y="586" width="1" height="3" fill="#fff"/>
<rect x="1097" y="553" width="1" height="3" fill="#fff"/>
<rect x="1098" y="527" width="1" height="3" fill="#fff"/>
<rect x="1100" y="556" width="1" height="3" fill="#fff"/>
<rect x="1101" y="485" width="1" height="3" fill="#fff"/>
<rect x="1103" y="504" width="1" height="3" fill="#fff"/>
<rect x="1104" y="506" width="1" height="3" fill="#fff"/>
<rect x="1107" y="533" width="1" height="3" fill="#fff"/>
<rect x="1110" y="455" width="1" height="3" fill="#fff"/>
<rect x="1114" y="485" width="1" height="3" fill="#fff"/>
<rect x="1117" y="476" width="1" height="3" fill="#fff"/>
<rect x="1120" y="502" width="1" height="3" fill="#fff"/>
<rect x="1121" y="526" width="1" height="3" fill="#fff"/>
<rect x="1123" y="513" width="1" height="3" fill="#fff"/>
<rect x="1124" y="536" width="1" height="3" fill="#fff"/>
<rect x="1126" y="550" width="1" height="3" fill="#fff"/>
<rect x="1128" y="410" width="1" height="3" fill="#fff"/>
<rect x="1131" y="510" width="1" height="3" fill="#fff"/>
<rect x="1132" y="470" width="1" height="3" fill="#fff"/>
<rect x="1134" y="510" width="1" height="3" fill="#fff"/>
<rect x="1137" y="495" width="1" height="3" fill="#fff"/>
<rect x="1138" y="509" width="1" height="3" fill="#fff"/>
<rect x="1140" y="538" width="1" height="3" fill="#fff"/>
<rect x="1143" y="558" width="1" height="3" fill="#fff"/>
<rect x="1146" y="564" width="1" height="3" fill="#fff"/>
<rect x="1029" y="578" width="1" height="3" fill="#fff"/>
<rect x="1029" y="500" width="1" height="162" fill="#a0a0a0"/>
<rect x="1032" y="642" width="1" height="17" fill="#a0a0a0"/>
<rect x="1137" y="491" width="1" height="12" fill="#a0a0a0"/>
<rect x="1140" y="528" width="1" height="17" fill="#a0a0a0"/>
<rect x="742" y="1003" width="1" height="3" fill="#fff"/>
<rect x="748" y="1017" width="1" height="3" fill="#fff"/>
<rect x="757" y="1015" width="1" height="3" fill="#fff"/>
<rect x="759" y="1001" width="1" height="3" fill="#fff"/>
<rect x="761" y="997" width="1" height="3" fill="#fff"/>
<rect x="763" y="1020" width="1" height="3" fill="#fff"/>
<rect x="765" y="799" width="1" height="3" fill="#fff"/>
<rect x="769" y="1018" width="1" height="3" fill="#fff"/>
<rect x="773" y="1011" width="1" height="3" fill="#fff"/>
<rect x="776" y="1012" width="1" height="3" fill="#fff"/>
<rect x="778" y="1001" width="1" height="3" fill="#fff"/>
<rect x="779" y="998" width="1" height="3" fill="#fff"/>
<rect x="782" y="1007" width="1" height="3" fill="#fff"/>
<rect x="783" y="1003" width="1" height="3" fill="#fff"/>
<rect x="785" y="977" width="1" height="3" fill="#fff"/>
<rect x="786" y="952" width="1" height="3" fill="#fff"/>
<rect x="813" y="1021" width="1" height="3" fill="#fff"/>
<rect x="816" y="1015" width="1" height="3" fill="#fff"/>
<rect x="820" y="1023" width="1" height="3" fill="#fff"/>
<rect x="822" y="947" width="1" height="3" fill="#fff"/>
<rect x="825" y="1018" width="1" height="3" fill="#fff"/>
<rect x="828" y="1007" width="1" height="3" fill="#fff"/>
<rect x="831" y="1023" width="1" height="3" fill="#fff"/>
<rect x="834" y="1018" width="1" height="3" fill="#fff"/>
<rect x="837" y="1018" width="1" height="3" fill="#fff"/>
<rect x="847" y="1015" width="1" height="3" fill="#fff"/>
<rect x="856" y="1014" width="1" height="3" fill="#fff"/>
<rect x="867" y="1024" width="1" height="3" fill="#fff"/>
<rect x="874" y="1018" width="1" height="3" fill="#fff"/>
<rect x="882" y="990" width="1" height="3" fill="#fff"/>
<rect x="886" y="1023" width="1" height="3" fill="#fff"/>
<rect x="896" y="1018" width="1" height="3" fill="#fff"/>
<rect x="899" y="1012" width="1" height="3" fill="#fff"/>
<rect x="902" y="1018" width="1" height="3" fill="#fff"/>
<rect x="936" y="1001" width="1" height="3" fill="#fff"/>
<rect x="938" y="1021" width="1" height="3" fill="#fff"/>
<rect x="941" y="1011" width="1" height="3" fill="#fff"/>
<rect x="944" y="1011" width="1" height="3" fill="#fff"/>
<rect x="945" y="1007" width="1" height="3" fill="#fff"/>
<rect x="948" y="1018" width="1" height="3" fill="#fff"/>
<rect x="950" y="995" width="1" height="3" fill="#fff"/>
<rect x="953" y="970" width="1" height="3" fill="#fff"/>
<rect x="973" y="990" width="1" height="3" fill="#fff"/>
<rect x="979" y="1007" width="1" height="3" fill="#fff"/>
<rect x="982" y="963" width="1" height="3" fill="#fff"/>
<rect x="984" y="989" width="1" height="3" fill="#fff"/>
<rect x="985" y="943" width="1" height="3" fill="#fff"/>
<rect x="988" y="977" width="1" height="3" fill="#fff"/>
<rect x="990" y="994" width="1" height="3" fill="#fff"/>
<rect x="992" y="984" width="1" height="3" fill="#fff"/>
<rect x="993" y="926" width="1" height="3" fill="#fff"/>
<rect x="995" y="961" width="1" height="3" fill="#fff"/>
<rect x="996" y="944" width="1" height="3" fill="#fff"/>
<rect x="998" y="983" width="1" height="3" fill="#fff"/>
<rect x="999" y="1003" width="1" height="3" fill="#fff"/>
<rect x="1001" y="932" width="1" height="3" fill="#fff"/>
<rect x="1002" y="977" width="1" height="3" fill="#fff"/>
<rect x="1004" y="1012" width="1" height="3" fill="#fff"/>
<rect x="1006" y="940" width="1" height="3" fill="#fff"/>
<rect x="1007" y="1001" width="1" height="3" fill="#fff"/>
<rect x="1009" y="984" width="1" height="3" fill="#fff"/>
<rect x="1010" y="980" width="1" height="3" fill="#fff"/>
<rect x="1013" y="961" width="1" height="3" fill="#fff"/>
<rect x="1015" y="943" width="1" height="3" fill="#fff"/>
<rect x="1016" y="990" width="1" height="3" fill="#fff"/>
<rect x="1018" y="1018" width="1" height="3" fill="#fff"/>
<rect x="1019" y="1001" width="1" height="3" fill="#fff"/>
<rect x="1023" y="995" width="1" height="3" fill="#fff"/>
<rect x="1027" y="995" width="1" height="3" fill="#fff"/>
<rect x="1029" y="1024" width="1" height="3" fill="#fff"/>
<rect x="1032" y="952" width="1" height="3" fill="#fff"/>
<rect x="1033" y="918" width="1" height="3" fill="#fff"/>
<rect x="1036" y="916" width="1" height="3" fill="#fff"/>
<rect x="1038" y="949" width="1" height="3" fill="#fff"/>
<rect x="1039" y="1024" width="1" height="3" fill="#fff"/>
<rect x="1041" y="822" width="1" height="3" fill="#fff"/>
<rect x="1043" y="856" width="1" height="3" fill="#fff"/>
<rect x="1044" y="849" width="1" height="3" fill="#fff"/>
<rect x="1046" y="836" width="1" height="3" fill="#fff"/>
<rect x="1047" y="907" width="1" height="3" fill="#fff"/>
<rect x="1049" y="808" width="1" height="3" fill="#fff"/>
<rect x="1052" y="1023" width="1" height="3" fill="#fff"/>
<rect x="1053" y="1022" width="1" height="3" fill="#fff"/>
<rect x="1056" y="1023" width="1" height="3" fill="#fff"/>
<rect x="1058" y="1024" width="1" height="3" fill="#fff"/>
<rect x="1061" y="1022" width="1" height="3" fill="#fff"/>
<rect x="1063" y="1023" width="1" height="3" fill="#fff"/>
<rect x="1066" y="1024" width="1" height="3" fill="#fff"/>
<rect x="1068" y="1022" width="1" height="3" fill="#fff"/>
<rect x="1071" y="1023" width="1" height="3" fill="#fff"/>
<rect x="1073" y="1024" width="1" height="3" fill="#fff"/>
<rect x="1076" y="1022" width="1" height="3" fill="#fff"/>
<rect x="1078" y="1023" width="1" height="3" fill="#fff"/>
<rect x="1081" y="1024" width="1" height="3" fill="#fff"/>
<rect x="1083" y="1022" width="1" height="3" fill="#fff"/>
<rect x="1085" y="1023" width="1" height="3" fill="#fff"/>
<rect x="1087" y="1018" width="1" height="3" fill="#fff"/>
<rect x="1089" y="1011" width="1" height="3" fill="#fff"/>
<rect x="1090" y="1001" width="1" height="3" fill="#fff"/>
<rect x="1092" y="969" width="1" height="3" fill="#fff"/>
<rect x="1093" y="952" width="1" height="3" fill="#fff"/>
<rect x="1095" y="926" width="1" height="3" fill="#fff"/>
<rect x="1097" y="892" width="1" height="3" fill="#fff"/>
<rect x="1098" y="930" width="1" height="3" fill="#fff"/>
<rect x="1100" y="858" width="1" height="3" fill="#fff"/>
<rect x="1101" y="872" width="1" height="3" fill="#fff"/>
<rect x="1103" y="841" width="1" height="3" fill="#fff"/>
<rect x="1104" y="878" width="1" height="3" fill="#fff"/>
<rect x="1107" y="912" width="1" height="3" fill="#fff"/>
<rect x="1109" y="879" width="1" height="3" fill="#fff"/>
<rect x="1110" y="841" width="1" height="3" fill="#fff"/>
<rect x="1114" y="853" width="1" height="3" fill="#fff"/>
<rect x="1115" y="870" width="1" height="3" fill="#fff"/>
<rect x="1117" y="849" width="1" height="3" fill="#fff"/>
<rect x="1120" y="876" width="1" height="3" fill="#fff"/>
<rect x="1123" y="901" width="1" height="3" fill="#fff"/>
<rect x="1124" y="875" width="1" height="3" fill="#fff"/>
<rect x="1126" y="899" width="1" height="3" fill="#fff"/>
<rect x="1129" y="862" width="1" height="3" fill="#fff"/>
<rect x="1131" y="889" width="1" height="3" fill="#fff"/>
<rect x="1132" y="839" width="1" height="3" fill="#fff"/>
<rect x="1134" y="853" width="1" height="3" fill="#fff"/>
<rect x="1135" y="878" width="1" height="3" fill="#fff"/>
<rect x="1138" y="862" width="1" height="3" fill="#fff"/>
<rect x="1140" y="901" width="1" height="3" fill="#fff"/>
<rect x="1141" y="875" width="1" height="3" fill="#fff"/>
<rect x="1143" y="923" width="1" height="3" fill="#fff"/>
<rect x="1144" y="944" width="1" height="3" fill="#fff"/>
<rect x="1146" y="933" width="1" height="3" fill="#fff"/>
<rect x="1290" y="128" width="1" height="3" fill="#fff"/>
<rect x="1293" y="294" width="1" height="3" fill="#fff"/>
<rect x="1312" y="291" width="1" height="3" fill="#fff"/>
<rect x="1315" y="291" width="1" height="3" fill="#fff"/>
<rect x="1475" y="294" width="1" height="3" fill="#fff"/>
<rect x="1482" y="291" width="1" height="3" fill="#fff"/>
<rect x="1500" y="282" width="1" height="3" fill="#fff"/>
<rect x="1503" y="294" width="1" height="3" fill="#fff"/>
<rect x="1512" y="277" width="1" height="3" fill="#fff"/>
<rect x="1560" y="267" width="1" height="3" fill="#fff"/>
<rect x="1617" y="288" width="1" height="3" fill="#fff"/>
<rect x="1620" y="282" width="1" height="3" fill="#fff"/>
<rect x="1630" y="250" width="1" height="3" fill="#fff"/>
<rect x="1515" y="291" width="1" height="3" fill="#fff"/>
<rect x="1519" y="294" width="1" height="3" fill="#fff"/>
<rect x="1522" y="291" width="1" height="3" fill="#fff"/>
<rect x="1525" y="294" width="1" height="3" fill="#fff"/>
<rect x="1528" y="291" width="1" height="3" fill="#fff"/>
<rect x="1531" y="294" width="1" height="3" fill="#fff"/>
<rect x="1534" y="291" width="1" height="3" fill="#fff"/>
<rect x="1537" y="294" width="1" height="3" fill="#fff"/>
<rect x="1540" y="291" width="1" height="3" fill="#fff"/>
<rect x="1543" y="294" width="1" height="3" fill="#fff"/>
<rect x="1546" y="291" width="1" height="3" fill="#fff"/>
<rect x="1549" y="294" width="1" height="3" fill="#fff"/>
<rect x="1553" y="291" width="1" height="3" fill="#fff"/>
<rect x="1556" y="294" width="1" height="3" fill="#fff"/>
<rect x="1562" y="288" width="1" height="3" fill="#fff"/>
<rect x="1565" y="290" width="1" height="3" fill="#fff"/>
<rect x="1568" y="293" width="1" height="3" fill="#fff"/>
<rect x="1571" y="288" width="1" height="3" fill="#fff"/>
<rect x="1574" y="290" width="1" height="3" fill="#fff"/>
<rect x="1577" y="293" width="1" height="3" fill="#fff"/>
<rect x="1580" y="288" width="1" height="3" fill="#fff"/>
<rect x="1583" y="290" width="1" height="3" fill="#fff"/>
<rect x="1593" y="292" width="1" height="3" fill="#fff"/>
<rect x="1596" y="294" width="1" height="3" fill="#fff"/>
<rect x="1599" y="292" width="1" height="3" fill="#fff"/>
<rect x="1602" y="294" width="1" height="3" fill="#fff"/>
<rect x="1605" y="292" width="1" height="3" fill="#fff"/>
<rect x="1608" y="294" width="1" height="3" fill="#fff"/>
<rect x="1611" y="292" width="1" height="3" fill="#fff"/>
<rect x="1614" y="294" width="1" height="3" fill="#fff"/>
<rect x="1590" y="275" width="1" height="14" fill="#a0a0a0"/>
<rect x="1623" y="248" width="1" height="19" fill="#a0a0a0"/>
<rect x="1627" y="220" width="1" height="26" fill="#a0a0a0"/>
<rect x="1628" y="140" width="1" height="68" fill="#a0a0a0"/>
<rect x="1631" y="183" width="1" height="19" fill="#a0a0a0"/>
<rect x="1633" y="195" width="1" height="13" fill="#a0a0a0"/>
<rect x="1634" y="158" width="1" height="81" fill="#a0a0a0"/>
<rect x="1637" y="223" width="1" height="29" fill="#a0a0a0"/>
<rect x="1640" y="138" width="1" height="70" fill="#a0a0a0"/>
<rect x="1642" y="170" width="1" height="45" fill="#a0a0a0"/>
<rect x="1645" y="177" width="1" height="31" fill="#a0a0a0"/>
<rect x="1647" y="150" width="1" height="52" fill="#a0a0a0"/>
<rect x="1650" y="192" width="1" height="35" fill="#a0a0a0"/>
<rect x="1653" y="183" width="1" height="47" fill="#a0a0a0"/>
<rect x="1656" y="195" width="1" height="35" fill="#a0a0a0"/>
<rect x="1659" y="153" width="1" height="59" fill="#a0a0a0"/>
<rect x="1661" y="186" width="1" height="41" fill="#a0a0a0"/>
<rect x="1662" y="201" width="1" height="32" fill="#a0a0a0"/>
<rect x="1664" y="149" width="1" height="75" fill="#a0a0a0"/>
<rect x="1667" y="164" width="1" height="44" fill="#a0a0a0"/>
<rect x="1670" y="192" width="1" height="35" fill="#a0a0a0"/>
<rect x="1673" y="214" width="1" height="28" fill="#a0a0a0"/>
<rect x="1674" y="245" width="1" height="13" fill="#a0a0a0"/>
<rect x="43" y="697" width="422" height="1" fill="#fff"/>
<rect x="49" y="697" width="1" height="513" fill="#fff"/>
<rect x="458" y="697" width="1" height="513" fill="#fff"/>
<rect x="43" y="697" width="6" height="1" fill="#fff"/>
<rect x="459" y="697" width="6" height="1" fill="#fff"/>
<rect x="46" y="729" width="3" height="1" fill="#fff"/>
<rect x="459" y="729" width="3" height="1" fill="#fff"/>
<rect x="46" y="761" width="3" height="1" fill="#fff"/>
<rect x="459" y="761" width="3" height="1" fill="#fff"/>
<rect x="46" y="793" width="3" height="1" fill="#fff"/>
<rect x="459" y="793" width="3" height="1" fill="#fff"/>
<rect x="43" y="825" width="6" height="1" fill="#fff"/>
<rect x="459" y="825" width="6" height="1" fill="#fff"/>
<rect x="46" y="857" width="3" height="1" fill="#fff"/>
<rect x="459" y="857" width="3" height="1" fill="#fff"/>
<rect x="46" y="889" width="3" height="1" fill="#fff"/>
<rect x="459" y="889" width="3" height="1" fill="#fff"/>
<rect x="46" y="921" width="3" height="1" fill="#fff"/>
<rect x="459" y="921" width="3" height="1" fill="#fff"/>
<rect x="43" y="953" width="6" height="1" fill="#fff"/>
<rect x="459" y="953" width="6" height="1" fill="#fff"/>
<rect x="46" y="985" width="3" height="1" fill="#fff"/>
<rect x="459" y="985" width="3" height="1" fill="#fff"/>
<rect x="46" y="1017" width="3" height="1" fill="#fff"/>
<rect x="459" y="1017" width="3" height="1" fill="#fff"/>
<rect x="46" y="1049" width="3" height="1" fill="#fff"/>
<rect x="459" y="1049" width="3" height="1" fill="#fff"/>
<rect x="43" y="1081" width="6" height="1" fill="#fff"/>
<rect x="459" y="1081" width="6" height="1" fill="#fff"/>
<rect x="46" y="1113" width="3" height="1" fill="#fff"/>
<rect x="459" y="1113" width="3" height="1" fill="#fff"/>
<rect x="46" y="1145" width="3" height="1" fill="#fff"/>
<rect x="459" y="1145" width="3" height="1" fill="#fff"/>
<rect x="46" y="1177" width="3" height="1" fill="#fff"/>
<rect x="459" y="1177" width="3" height="1" fill="#fff"/>
<rect x="43" y="1209" width="6" height="1" fill="#fff"/>
<rect x="459" y="1209" width="6" height="1" fill="#fff"/>
<rect x="49" y="1209" width="410" height="1" fill="#fff"/>
<rect x="50" y="1210" width="1" height="9" fill="#fff"/>
<rect x="60" y="1210" width="1" height="7" fill="#fff"/>
<rect x="70" y="1210" width="1" height="7" fill="#fff"/>
<rect x="80" y="1210" width="1" height="7" fill="#fff"/>
<rect x="90" y="1210" width="1" height="7" fill="#fff"/>
<rect x="100" y="1210" width="1" height="9" fill="#fff"/>
<rect x="110" y="1210" width="1" height="7" fill="#fff"/>
<rect x="120" y="1210" width="1" height="7" fill="#fff"/>
<rect x="130" y="1210" width="1" height="7" fill="#fff"/>
<rect x="140" y="1210" width="1" height="7" fill="#fff"/>
<rect x="150" y="1210" width="1" height="9" fill="#fff"/>
<rect x="160" y="1210" width="1" height="7" fill="#fff"/>
<rect x="170" y="1210" width="1" height="7" fill="#fff"/>
<rect x="180" y="1210" width="1" height="7" fill="#fff"/>
<rect x="190" y="1210" width="1" height="7" fill="#fff"/>
<rect x="200" y="1210" width="1" height="9" fill="#fff"/>
<rect x="210" y="1210" width="1" height="7" fill="#fff"/>
<rect x="220" y="1210" width="1" height="7" fill="#fff"/>
<rect x="230" y="1210" width="1" height="7" fill="#fff"/>
<rect x="240" y="1210" width="1" height="7" fill="#fff"/>
<rect x="250" y="1210" width="1" height="9" fill="#fff"/>
<rect x="260" y="1210" width="1" height="7" fill="#fff"/>
<rect x="270" y="1210" width="1" height="7" fill="#fff"/>
<rect x="280" y="1210" width="1" height="7" fill="#fff"/>
<rect x="290" y="1210" width="1" height="7" fill="#fff"/>
<rect x="300" y="1210" width="1" height="9" fill="#fff"/>
<rect x="310" y="1210" width="1" height="7" fill="#fff"/>
<rect x="320" y="1210" width="1" height="7" fill="#fff"/>
<rect x="330" y="1210" width="1" height="7" fill="#fff"/>
<rect x="340" y="1210" width="1" height="7" fill="#fff"/>
<rect x="350" y="1210" width="1" height="9" fill="#fff"/>
<rect x="360" y="1210" width="1" height="7" fill="#fff"/>
<rect x="370" y="1210" width="1" height="7" fill="#fff"/>
<rect x="380" y="1210" width="1" height="7" fill="#fff"/>
<rect x="390" y="1210" width="1" height="7" fill="#fff"/>
<rect x="400" y="1210" width="1" height="9" fill="#fff"/>
<rect x="410" y="1210" width="1" height="7" fill="#fff"/>
<rect x="420" y="1210" width="1" height="7" fill="#fff"/>
<rect x="430" y="1210" width="1" height="7" fill="#fff"/>
<rect x="440" y="1210" width="1" height="7" fill="#fff"/>
<rect x="450" y="1210" width="1" height="9" fill="#fff"/>
<rect x="361" y="698" width="1" height="512" fill="#fff"/>
<text class="s" transform="scale(0.86,1)" x="34.34" y="701.00" letter-spacing="1.20" xml:space="preserve">.1</text>
<text class="s" transform="scale(0.86,1)" x="19.22" y="829.00" letter-spacing="1.20" xml:space="preserve">.075</text>
<text class="s" transform="scale(0.86,1)" x="26.78" y="957.00" letter-spacing="1.20" xml:space="preserve">.05</text>
<text class="s" transform="scale(0.86,1)" x="19.22" y="1085.00" letter-spacing="1.20" xml:space="preserve">.025</text>
<text class="s" transform="scale(0.86,1)" x="41.90" y="1213.00" letter-spacing="1.20" xml:space="preserve">0</text>
<text class="s" transform="scale(0.86,1)" x="541.86" y="701.00" letter-spacing="1.20" xml:space="preserve">10</text>
<text class="s" transform="scale(0.86,1)" x="541.86" y="829.00" letter-spacing="1.20" xml:space="preserve">7.5</text>
<text class="s" transform="scale(0.86,1)" x="541.86" y="957.00" letter-spacing="1.20" xml:space="preserve">5</text>
<text class="s" transform="scale(0.86,1)" x="541.86" y="1085.00" letter-spacing="1.20" xml:space="preserve">2.5</text>
<text class="s" transform="scale(0.86,1)" x="541.86" y="1213.00" letter-spacing="1.20" xml:space="preserve">0</text>
<text class="s" transform="scale(0.86,1)" x="55.54" y="1230.00" letter-spacing="1.78" xml:space="preserve">0</text>
<text class="s" transform="scale(0.86,1)" x="163.68" y="1230.00" letter-spacing="1.78" xml:space="preserve">100</text>
<text class="s" transform="scale(0.86,1)" x="279.96" y="1230.00" letter-spacing="1.78" xml:space="preserve">200</text>
<text class="s" transform="scale(0.86,1)" x="396.24" y="1230.00" letter-spacing="1.78" xml:space="preserve">300</text>
<text class="s" transform="scale(0.86,1)" x="512.52" y="1230.00" letter-spacing="1.78" xml:space="preserve">400</text>
<text class="s" transform="scale(0.86,1)" x="252.33" y="1247.00" letter-spacing="1.78" xml:space="preserve">BAND NUMBER</text>
<text class="s" transform="scale(0.86,1)" x="2.05" y="923.00" letter-spacing="1.78" xml:space="preserve">B</text>
<text class="s" transform="scale(0.86,1)" x="2.05" y="943.00" letter-spacing="1.78" xml:space="preserve">D</text>
<text class="s" transform="scale(0.86,1)" x="2.05" y="963.00" letter-spacing="1.78" xml:space="preserve">R</text>
<text class="s" transform="scale(0.86,1)" x="2.05" y="983.00" letter-spacing="1.78" xml:space="preserve">F</text>
<text class="s" transform="scale(0.86,1)" x="581.12" y="903.00" letter-spacing="1.78" xml:space="preserve">R</text>
<text class="s" transform="scale(0.86,1)" x="581.12" y="920.00" letter-spacing="1.78" xml:space="preserve">A</text>
<text class="s" transform="scale(0.86,1)" x="581.12" y="937.00" letter-spacing="1.78" xml:space="preserve">D</text>
<text class="s" transform="scale(0.86,1)" x="581.12" y="954.00" letter-spacing="1.78" xml:space="preserve">I</text>
<text class="s" transform="scale(0.86,1)" x="581.12" y="971.00" letter-spacing="1.78" xml:space="preserve">A</text>
<text class="s" transform="scale(0.86,1)" x="581.12" y="988.00" letter-spacing="1.78" xml:space="preserve">N</text>
<text class="s" transform="scale(0.86,1)" x="581.12" y="1005.00" letter-spacing="1.78" xml:space="preserve">C</text>
<text class="s" transform="scale(0.86,1)" x="581.12" y="1022.00" letter-spacing="1.78" xml:space="preserve">E</text>
<text class="s" transform="scale(0.86,1)" x="697.63" y="903.00" letter-spacing="1.78" xml:space="preserve">F</text>
<text class="s" transform="scale(0.86,1)" x="697.63" y="917.00" letter-spacing="1.78" xml:space="preserve">R</text>
<text class="s" transform="scale(0.86,1)" x="697.63" y="931.00" letter-spacing="1.78" xml:space="preserve">E</text>
<text class="s" transform="scale(0.86,1)" x="697.63" y="945.00" letter-spacing="1.78" xml:space="preserve">Q</text>
<text class="s" transform="scale(0.86,1)" x="697.63" y="959.00" letter-spacing="1.78" xml:space="preserve">U</text>
<text class="s" transform="scale(0.86,1)" x="697.63" y="973.00" letter-spacing="1.78" xml:space="preserve">E</text>
<text class="s" transform="scale(0.86,1)" x="697.63" y="987.00" letter-spacing="1.78" xml:space="preserve">N</text>
<text class="s" transform="scale(0.86,1)" x="697.63" y="1001.00" letter-spacing="1.78" xml:space="preserve">C</text>
<text class="s" transform="scale(0.86,1)" x="697.63" y="1015.00" letter-spacing="1.78" xml:space="preserve">Y</text>
<rect x="430" y="932" width="1" height="2" fill="#1a4ec4"/>
<rect x="421" y="929" width="1" height="3" fill="#2456d0"/>
<rect x="420" y="930" width="1" height="3" fill="#1a4ec4"/>
<rect x="447" y="938" width="1" height="2" fill="#2456d0"/>
<rect x="417" y="908" width="1" height="3" fill="#1c62c8"/>
<rect x="426" y="934" width="1" height="3" fill="#1c62c8"/>
<rect x="431" y="938" width="1" height="3" fill="#1a4ec4"/>
<rect x="448" y="960" width="1" height="3" fill="#1a4ec4"/>
<rect x="440" y="929" width="1" height="2" fill="#1a4ec4"/>
<rect x="428" y="950" width="1" height="2" fill="#30aaa0"/>
<rect x="448" y="960" width="1" height="2" fill="#1c62c8"/>
<rect x="430" y="999" width="1" height="2" fill="#30aaa0"/>
<rect x="444" y="971" width="1" height="2" fill="#1a4ec4"/>
<rect x="453" y="990" width="1" height="2" fill="#1a4ec4"/>
<rect x="408" y="979" width="1" height="2" fill="#1a4ec4"/>
<rect x="428" y="968" width="1" height="3" fill="#2456d0"/>
<rect x="413" y="977" width="1" height="3" fill="#6cc040"/>
<rect x="455" y="961" width="1" height="2" fill="#2456d0"/>
<rect x="409" y="966" width="1" height="3" fill="#1a4ec4"/>
<rect x="447" y="975" width="1" height="2" fill="#1a4ec4"/>
<rect x="408" y="975" width="1" height="3" fill="#1a4ec4"/>
<rect x="447" y="965" width="1" height="2" fill="#30aaa0"/>
<rect x="422" y="969" width="1" height="2" fill="#1c62c8"/>
<rect x="442" y="998" width="1" height="3" fill="#1c62c8"/>
<rect x="449" y="984" width="1" height="2" fill="#30aaa0"/>
<rect x="409" y="999" width="1" height="3" fill="#1c62c8"/>
<rect x="419" y="993" width="1" height="2" fill="#1a4ec4"/>
<rect x="452" y="999" width="1" height="2" fill="#2456d0"/>
<rect x="420" y="997" width="1" height="2" fill="#1c62c8"/>
<rect x="420" y="978" width="1" height="3" fill="#1a4ec4"/>
<rect x="425" y="983" width="1" height="2" fill="#2456d0"/>
<rect x="450" y="999" width="1" height="2" fill="#2060d8"/>
<rect x="435" y="1037" width="1" height="3" fill="#1a4ec4"/>
<rect x="454" y="1001" width="1" height="3" fill="#1a4ec4"/>
<rect x="421" y="1040" width="1" height="3" fill="#1a4ec4"/>
<rect x="443" y="1036" width="1" height="3" fill="#2456d0"/>
<rect x="423" y="1027" width="1" height="3" fill="#1a4ec4"/>
<rect x="453" y="1001" width="1" height="3" fill="#1a4ec4"/>
<rect x="424" y="1000" width="1" height="2" fill="#1a4ec4"/>
<rect x="456" y="1035" width="1" height="3" fill="#1890b8"/>
<rect x="427" y="1034" width="1" height="2" fill="#1a4ec4"/>
<rect x="421" y="1004" width="1" height="2" fill="#1a4ec4"/>
<rect x="430" y="1025" width="1" height="2" fill="#1a4ec4"/>
<rect x="424" y="1006" width="1" height="3" fill="#1c62c8"/>
<rect x="439" y="1018" width="1" height="3" fill="#1c62c8"/>
<rect x="415" y="1017" width="1" height="3" fill="#1c62c8"/>
<rect x="416" y="1037" width="1" height="3" fill="#1c62c8"/>
<rect x="423" y="1036" width="1" height="3" fill="#1a4ec4"/>
<rect x="447" y="1005" width="1" height="2" fill="#1a4ec4"/>
<rect x="447" y="1015" width="1" height="3" fill="#2060d8"/>
<rect x="442" y="1034" width="1" height="2" fill="#1a4ec4"/>
<rect x="419" y="1024" width="1" height="3" fill="#2a86d0"/>
<rect x="438" y="1023" width="1" height="2" fill="#2456d0"/>
<rect x="406" y="1033" width="1" height="2" fill="#1c62c8"/>
<rect x="455" y="1005" width="1" height="3" fill="#1a4ec4"/>
<rect x="454" y="1027" width="1" height="3" fill="#1c62c8"/>
<rect x="414" y="1000" width="1" height="2" fill="#1a4ec4"/>
<rect x="414" y="1011" width="1" height="2" fill="#1890b8"/>
<rect x="425" y="1032" width="1" height="3" fill="#1c62c8"/>
<rect x="412" y="1018" width="1" height="3" fill="#1a4ec4"/>
<rect x="429" y="1026" width="1" height="2" fill="#1c62c8"/>
<rect x="416" y="1036" width="1" height="3" fill="#1a4ec4"/>
<rect x="418" y="1029" width="1" height="2" fill="#1a4ec4"/>
<rect x="407" y="1014" width="1" height="3" fill="#30aaa0"/>
<rect x="452" y="1009" width="1" height="2" fill="#1a4ec4"/>
<rect x="414" y="1013" width="1" height="3" fill="#2456d0"/>
<rect x="453" y="1020" width="1" height="3" fill="#1a4ec4"/>
<rect x="432" y="1012" width="1" height="3" fill="#2060d8"/>
<rect x="421" y="1015" width="1" height="2" fill="#1c62c8"/>
<rect x="454" y="1021" width="1" height="2" fill="#1a4ec4"/>
<rect x="431" y="1024" width="1" height="2" fill="#1a4ec4"/>
<rect x="431" y="1016" width="1" height="2" fill="#1a4ec4"/>
<rect x="408" y="1022" width="1" height="3" fill="#30aaa0"/>
<rect x="419" y="1019" width="1" height="3" fill="#2456d0"/>
<rect x="432" y="1004" width="1" height="3" fill="#30aaa0"/>
<rect x="412" y="1031" width="1" height="2" fill="#6cc040"/>
<rect x="417" y="1027" width="1" height="2" fill="#1890b8"/>
<rect x="437" y="1004" width="1" height="3" fill="#1a4ec4"/>
<rect x="442" y="1028" width="1" height="3" fill="#6cc040"/>
<rect x="447" y="1025" width="1" height="2" fill="#2060d8"/>
<rect x="432" y="1034" width="1" height="3" fill="#2456d0"/>
<rect x="451" y="1013" width="1" height="2" fill="#1890b8"/>
<rect x="416" y="1040" width="1" height="2" fill="#1a4ec4"/>
<rect x="412" y="1004" width="1" height="3" fill="#30aaa0"/>
<rect x="433" y="1028" width="1" height="2" fill="#1c62c8"/>
<rect x="410" y="1023" width="1" height="3" fill="#1890b8"/>
<rect x="411" y="1020" width="1" height="2" fill="#1890b8"/>
<rect x="446" y="1019" width="1" height="3" fill="#6cc040"/>
<rect x="412" y="1007" width="1" height="2" fill="#1c62c8"/>
<rect x="456" y="1037" width="1" height="2" fill="#1a4ec4"/>
<rect x="454" y="1018" width="1" height="3" fill="#1a4ec4"/>
<rect x="427" y="1014" width="1" height="2" fill="#1c62c8"/>
<rect x="438" y="1042" width="1" height="3" fill="#1c62c8"/>
<rect x="423" y="1062" width="1" height="2" fill="#1c62c8"/>
<rect x="431" y="1041" width="1" height="3" fill="#1a4ec4"/>
<rect x="434" y="1051" width="1" height="3" fill="#1890b8"/>
<rect x="418" y="1047" width="1" height="3" fill="#2456d0"/>
<rect x="410" y="1060" width="1" height="3" fill="#2060d8"/>
<rect x="445" y="1064" width="1" height="3" fill="#2456d0"/>
<rect x="420" y="1046" width="1" height="2" fill="#1890b8"/>
<rect x="416" y="1097" width="1" height="3" fill="#2a86d0"/>
<rect x="434" y="1072" width="1" height="3" fill="#30aaa0"/>
<rect x="438" y="1082" width="1" height="2" fill="#30aaa0"/>
<rect x="409" y="1046" width="1" height="3" fill="#1c62c8"/>
<rect x="431" y="1086" width="1" height="3" fill="#6cc040"/>
<rect x="417" y="1094" width="1" height="3" fill="#2060d8"/>
<rect x="456" y="1074" width="1" height="2" fill="#1a4ec4"/>
<rect x="433" y="1080" width="1" height="2" fill="#1a4ec4"/>
<rect x="424" y="1098" width="1" height="2" fill="#1a4ec4"/>
<rect x="427" y="1070" width="1" height="3" fill="#2a86d0"/>
<rect x="423" y="1057" width="1" height="3" fill="#2a86d0"/>
<rect x="439" y="1085" width="1" height="2" fill="#6cc040"/>
<rect x="435" y="1078" width="1" height="3" fill="#30aaa0"/>
<rect x="406" y="1059" width="1" height="3" fill="#30aaa0"/>
<rect x="407" y="1094" width="1" height="3" fill="#30aaa0"/>
<rect x="457" y="1055" width="1" height="3" fill="#2060d8"/>
<rect x="411" y="1098" width="1" height="2" fill="#1c62c8"/>
<rect x="406" y="1065" width="1" height="2" fill="#1a4ec4"/>
<rect x="423" y="1049" width="1" height="3" fill="#1890b8"/>
<rect x="428" y="1056" width="1" height="2" fill="#30aaa0"/>
<rect x="455" y="1084" width="1" height="3" fill="#1c62c8"/>
<rect x="446" y="1077" width="1" height="2" fill="#1890b8"/>
<rect x="438" y="1085" width="1" height="2" fill="#1c62c8"/>
<rect x="451" y="1042" width="1" height="3" fill="#6cc040"/>
<rect x="426" y="1077" width="1" height="3" fill="#1a4ec4"/>
<rect x="407" y="1045" width="1" height="3" fill="#2456d0"/>
<rect x="430" y="1061" width="1" height="2" fill="#1890b8"/>
<rect x="449" y="1044" width="1" height="2" fill="#1a4ec4"/>
<rect x="427" y="1085" width="1" height="3" fill="#30aaa0"/>
<rect x="411" y="1090" width="1" height="2" fill="#1890b8"/>
<rect x="427" y="1062" width="1" height="3" fill="#1a4ec4"/>
<rect x="407" y="1045" width="1" height="3" fill="#1a4ec4"/>
<rect x="419" y="1087" width="1" height="2" fill="#1a4ec4"/>
<rect x="441" y="1070" width="1" height="2" fill="#1890b8"/>
<rect x="415" y="1079" width="1" height="2" fill="#1890b8"/>
<rect x="421" y="1066" width="1" height="3" fill="#2a86d0"/>
<rect x="428" y="1053" width="1" height="3" fill="#2060d8"/>
<rect x="449" y="1041" width="1" height="2" fill="#30aaa0"/>
<rect x="444" y="1062" width="1" height="2" fill="#30aaa0"/>
<rect x="413" y="1086" width="1" height="2" fill="#2a86d0"/>
<rect x="431" y="1073" width="1" height="3" fill="#2a86d0"/>
<rect x="407" y="1073" width="1" height="2" fill="#2060d8"/>
<rect x="418" y="1046" width="1" height="2" fill="#1890b8"/>
<rect x="408" y="1089" width="1" height="2" fill="#30aaa0"/>
<rect x="430" y="1094" width="1" height="3" fill="#1890b8"/>
<rect x="422" y="1088" width="1" height="3" fill="#1890b8"/>
<rect x="430" y="1088" width="1" height="2" fill="#1a4ec4"/>
<rect x="426" y="1090" width="1" height="3" fill="#1890b8"/>
<rect x="449" y="1093" width="1" height="3" fill="#2060d8"/>
<rect x="442" y="1088" width="1" height="2" fill="#30aaa0"/>
<rect x="417" y="1050" width="1" height="3" fill="#30aaa0"/>
<rect x="414" y="1065" width="1" height="2" fill="#2a86d0"/>
<rect x="429" y="1084" width="1" height="2" fill="#2a86d0"/>
<rect x="453" y="1085" width="1" height="2" fill="#1a4ec4"/>
<rect x="420" y="1052" width="1" height="2" fill="#1890b8"/>
<rect x="436" y="1068" width="1" height="2" fill="#2060d8"/>
<rect x="452" y="1064" width="1" height="3" fill="#2a86d0"/>
<rect x="450" y="1069" width="1" height="3" fill="#30aaa0"/>
<rect x="439" y="1086" width="1" height="2" fill="#1a4ec4"/>
<rect x="425" y="1053" width="1" height="3" fill="#2456d0"/>
<rect x="457" y="1088" width="1" height="2" fill="#2a86d0"/>
<rect x="439" y="1054" width="1" height="3" fill="#1a4ec4"/>
<rect x="428" y="1055" width="1" height="2" fill="#30aaa0"/>
<rect x="426" y="1086" width="1" height="2" fill="#2456d0"/>
<rect x="438" y="1100" width="1" height="2" fill="#2a86d0"/>
<rect x="411" y="1086" width="1" height="2" fill="#1a4ec4"/>
<rect x="448" y="1045" width="1" height="2" fill="#2a86d0"/>
<rect x="452" y="1082" width="1" height="3" fill="#1a4ec4"/>
<rect x="404" y="1051" width="1" height="2" fill="#1c62c8"/>
<rect x="446" y="1066" width="1" height="3" fill="#1a4ec4"/>
<rect x="412" y="1090" width="1" height="3" fill="#2a86d0"/>
<rect x="407" y="1058" width="1" height="2" fill="#1a4ec4"/>
<rect x="423" y="1081" width="1" height="3" fill="#1a4ec4"/>
<rect x="444" y="1087" width="1" height="2" fill="#1a4ec4"/>
<rect x="451" y="1083" width="1" height="2" fill="#1a4ec4"/>
<rect x="428" y="1041" width="1" height="2" fill="#1c62c8"/>
<rect x="419" y="1063" width="1" height="3" fill="#2060d8"/>
<rect x="445" y="1073" width="1" height="2" fill="#1a4ec4"/>
<rect x="424" y="1047" width="1" height="3" fill="#2a86d0"/>
<rect x="443" y="1060" width="1" height="2" fill="#30aaa0"/>
<rect x="437" y="1048" width="1" height="3" fill="#2456d0"/>
<rect x="405" y="1068" width="1" height="2" fill="#1a4ec4"/>
<rect x="412" y="1047" width="1" height="3" fill="#30aaa0"/>
<rect x="454" y="1066" width="1" height="2" fill="#2060d8"/>
<rect x="445" y="1089" width="1" height="3" fill="#30aaa0"/>
<rect x="437" y="1084" width="1" height="2" fill="#1890b8"/>
<rect x="439" y="1077" width="1" height="2" fill="#1a4ec4"/>
<rect x="422" y="1079" width="1" height="2" fill="#1a4ec4"/>
<rect x="431" y="1087" width="1" height="2" fill="#1a4ec4"/>
<rect x="417" y="1072" width="1" height="3" fill="#2a86d0"/>
<rect x="437" y="1071" width="1" height="2" fill="#1c62c8"/>
<rect x="434" y="1042" width="1" height="2" fill="#1c62c8"/>
<rect x="416" y="1075" width="1" height="3" fill="#1890b8"/>
<rect x="418" y="1093" width="1" height="2" fill="#1a4ec4"/>
<rect x="416" y="1074" width="1" height="3" fill="#2060d8"/>
<rect x="412" y="1085" width="1" height="2" fill="#1890b8"/>
<rect x="454" y="1040" width="1" height="3" fill="#1890b8"/>
<rect x="449" y="1051" width="1" height="3" fill="#2060d8"/>
<rect x="405" y="1051" width="1" height="3" fill="#2456d0"/>
<rect x="437" y="1078" width="1" height="3" fill="#1a4ec4"/>
<rect x="429" y="1049" width="1" height="3" fill="#30aaa0"/>
<rect x="413" y="1071" width="1" height="3" fill="#2a86d0"/>
<rect x="406" y="1087" width="1" height="3" fill="#2456d0"/>
<rect x="436" y="1068" width="1" height="3" fill="#30aaa0"/>
<rect x="444" y="1069" width="1" height="3" fill="#1a4ec4"/>
<rect x="448" y="1047" width="1" height="3" fill="#1a4ec4"/>
<rect x="432" y="1066" width="1" height="2" fill="#1a4ec4"/>
<rect x="419" y="1077" width="1" height="3" fill="#30aaa0"/>
<rect x="444" y="1058" width="1" height="3" fill="#1a4ec4"/>
<rect x="416" y="1092" width="1" height="2" fill="#1a4ec4"/>
<rect x="432" y="1054" width="1" height="2" fill="#2a86d0"/>
<rect x="451" y="1100" width="1" height="3" fill="#1890b8"/>
<rect x="434" y="1050" width="1" height="2" fill="#30aaa0"/>
<rect x="408" y="1088" width="1" height="3" fill="#1a4ec4"/>
<rect x="403" y="1055" width="1" height="2" fill="#6cc040"/>
<rect x="406" y="1094" width="1" height="3" fill="#2060d8"/>
<rect x="441" y="1054" width="1" height="3" fill="#6cc040"/>
<rect x="420" y="1070" width="1" height="2" fill="#1a4ec4"/>
<rect x="419" y="1095" width="1" height="3" fill="#1a4ec4"/>
<rect x="452" y="1041" width="1" height="2" fill="#2060d8"/>
<rect x="414" y="1093" width="1" height="3" fill="#1a4ec4"/>
<rect x="443" y="1059" width="1" height="2" fill="#2a86d0"/>
<rect x="421" y="1097" width="1" height="2" fill="#1a4ec4"/>
<rect x="415" y="1058" width="1" height="2" fill="#1c62c8"/>
<rect x="431" y="1058" width="1" height="2" fill="#2a86d0"/>
<rect x="435" y="1054" width="1" height="2" fill="#2a86d0"/>
<rect x="440" y="1057" width="1" height="2" fill="#1a4ec4"/>
<rect x="427" y="1072" width="1" height="2" fill="#2060d8"/>
<rect x="436" y="1057" width="1" height="2" fill="#2a86d0"/>
<rect x="412" y="1099" width="1" height="3" fill="#1c62c8"/>
<rect x="443" y="1042" width="1" height="2" fill="#2456d0"/>
<rect x="437" y="1095" width="1" height="3" fill="#6cc040"/>
<rect x="406" y="1044" width="1" height="3" fill="#1890b8"/>
<rect x="446" y="1071" width="1" height="2" fill="#2060d8"/>
<rect x="436" y="1086" width="1" height="2" fill="#1a4ec4"/>
<rect x="440" y="1073" width="1" height="2" fill="#2a86d0"/>
<rect x="417" y="1073" width="1" height="2" fill="#1a4ec4"/>
<rect x="436" y="1083" width="1" height="2" fill="#1a4ec4"/>
<rect x="421" y="1076" width="1" height="3" fill="#1a4ec4"/>
<rect x="443" y="1091" width="1" height="2" fill="#1a4ec4"/>
<rect x="434" y="1073" width="1" height="2" fill="#1c62c8"/>
<rect x="420" y="1043" width="1" height="3" fill="#1890b8"/>
<rect x="445" y="1070" width="1" height="3" fill="#2060d8"/>
<rect x="417" y="1070" width="1" height="3" fill="#1a4ec4"/>
<rect x="429" y="1082" width="1" height="2" fill="#1a4ec4"/>
<rect x="411" y="1067" width="1" height="3" fill="#6cc040"/>
<rect x="452" y="1048" width="1" height="3" fill="#30aaa0"/>
<rect x="426" y="1045" width="1" height="2" fill="#1a4ec4"/>
<rect x="419" y="1047" width="1" height="2" fill="#1c62c8"/>
<rect x="454" y="1062" width="1" height="2" fill="#1890b8"/>
<rect x="405" y="1064" width="1" height="2" fill="#1a4ec4"/>
<rect x="428" y="1064" width="1" height="2" fill="#1c62c8"/>
<rect x="415" y="1061" width="1" height="2" fill="#2456d0"/>
<rect x="429" y="1064" width="1" height="3" fill="#1a4ec4"/>
<rect x="428" y="1100" width="1" height="2" fill="#2456d0"/>
<rect x="433" y="1065" width="1" height="3" fill="#1a4ec4"/>
<rect x="455" y="1077" width="1" height="3" fill="#2060d8"/>
<rect x="431" y="1074" width="1" height="3" fill="#1c62c8"/>
<rect x="406" y="1084" width="1" height="2" fill="#1890b8"/>
<rect x="443" y="1094" width="1" height="3" fill="#1a4ec4"/>
<rect x="428" y="1091" width="1" height="2" fill="#30aaa0"/>
<rect x="420" y="1076" width="1" height="2" fill="#1a4ec4"/>
<rect x="431" y="1048" width="1" height="3" fill="#1c62c8"/>
<rect x="429" y="1082" width="1" height="3" fill="#2060d8"/>
<rect x="420" y="1067" width="1" height="2" fill="#30aaa0"/>
<rect x="449" y="1072" width="1" height="3" fill="#1a4ec4"/>
<rect x="431" y="1061" width="1" height="3" fill="#1a4ec4"/>
<rect x="437" y="1048" width="1" height="3" fill="#1a4ec4"/>
<rect x="434" y="1089" width="1" height="2" fill="#2a86d0"/>
<rect x="454" y="1053" width="1" height="3" fill="#1890b8"/>
<rect x="416" y="1078" width="1" height="2" fill="#1a4ec4"/>
<rect x="425" y="1044" width="1" height="3" fill="#30aaa0"/>
<rect x="430" y="1057" width="1" height="2" fill="#2456d0"/>
<rect x="429" y="1050" width="1" height="3" fill="#1c62c8"/>
<rect x="453" y="1088" width="1" height="3" fill="#1a4ec4"/>
<rect x="442" y="1041" width="1" height="2" fill="#30aaa0"/>
<rect x="453" y="1056" width="1" height="3" fill="#30aaa0"/>
<rect x="429" y="1060" width="1" height="2" fill="#2a86d0"/>
<rect x="422" y="1094" width="1" height="2" fill="#2a86d0"/>
<rect x="438" y="1063" width="1" height="3" fill="#1890b8"/>
<rect x="405" y="1082" width="1" height="2" fill="#1c62c8"/>
<rect x="437" y="1065" width="1" height="2" fill="#30aaa0"/>
<rect x="449" y="1093" width="1" height="3" fill="#30aaa0"/>
<rect x="405" y="1048" width="1" height="3" fill="#2060d8"/>
<rect x="423" y="1099" width="1" height="3" fill="#2456d0"/>
<rect x="416" y="1081" width="1" height="3" fill="#1c62c8"/>
<rect x="403" y="1073" width="1" height="3" fill="#2060d8"/>
<rect x="418" y="1046" width="1" height="2" fill="#1a4ec4"/>
<rect x="441" y="1081" width="1" height="2" fill="#1c62c8"/>
<rect x="421" y="1081" width="1" height="3" fill="#2a86d0"/>
<rect x="423" y="1080" width="1" height="2" fill="#1a4ec4"/>
<rect x="423" y="1082" width="1" height="2" fill="#2060d8"/>
<rect x="457" y="1089" width="1" height="3" fill="#2a86d0"/>
<rect x="431" y="1081" width="1" height="3" fill="#1a4ec4"/>
<rect x="451" y="1043" width="1" height="3" fill="#2a86d0"/>
<rect x="417" y="1078" width="1" height="3" fill="#1890b8"/>
<rect x="413" y="1091" width="1" height="2" fill="#1c62c8"/>
<rect x="434" y="1065" width="1" height="3" fill="#2456d0"/>
<rect x="447" y="1048" width="1" height="3" fill="#30aaa0"/>
<rect x="416" y="1051" width="1" height="2" fill="#1a4ec4"/>
<rect x="418" y="1056" width="1" height="3" fill="#2a86d0"/>
<rect x="424" y="1081" width="1" height="2" fill="#2456d0"/>
<rect x="451" y="1052" width="1" height="2" fill="#1890b8"/>
<rect x="425" y="1094" width="1" height="2" fill="#2060d8"/>
<rect x="424" y="1059" width="1" height="3" fill="#2a86d0"/>
<rect x="445" y="1099" width="1" height="2" fill="#30aaa0"/>
<rect x="433" y="1088" width="1" height="2" fill="#2456d0"/>
<rect x="434" y="1094" width="1" height="2" fill="#1a4ec4"/>
<rect x="421" y="1041" width="1" height="3" fill="#2456d0"/>
<rect x="418" y="1054" width="1" height="3" fill="#1a4ec4"/>
<rect x="434" y="1049" width="1" height="3" fill="#1a4ec4"/>
<rect x="440" y="1040" width="1" height="2" fill="#1890b8"/>
<rect x="458" y="1065" width="1" height="3" fill="#1a4ec4"/>
<rect x="434" y="1053" width="1" height="3" fill="#2a86d0"/>
<rect x="451" y="1100" width="1" height="2" fill="#1a4ec4"/>
<rect x="413" y="1042" width="1" height="2" fill="#2456d0"/>
<rect x="418" y="1041" width="1" height="3" fill="#2060d8"/>
<rect x="404" y="1053" width="1" height="3" fill="#6cc040"/>
<rect x="448" y="1088" width="1" height="2" fill="#1a4ec4"/>
<rect x="454" y="1069" width="1" height="2" fill="#30aaa0"/>
<rect x="404" y="1048" width="1" height="3" fill="#1890b8"/>
<rect x="431" y="1057" width="1" height="3" fill="#1890b8"/>
<rect x="422" y="1057" width="1" height="3" fill="#1890b8"/>
<rect x="421" y="1084" width="1" height="2" fill="#1c62c8"/>
<rect x="433" y="1081" width="1" height="2" fill="#2456d0"/>
<rect x="411" y="1061" width="1" height="3" fill="#6cc040"/>
<rect x="431" y="1064" width="1" height="2" fill="#1890b8"/>
<rect x="404" y="1050" width="1" height="2" fill="#1a4ec4"/>
<rect x="435" y="1059" width="1" height="2" fill="#1a4ec4"/>
<rect x="430" y="1087" width="1" height="2" fill="#2456d0"/>
<rect x="440" y="1097" width="1" height="3" fill="#1890b8"/>
<rect x="432" y="1041" width="1" height="2" fill="#30aaa0"/>
<rect x="415" y="1148" width="1" height="3" fill="#1a4ec4"/>
<rect x="431" y="1144" width="1" height="3" fill="#1a4ec4"/>
<rect x="427" y="1136" width="1" height="3" fill="#30aaa0"/>
<rect x="436" y="1145" width="1" height="3" fill="#2060d8"/>
<rect x="428" y="1146" width="1" height="2" fill="#1a4ec4"/>
<rect x="433" y="1126" width="1" height="3" fill="#2a86d0"/>
<rect x="413" y="1137" width="1" height="2" fill="#2060d8"/>
<rect x="444" y="1170" width="1" height="2" fill="#1a4ec4"/>
<rect x="449" y="1162" width="1" height="3" fill="#2060d8"/>
<rect x="407" y="1168" width="1" height="3" fill="#1890b8"/>
<rect x="428" y="1142" width="1" height="3" fill="#30aaa0"/>
<rect x="456" y="1119" width="1" height="3" fill="#1a4ec4"/>
<rect x="451" y="1106" width="1" height="2" fill="#1a4ec4"/>
<rect x="447" y="1112" width="1" height="3" fill="#1890b8"/>
<rect x="405" y="1127" width="1" height="2" fill="#1c62c8"/>
<rect x="426" y="1148" width="1" height="3" fill="#1a4ec4"/>
<rect x="453" y="1106" width="1" height="3" fill="#1c62c8"/>
<rect x="451" y="1157" width="1" height="3" fill="#1c62c8"/>
<rect x="424" y="1164" width="1" height="3" fill="#1890b8"/>
<rect x="439" y="1116" width="1" height="2" fill="#1c62c8"/>
<rect x="412" y="1145" width="1" height="2" fill="#1a4ec4"/>
<rect x="417" y="1127" width="1" height="2" fill="#1890b8"/>
<rect x="458" y="1154" width="1" height="3" fill="#1890b8"/>
<rect x="414" y="1106" width="1" height="3" fill="#2a86d0"/>
<rect x="418" y="1110" width="1" height="3" fill="#1a4ec4"/>
<rect x="431" y="1133" width="1" height="3" fill="#1a4ec4"/>
<rect x="410" y="1168" width="1" height="3" fill="#1a4ec4"/>
<rect x="415" y="1137" width="1" height="2" fill="#1c62c8"/>
<rect x="428" y="1105" width="1" height="3" fill="#30aaa0"/>
<rect x="439" y="1121" width="1" height="2" fill="#1a4ec4"/>
<rect x="404" y="1129" width="1" height="3" fill="#2a86d0"/>
<rect x="422" y="1164" width="1" height="2" fill="#1a4ec4"/>
<rect x="428" y="1116" width="1" height="2" fill="#6cc040"/>
<rect x="443" y="1152" width="1" height="2" fill="#1890b8"/>
<rect x="440" y="1112" width="1" height="3" fill="#1a4ec4"/>
<rect x="431" y="1137" width="1" height="2" fill="#1a4ec4"/>
<rect x="458" y="1131" width="1" height="2" fill="#1c62c8"/>
<rect x="458" y="1105" width="1" height="2" fill="#1a4ec4"/>
<rect x="431" y="1146" width="1" height="2" fill="#1a4ec4"/>
<rect x="431" y="1107" width="1" height="3" fill="#6cc040"/>
<rect x="439" y="1176" width="1" height="2" fill="#1a4ec4"/>
<rect x="427" y="1112" width="1" height="2" fill="#1890b8"/>
<rect x="409" y="1132" width="1" height="2" fill="#2060d8"/>
<rect x="446" y="1107" width="1" height="2" fill="#2060d8"/>
<rect x="434" y="1110" width="1" height="3" fill="#1a4ec4"/>
<rect x="419" y="1161" width="1" height="3" fill="#1c62c8"/>
<rect x="406" y="1117" width="1" height="2" fill="#1a4ec4"/>
<rect x="428" y="1166" width="1" height="2" fill="#1a4ec4"/>
<rect x="411" y="1144" width="1" height="2" fill="#2456d0"/>
<rect x="426" y="1101" width="1" height="2" fill="#2456d0"/>
<rect x="443" y="1156" width="1" height="2" fill="#2456d0"/>
<rect x="425" y="1138" width="1" height="2" fill="#2060d8"/>
<rect x="424" y="1123" width="1" height="2" fill="#1c62c8"/>
<rect x="439" y="1133" width="1" height="2" fill="#1a4ec4"/>
<rect x="434" y="1139" width="1" height="3" fill="#1a4ec4"/>
<rect x="418" y="1147" width="1" height="3" fill="#1c62c8"/>
<rect x="447" y="1130" width="1" height="2" fill="#30aaa0"/>
<rect x="406" y="1165" width="1" height="3" fill="#1a4ec4"/>
<rect x="433" y="1131" width="1" height="3" fill="#1c62c8"/>
<rect x="405" y="1128" width="1" height="3" fill="#1c62c8"/>
<rect x="443" y="1129" width="1" height="3" fill="#6cc040"/>
<rect x="456" y="1129" width="1" height="2" fill="#1890b8"/>
<rect x="437" y="1146" width="1" height="2" fill="#1890b8"/>
<rect x="431" y="1159" width="1" height="2" fill="#1a4ec4"/>
<rect x="417" y="1121" width="1" height="3" fill="#30aaa0"/>
<rect x="425" y="1122" width="1" height="2" fill="#1a4ec4"/>
<rect x="449" y="1126" width="1" height="2" fill="#1890b8"/>
<rect x="446" y="1150" width="1" height="3" fill="#1a4ec4"/>
<rect x="406" y="1149" width="1" height="3" fill="#2060d8"/>
<rect x="438" y="1102" width="1" height="2" fill="#1c62c8"/>
<rect x="448" y="1137" width="1" height="2" fill="#1890b8"/>
<rect x="412" y="1107" width="1" height="3" fill="#2456d0"/>
<rect x="440" y="1162" width="1" height="2" fill="#1a4ec4"/>
<rect x="449" y="1175" width="1" height="2" fill="#1890b8"/>
<rect x="442" y="1131" width="1" height="2" fill="#2060d8"/>
<rect x="408" y="1125" width="1" height="2" fill="#2456d0"/>
<rect x="412" y="1121" width="1" height="3" fill="#6cc040"/>
<rect x="454" y="1116" width="1" height="3" fill="#1a4ec4"/>
<rect x="431" y="1138" width="1" height="2" fill="#2060d8"/>
<rect x="446" y="1125" width="1" height="2" fill="#1a4ec4"/>
<rect x="439" y="1129" width="1" height="3" fill="#2060d8"/>
<rect x="435" y="1166" width="1" height="2" fill="#1890b8"/>
<rect x="429" y="1176" width="1" height="3" fill="#1890b8"/>
<rect x="416" y="1120" width="1" height="3" fill="#30aaa0"/>
<rect x="454" y="1163" width="1" height="2" fill="#2a86d0"/>
<rect x="427" y="1148" width="1" height="3" fill="#2060d8"/>
<rect x="453" y="1136" width="1" height="2" fill="#1a4ec4"/>
<rect x="444" y="1108" width="1" height="2" fill="#2a86d0"/>
<rect x="405" y="1154" width="1" height="3" fill="#2456d0"/>
<rect x="430" y="1135" width="1" height="2" fill="#1890b8"/>
<rect x="417" y="1112" width="1" height="3" fill="#1c62c8"/>
<rect x="410" y="1160" width="1" height="3" fill="#2456d0"/>
<rect x="441" y="1128" width="1" height="3" fill="#2a86d0"/>
<rect x="409" y="1128" width="1" height="3" fill="#2456d0"/>
<rect x="440" y="1122" width="1" height="3" fill="#2060d8"/>
<rect x="407" y="1102" width="1" height="2" fill="#2a86d0"/>
<rect x="451" y="1112" width="1" height="2" fill="#2060d8"/>
<rect x="433" y="1157" width="1" height="3" fill="#2060d8"/>
<rect x="420" y="1133" width="1" height="2" fill="#1890b8"/>
<rect x="429" y="1154" width="1" height="3" fill="#1890b8"/>
<rect x="434" y="1127" width="1" height="2" fill="#1c62c8"/>
<rect x="435" y="1172" width="1" height="2" fill="#1a4ec4"/>
<rect x="409" y="1144" width="1" height="3" fill="#1a4ec4"/>
<rect x="420" y="1168" width="1" height="2" fill="#1a4ec4"/>
<rect x="411" y="1132" width="1" height="2" fill="#2456d0"/>
<rect x="427" y="1153" width="1" height="3" fill="#1a4ec4"/>
<rect x="437" y="1172" width="1" height="3" fill="#1a4ec4"/>
<rect x="414" y="1154" width="1" height="2" fill="#1a4ec4"/>
<rect x="410" y="1123" width="1" height="3" fill="#1890b8"/>
<rect x="455" y="1176" width="1" height="2" fill="#2456d0"/>
<rect x="436" y="1162" width="1" height="2" fill="#1890b8"/>
<rect x="445" y="1112" width="1" height="3" fill="#1a4ec4"/>
<rect x="451" y="1175" width="1" height="2" fill="#1a4ec4"/>
<rect x="449" y="1154" width="1" height="2" fill="#2060d8"/>
<rect x="403" y="1105" width="1" height="2" fill="#1c62c8"/>
<rect x="425" y="1126" width="1" height="2" fill="#1890b8"/>
<rect x="417" y="1146" width="1" height="3" fill="#2060d8"/>
<rect x="428" y="1118" width="1" height="2" fill="#30aaa0"/>
<rect x="415" y="1135" width="1" height="3" fill="#1c62c8"/>
<rect x="413" y="1153" width="1" height="3" fill="#2a86d0"/>
<rect x="435" y="1102" width="1" height="3" fill="#2a86d0"/>
<rect x="431" y="1158" width="1" height="2" fill="#1c62c8"/>
<rect x="433" y="1106" width="1" height="2" fill="#2060d8"/>
<rect x="405" y="1143" width="1" height="3" fill="#2456d0"/>
<rect x="407" y="1106" width="1" height="3" fill="#30aaa0"/>
<rect x="446" y="1161" width="1" height="2" fill="#1890b8"/>
<rect x="424" y="1122" width="1" height="2" fill="#1a4ec4"/>
<rect x="406" y="1103" width="1" height="2" fill="#1a4ec4"/>
<rect x="411" y="1116" width="1" height="3" fill="#1a4ec4"/>
<rect x="422" y="1173" width="1" height="3" fill="#2456d0"/>
<rect x="455" y="1115" width="1" height="2" fill="#2456d0"/>
<rect x="452" y="1157" width="1" height="2" fill="#1a4ec4"/>
<rect x="454" y="1111" width="1" height="3" fill="#1a4ec4"/>
<rect x="440" y="1110" width="1" height="2" fill="#1890b8"/>
<rect x="418" y="1141" width="1" height="3" fill="#1a4ec4"/>
<rect x="455" y="1106" width="1" height="3" fill="#6cc040"/>
<rect x="457" y="1173" width="1" height="3" fill="#2060d8"/>
<rect x="438" y="1108" width="1" height="3" fill="#1a4ec4"/>
<rect x="422" y="1178" width="1" height="2" fill="#1a4ec4"/>
<rect x="411" y="1137" width="1" height="3" fill="#1a4ec4"/>
<rect x="433" y="1122" width="1" height="2" fill="#1a4ec4"/>
<rect x="456" y="1102" width="1" height="3" fill="#30aaa0"/>
<rect x="437" y="1105" width="1" height="2" fill="#1a4ec4"/>
<rect x="412" y="1176" width="1" height="3" fill="#1890b8"/>
<rect x="441" y="1120" width="1" height="2" fill="#1890b8"/>
<rect x="452" y="1145" width="1" height="3" fill="#30aaa0"/>
<rect x="417" y="1174" width="1" height="2" fill="#1a4ec4"/>
<rect x="429" y="1144" width="1" height="3" fill="#2a86d0"/>
<rect x="416" y="1146" width="1" height="3" fill="#2456d0"/>
<rect x="419" y="1108" width="1" height="2" fill="#1a4ec4"/>
<rect x="430" y="1172" width="1" height="2" fill="#2060d8"/>
<rect x="439" y="1131" width="1" height="3" fill="#1a4ec4"/>
<rect x="406" y="1125" width="1" height="2" fill="#1a4ec4"/>
<rect x="456" y="1122" width="1" height="3" fill="#1a4ec4"/>
<rect x="447" y="1118" width="1" height="3" fill="#30aaa0"/>
<rect x="414" y="1149" width="1" height="2" fill="#1a4ec4"/>
<rect x="455" y="1138" width="1" height="3" fill="#1a4ec4"/>
<rect x="449" y="1139" width="1" height="2" fill="#1890b8"/>
<rect x="441" y="1135" width="1" height="2" fill="#2a86d0"/>
<rect x="441" y="1162" width="1" height="2" fill="#2a86d0"/>
<rect x="409" y="1137" width="1" height="2" fill="#1c62c8"/>
<rect x="456" y="1151" width="1" height="3" fill="#1a4ec4"/>
<rect x="454" y="1150" width="1" height="2" fill="#1a4ec4"/>
<rect x="409" y="1177" width="1" height="2" fill="#30aaa0"/>
<rect x="437" y="1160" width="1" height="2" fill="#2a86d0"/>
<rect x="444" y="1152" width="1" height="3" fill="#30aaa0"/>
<rect x="446" y="1168" width="1" height="3" fill="#2a86d0"/>
<rect x="415" y="1155" width="1" height="2" fill="#6cc040"/>
<rect x="430" y="1176" width="1" height="2" fill="#1c62c8"/>
<rect x="441" y="1140" width="1" height="2" fill="#1890b8"/>
<rect x="404" y="1121" width="1" height="2" fill="#1a4ec4"/>
<rect x="453" y="1123" width="1" height="2" fill="#2a86d0"/>
<rect x="421" y="1122" width="1" height="2" fill="#2060d8"/>
<rect x="405" y="1167" width="1" height="2" fill="#2060d8"/>
<rect x="419" y="1173" width="1" height="3" fill="#1890b8"/>
<rect x="425" y="1127" width="1" height="3" fill="#1890b8"/>
<rect x="415" y="1172" width="1" height="2" fill="#1a4ec4"/>
<rect x="410" y="1134" width="1" height="3" fill="#30aaa0"/>
<rect x="435" y="1133" width="1" height="2" fill="#1a4ec4"/>
<rect x="413" y="1177" width="1" height="3" fill="#2456d0"/>
<rect x="446" y="1146" width="1" height="2" fill="#1890b8"/>
<rect x="442" y="1136" width="1" height="3" fill="#30aaa0"/>
<rect x="414" y="1120" width="1" height="2" fill="#1a4ec4"/>
<rect x="418" y="1154" width="1" height="3" fill="#1a4ec4"/>
<rect x="430" y="1161" width="1" height="2" fill="#1c62c8"/>
<rect x="440" y="1148" width="1" height="2" fill="#1a4ec4"/>
<rect x="416" y="1144" width="1" height="2" fill="#6cc040"/>
<rect x="444" y="1157" width="1" height="2" fill="#1a4ec4"/>
<rect x="450" y="1138" width="1" height="2" fill="#1890b8"/>
<rect x="421" y="1102" width="1" height="3" fill="#2060d8"/>
<rect x="451" y="1115" width="1" height="3" fill="#1a4ec4"/>
<rect x="428" y="1129" width="1" height="3" fill="#30aaa0"/>
<rect x="420" y="1149" width="1" height="2" fill="#30aaa0"/>
<rect x="428" y="1137" width="1" height="3" fill="#2060d8"/>
<rect x="440" y="1139" width="1" height="2" fill="#30aaa0"/>
<rect x="444" y="1123" width="1" height="3" fill="#1a4ec4"/>
<rect x="415" y="1160" width="1" height="3" fill="#2060d8"/>
<rect x="434" y="1131" width="1" height="3" fill="#30aaa0"/>
<rect x="417" y="1148" width="1" height="3" fill="#1c62c8"/>
<rect x="458" y="1115" width="1" height="2" fill="#30aaa0"/>
<rect x="448" y="1165" width="1" height="3" fill="#30aaa0"/>
<rect x="444" y="1145" width="1" height="3" fill="#2a86d0"/>
<rect x="433" y="1177" width="1" height="3" fill="#2456d0"/>
<rect x="448" y="1140" width="1" height="3" fill="#1a4ec4"/>
<rect x="432" y="1139" width="1" height="3" fill="#2456d0"/>
<rect x="439" y="1123" width="1" height="2" fill="#30aaa0"/>
<rect x="436" y="1136" width="1" height="3" fill="#2060d8"/>
<rect x="434" y="1174" width="1" height="2" fill="#1890b8"/>
<rect x="407" y="1123" width="1" height="2" fill="#2456d0"/>
<rect x="424" y="1121" width="1" height="2" fill="#1890b8"/>
<rect x="433" y="1131" width="1" height="3" fill="#30aaa0"/>
<rect x="437" y="1165" width="1" height="2" fill="#1c62c8"/>
<rect x="409" y="1107" width="1" height="3" fill="#1a4ec4"/>
<rect x="404" y="1104" width="1" height="3" fill="#1a4ec4"/>
<rect x="450" y="1116" width="1" height="3" fill="#1890b8"/>
<rect x="448" y="1171" width="1" height="2" fill="#1a4ec4"/>
<rect x="427" y="1163" width="1" height="3" fill="#2a86d0"/>
<rect x="415" y="1117" width="1" height="3" fill="#1890b8"/>
<rect x="446" y="1169" width="1" height="2" fill="#2456d0"/>
<rect x="429" y="1147" width="1" height="3" fill="#1890b8"/>
<rect x="451" y="1118" width="1" height="3" fill="#1890b8"/>
<rect x="443" y="1104" width="1" height="2" fill="#1a4ec4"/>
<rect x="408" y="1103" width="1" height="3" fill="#1890b8"/>
<rect x="436" y="1167" width="1" height="3" fill="#1a4ec4"/>
<rect x="404" y="1154" width="1" height="2" fill="#2456d0"/>
<rect x="440" y="1154" width="1" height="3" fill="#1890b8"/>
<rect x="415" y="1102" width="1" height="2" fill="#1c62c8"/>
<rect x="454" y="1123" width="1" height="3" fill="#6cc040"/>
<rect x="426" y="1113" width="1" height="2" fill="#2456d0"/>
<rect x="429" y="1140" width="1" height="3" fill="#2a86d0"/>
<rect x="441" y="1139" width="1" height="3" fill="#30aaa0"/>
<rect x="431" y="1137" width="1" height="2" fill="#2060d8"/>
<rect x="419" y="1123" width="1" height="2" fill="#6cc040"/>
<rect x="437" y="1122" width="1" height="3" fill="#1c62c8"/>
<rect x="441" y="1158" width="1" height="2" fill="#1a4ec4"/>
<rect x="451" y="1177" width="1" height="2" fill="#1c62c8"/>
<rect x="432" y="1126" width="1" height="3" fill="#30aaa0"/>
<rect x="405" y="1123" width="1" height="2" fill="#1890b8"/>
<rect x="432" y="1109" width="1" height="2" fill="#2456d0"/>
<rect x="428" y="1177" width="1" height="2" fill="#30aaa0"/>
<rect x="435" y="1114" width="1" height="2" fill="#1a4ec4"/>
<rect x="440" y="1117" width="1" height="3" fill="#1a4ec4"/>
<rect x="457" y="1172" width="1" height="2" fill="#6cc040"/>
<rect x="436" y="1119" width="1" height="2" fill="#2a86d0"/>
<rect x="457" y="1114" width="1" height="2" fill="#1c62c8"/>
<rect x="445" y="1104" width="1" height="2" fill="#1a4ec4"/>
<rect x="447" y="1149" width="1" height="3" fill="#2456d0"/>
<rect x="447" y="1170" width="1" height="2" fill="#2456d0"/>
<rect x="437" y="1173" width="1" height="3" fill="#1a4ec4"/>
<rect x="424" y="1164" width="1" height="2" fill="#2a86d0"/>
<rect x="426" y="1151" width="1" height="3" fill="#1a4ec4"/>
<rect x="418" y="1116" width="1" height="2" fill="#1a4ec4"/>
<rect x="441" y="1130" width="1" height="3" fill="#1a4ec4"/>
<rect x="454" y="1125" width="1" height="3" fill="#1a4ec4"/>
<rect x="435" y="1110" width="1" height="2" fill="#2a86d0"/>
<rect x="423" y="1148" width="1" height="2" fill="#2060d8"/>
<rect x="455" y="1150" width="1" height="2" fill="#2456d0"/>
<rect x="430" y="1160" width="1" height="3" fill="#1c62c8"/>
<rect x="443" y="1106" width="1" height="3" fill="#1a4ec4"/>
<rect x="429" y="1166" width="1" height="3" fill="#30aaa0"/>
<rect x="443" y="1104" width="1" height="2" fill="#1a4ec4"/>
<rect x="437" y="1170" width="1" height="3" fill="#1c62c8"/>
<rect x="411" y="1156" width="1" height="2" fill="#2456d0"/>
<rect x="436" y="1118" width="1" height="2" fill="#2456d0"/>
<rect x="427" y="1106" width="1" height="2" fill="#2060d8"/>
<rect x="448" y="1162" width="1" height="2" fill="#30aaa0"/>
<rect x="424" y="1137" width="1" height="2" fill="#1a4ec4"/>
<rect x="414" y="1126" width="1" height="3" fill="#1a4ec4"/>
<rect x="419" y="1122" width="1" height="3" fill="#2456d0"/>
<rect x="454" y="1108" width="1" height="3" fill="#1a4ec4"/>
<rect x="425" y="1190" width="1" height="2" fill="#1a4ec4"/>
<rect x="441" y="1192" width="1" height="2" fill="#1890b8"/>
<rect x="438" y="1180" width="1" height="3" fill="#30aaa0"/>
<rect x="439" y="1189" width="1" height="3" fill="#2a86d0"/>
<rect x="442" y="1193" width="1" height="3" fill="#2456d0"/>
<rect x="438" y="1180" width="1" height="3" fill="#1a4ec4"/>
<rect x="422" y="1193" width="1" height="3" fill="#30aaa0"/>
<rect x="443" y="1192" width="1" height="3" fill="#1a4ec4"/>
<rect x="435" y="1188" width="1" height="2" fill="#2060d8"/>
<rect x="429" y="1188" width="1" height="2" fill="#1a4ec4"/>
<rect x="441" y="1188" width="1" height="2" fill="#1a4ec4"/>
<rect x="415" y="1189" width="1" height="2" fill="#1c62c8"/>
<rect x="445" y="1192" width="1" height="3" fill="#30aaa0"/>
<rect x="423" y="1190" width="1" height="2" fill="#1a4ec4"/>
<rect x="454" y="1188" width="1" height="2" fill="#1c62c8"/>
<rect x="444" y="1185" width="1" height="2" fill="#2456d0"/>
<rect x="438" y="1189" width="1" height="2" fill="#1a4ec4"/>
<rect x="418" y="1189" width="1" height="3" fill="#2a86d0"/>
<rect x="451" y="1184" width="1" height="2" fill="#1a4ec4"/>
<rect x="434" y="1180" width="1" height="2" fill="#2456d0"/>
<rect x="436" y="1180" width="1" height="3" fill="#1890b8"/>
<rect x="443" y="1190" width="1" height="2" fill="#30aaa0"/>
<rect x="452" y="1189" width="1" height="3" fill="#1890b8"/>
<rect x="441" y="1185" width="1" height="3" fill="#1a4ec4"/>
<rect x="434" y="1193" width="1" height="2" fill="#2456d0"/>
<rect x="437" y="1184" width="1" height="3" fill="#1890b8"/>
<rect x="415" y="1188" width="1" height="3" fill="#30aaa0"/>
<rect x="456" y="1189" width="1" height="3" fill="#30aaa0"/>
<rect x="416" y="1180" width="1" height="2" fill="#30aaa0"/>
<rect x="432" y="1187" width="1" height="2" fill="#1a4ec4"/>
<rect x="432" y="1183" width="1" height="2" fill="#1890b8"/>
<rect x="446" y="1178" width="1" height="2" fill="#2456d0"/>
<rect x="419" y="1180" width="1" height="2" fill="#1a4ec4"/>
<rect x="422" y="1185" width="1" height="2" fill="#1a4ec4"/>
<rect x="427" y="1180" width="1" height="2" fill="#1a4ec4"/>
<rect x="457" y="1183" width="1" height="2" fill="#30aaa0"/>
<rect x="450" y="1193" width="1" height="3" fill="#2456d0"/>
<rect x="426" y="1185" width="1" height="2" fill="#1a4ec4"/>
<rect x="456" y="1188" width="1" height="3" fill="#1890b8"/>
<rect x="454" y="1191" width="1" height="2" fill="#1a4ec4"/>
<rect x="418" y="1187" width="1" height="2" fill="#2060d8"/>
<rect x="420" y="1186" width="1" height="3" fill="#2456d0"/>
<rect x="447" y="1183" width="1" height="2" fill="#30aaa0"/>
<rect x="433" y="1180" width="1" height="2" fill="#1a4ec4"/>
<rect x="450" y="1186" width="1" height="3" fill="#1a4ec4"/>
<rect x="393" y="1202" width="1" height="3" fill="#90c830"/>
<rect x="394" y="1204" width="1" height="3" fill="#e0c020"/>
<rect x="397" y="1196" width="1" height="3" fill="#2a86d0"/>
<rect x="403" y="1182" width="1" height="3" fill="#30b080"/>
<rect x="400" y="1187" width="1" height="3" fill="#2a86d0"/>
<rect x="399" y="1189" width="1" height="3" fill="#90c830"/>
<rect x="402" y="1182" width="1" height="3" fill="#30b080"/>
<rect x="395" y="1198" width="1" height="3" fill="#30b080"/>
<rect x="404" y="1177" width="1" height="3" fill="#2a86d0"/>
<rect x="399" y="1190" width="1" height="3" fill="#90c830"/>
<rect x="404" y="1179" width="1" height="3" fill="#30b080"/>
<rect x="398" y="1193" width="1" height="3" fill="#e0c020"/>
<rect x="395" y="1202" width="1" height="3" fill="#2a86d0"/>
<rect x="400" y="1189" width="1" height="3" fill="#2a86d0"/>
<rect x="403" y="1182" width="1" height="3" fill="#2a86d0"/>
<rect x="401" y="1183" width="1" height="3" fill="#2a86d0"/>
<rect x="398" y="1189" width="1" height="3" fill="#e0c020"/>
<rect x="393" y="1206" width="1" height="3" fill="#30b080"/>
<rect x="395" y="1199" width="1" height="3" fill="#e0c020"/>
<rect x="396" y="1194" width="1" height="3" fill="#e0c020"/>
<rect x="397" y="1192" width="1" height="3" fill="#90c830"/>
<rect x="396" y="1198" width="1" height="3" fill="#30b080"/>
<rect x="304" y="1199" width="1" height="2" fill="#e0b020"/>
<rect x="310" y="1200" width="1" height="2" fill="#e0b020"/>
<rect x="310" y="1200" width="1" height="2" fill="#e08040"/>
<rect x="401" y="1204" width="1" height="2" fill="#e08040"/>
<rect x="397" y="1203" width="1" height="2" fill="#f0e020"/>
<rect x="343" y="1190" width="1" height="2" fill="#30c070"/>
<rect x="308" y="1201" width="1" height="2" fill="#2a86d0"/>
<rect x="380" y="1203" width="1" height="2" fill="#d0d020"/>
<rect x="300" y="1205" width="1" height="2" fill="#f0e020"/>
<rect x="386" y="1202" width="1" height="2" fill="#e08040"/>
<rect x="303" y="1205" width="1" height="2" fill="#80c830"/>
<rect x="353" y="1200" width="1" height="2" fill="#20b090"/>
<rect x="302" y="1203" width="1" height="2" fill="#2a86d0"/>
<rect x="290" y="1201" width="1" height="2" fill="#e0b020"/>
<rect x="391" y="1205" width="1" height="2" fill="#20b090"/>
<rect x="320" y="1199" width="1" height="2" fill="#80c830"/>
<rect x="336" y="1201" width="1" height="2" fill="#30c070"/>
<rect x="338" y="1206" width="1" height="2" fill="#f0e020"/>
<rect x="366" y="1206" width="1" height="2" fill="#80c830"/>
<rect x="357" y="1195" width="1" height="2" fill="#1a4ec4"/>
<rect x="290" y="1197" width="1" height="2" fill="#1a4ec4"/>
<rect x="360" y="1196" width="1" height="2" fill="#1a4ec4"/>
<rect x="310" y="1199" width="1" height="2" fill="#d0d020"/>
<rect x="395" y="1205" width="1" height="2" fill="#e0b020"/>
<rect x="331" y="1202" width="1" height="2" fill="#e0b020"/>
<rect x="392" y="1204" width="1" height="2" fill="#80c830"/>
<rect x="392" y="1206" width="1" height="2" fill="#e08040"/>
<rect x="363" y="1203" width="1" height="2" fill="#20b090"/>
<rect x="339" y="1202" width="1" height="2" fill="#d0d020"/>
<rect x="377" y="1203" width="1" height="2" fill="#20b090"/>
<rect x="399" y="1203" width="1" height="2" fill="#80c830"/>
<rect x="295" y="1203" width="1" height="2" fill="#20b090"/>
<rect x="394" y="1204" width="1" height="2" fill="#2a86d0"/>
<rect x="365" y="1205" width="1" height="2" fill="#20b090"/>
<rect x="293" y="1203" width="1" height="2" fill="#20b090"/>
<rect x="303" y="1199" width="1" height="2" fill="#f0e020"/>
<rect x="356" y="1189" width="1" height="2" fill="#1a4ec4"/>
<rect x="328" y="1204" width="1" height="2" fill="#20b090"/>
<rect x="292" y="1199" width="1" height="2" fill="#30c070"/>
<rect x="311" y="1199" width="1" height="2" fill="#e0b020"/>
<rect x="312" y="1203" width="1" height="2" fill="#d0d020"/>
<rect x="376" y="1203" width="1" height="2" fill="#e08040"/>
<rect x="295" y="1202" width="1" height="2" fill="#e0b020"/>
<rect x="343" y="1190" width="1" height="2" fill="#80c830"/>
<rect x="395" y="1206" width="1" height="2" fill="#e08040"/>
<rect x="357" y="1187" width="1" height="2" fill="#30c070"/>
<rect x="309" y="1197" width="1" height="2" fill="#2a86d0"/>
<rect x="394" y="1205" width="1" height="2" fill="#d0d020"/>
<rect x="324" y="1202" width="1" height="2" fill="#20b090"/>
<rect x="313" y="1198" width="1" height="2" fill="#30c070"/>
<rect x="296" y="1203" width="1" height="2" fill="#e08040"/>
<rect x="380" y="1204" width="1" height="2" fill="#e0b020"/>
<rect x="357" y="1190" width="1" height="2" fill="#30c070"/>
<rect x="336" y="1202" width="1" height="2" fill="#20b090"/>
<rect x="339" y="1202" width="1" height="2" fill="#f0e020"/>
<rect x="324" y="1204" width="1" height="2" fill="#e08040"/>
<rect x="335" y="1201" width="1" height="2" fill="#e08040"/>
<rect x="331" y="1202" width="1" height="2" fill="#f0e020"/>
<rect x="328" y="1202" width="1" height="2" fill="#2a86d0"/>
<rect x="300" y="1200" width="1" height="2" fill="#f0e020"/>
<rect x="323" y="1203" width="1" height="2" fill="#e0b020"/>
<rect x="317" y="1199" width="1" height="2" fill="#f0e020"/>
<rect x="372" y="1206" width="1" height="2" fill="#f0e020"/>
<rect x="340" y="1201" width="1" height="2" fill="#f0e020"/>
<rect x="337" y="1202" width="1" height="2" fill="#d0d020"/>
<rect x="301" y="1203" width="1" height="2" fill="#e08040"/>
<rect x="346" y="1190" width="1" height="2" fill="#2a86d0"/>
<rect x="365" y="1204" width="1" height="2" fill="#f0e020"/>
<rect x="383" y="1203" width="1" height="2" fill="#f0e020"/>
<rect x="357" y="1203" width="1" height="2" fill="#f0e020"/>
<rect x="396" y="1205" width="1" height="2" fill="#e08040"/>
<rect x="306" y="1199" width="1" height="2" fill="#d0d020"/>
<rect x="303" y="1200" width="1" height="2" fill="#2a86d0"/>
<rect x="291" y="1204" width="1" height="2" fill="#2a86d0"/>
<rect x="388" y="1203" width="1" height="2" fill="#e08040"/>
<rect x="398" y="1204" width="1" height="2" fill="#d0d020"/>
<rect x="372" y="1206" width="1" height="2" fill="#e0b020"/>
<rect x="294" y="1202" width="1" height="2" fill="#20b090"/>
<rect x="309" y="1201" width="1" height="2" fill="#2a86d0"/>
<rect x="395" y="1206" width="1" height="2" fill="#d0d020"/>
<rect x="304" y="1201" width="1" height="2" fill="#e0b020"/>
<rect x="310" y="1203" width="1" height="2" fill="#d0d020"/>
<rect x="349" y="1203" width="1" height="2" fill="#e08040"/>
<rect x="395" y="1202" width="1" height="2" fill="#30c070"/>
<rect x="369" y="1205" width="1" height="2" fill="#d0d020"/>
<rect x="358" y="1199" width="1" height="2" fill="#e08040"/>
<rect x="325" y="1206" width="1" height="2" fill="#e0b020"/>
<rect x="394" y="1202" width="1" height="2" fill="#f0e020"/>
<rect x="364" y="1206" width="1" height="2" fill="#e0b020"/>
<rect x="378" y="1202" width="1" height="2" fill="#e08040"/>
<rect x="351" y="1197" width="1" height="2" fill="#80c830"/>
<rect x="399" y="1203" width="1" height="2" fill="#d0d020"/>
<rect x="304" y="1203" width="1" height="2" fill="#e08040"/>
<rect x="397" y="1204" width="1" height="2" fill="#20b090"/>
<rect x="373" y="1205" width="1" height="2" fill="#e08040"/>
<rect x="399" y="1205" width="1" height="2" fill="#30c070"/>
<rect x="373" y="1206" width="1" height="2" fill="#f0e020"/>
<rect x="394" y="1203" width="1" height="2" fill="#20b090"/>
<rect x="353" y="1205" width="1" height="2" fill="#f0e020"/>
<rect x="295" y="1205" width="1" height="2" fill="#d0d020"/>
<rect x="295" y="1201" width="1" height="2" fill="#d0d020"/>
<rect x="386" y="1205" width="1" height="2" fill="#20b090"/>
<rect x="368" y="1205" width="1" height="2" fill="#e0b020"/>
<rect x="375" y="1204" width="1" height="2" fill="#2a86d0"/>
<rect x="342" y="1204" width="1" height="2" fill="#d0d020"/>
<rect x="340" y="1199" width="1" height="2" fill="#e0b020"/>
<rect x="308" y="1197" width="1" height="2" fill="#2a86d0"/>
<rect x="384" y="1205" width="1" height="2" fill="#2a86d0"/>
<rect x="382" y="1204" width="1" height="2" fill="#80c830"/>
<rect x="366" y="1206" width="1" height="2" fill="#80c830"/>
<rect x="372" y="1204" width="1" height="2" fill="#20b090"/>
<rect x="299" y="1200" width="1" height="2" fill="#20b090"/>
<rect x="364" y="1206" width="1" height="2" fill="#f0e020"/>
<rect x="365" y="1204" width="1" height="2" fill="#e0b020"/>
<rect x="397" y="1203" width="1" height="2" fill="#d0d020"/>
<rect x="341" y="1206" width="1" height="2" fill="#80c830"/>
<rect x="387" y="1204" width="1" height="2" fill="#20b090"/>
<rect x="297" y="1200" width="1" height="2" fill="#20b090"/>
<rect x="360" y="1186" width="1" height="2" fill="#2a86d0"/>
<rect x="386" y="1203" width="1" height="2" fill="#30c070"/>
<rect x="342" y="1198" width="1" height="2" fill="#1a4ec4"/>
<rect x="369" y="1204" width="1" height="2" fill="#20b090"/>
<rect x="297" y="1201" width="1" height="2" fill="#20b090"/>
<rect x="321" y="1200" width="1" height="2" fill="#e0b020"/>
<rect x="354" y="1191" width="1" height="2" fill="#30c070"/>
<rect x="300" y="1201" width="1" height="2" fill="#20b090"/>
<rect x="380" y="1205" width="1" height="2" fill="#30c070"/>
<rect x="355" y="1200" width="1" height="2" fill="#20b090"/>
<rect x="292" y="1203" width="1" height="2" fill="#e08040"/>
<rect x="328" y="1198" width="1" height="2" fill="#e08040"/>
<rect x="368" y="1205" width="1" height="2" fill="#2a86d0"/>
<rect x="329" y="1203" width="1" height="2" fill="#80c830"/>
<rect x="387" y="1203" width="1" height="2" fill="#f0e020"/>
<rect x="329" y="1204" width="1" height="2" fill="#e0b020"/>
<rect x="384" y="1202" width="1" height="2" fill="#80c830"/>
<rect x="383" y="1206" width="1" height="2" fill="#d0d020"/>
<rect x="358" y="1203" width="1" height="2" fill="#20b090"/>
<rect x="347" y="1201" width="1" height="2" fill="#d0d020"/>
<rect x="333" y="1205" width="1" height="2" fill="#f0e020"/>
<rect x="319" y="1204" width="1" height="2" fill="#e08040"/>
<rect x="341" y="1202" width="1" height="2" fill="#30c070"/>
<rect x="390" y="1202" width="1" height="2" fill="#e08040"/>
<rect x="391" y="1205" width="1" height="2" fill="#e0b020"/>
<rect x="344" y="1196" width="1" height="2" fill="#2a86d0"/>
<rect x="315" y="1200" width="1" height="2" fill="#f0e020"/>
<rect x="382" y="1205" width="1" height="2" fill="#d0d020"/>
<rect x="386" y="1204" width="1" height="2" fill="#d0d020"/>
<rect x="368" y="1206" width="1" height="2" fill="#f0e020"/>
<rect x="394" y="1203" width="1" height="2" fill="#e0b020"/>
<rect x="327" y="1204" width="1" height="2" fill="#2a86d0"/>
<rect x="327" y="1199" width="1" height="2" fill="#80c830"/>
<rect x="336" y="1201" width="1" height="2" fill="#e08040"/>
<rect x="387" y="1203" width="1" height="2" fill="#e08040"/>
<rect x="329" y="1199" width="1" height="2" fill="#20b090"/>
<rect x="313" y="1198" width="1" height="2" fill="#30c070"/>
<rect x="398" y="1203" width="1" height="2" fill="#d0d020"/>
<rect x="297" y="1205" width="1" height="2" fill="#f0e020"/>
<rect x="369" y="1205" width="1" height="2" fill="#2a86d0"/>
<rect x="397" y="1205" width="1" height="2" fill="#30c070"/>
<rect x="299" y="1206" width="1" height="2" fill="#f0e020"/>
<rect x="308" y="1201" width="1" height="2" fill="#2a86d0"/>
<rect x="331" y="1197" width="1" height="2" fill="#80c830"/>
<rect x="324" y="1204" width="1" height="2" fill="#2a86d0"/>
<rect x="302" y="1206" width="1" height="2" fill="#f0e020"/>
<rect x="317" y="1205" width="1" height="2" fill="#20b090"/>
<rect x="367" y="1203" width="1" height="2" fill="#30c070"/>
<rect x="317" y="1205" width="1" height="2" fill="#d0d020"/>
<rect x="393" y="1202" width="1" height="2" fill="#d0d020"/>
<rect x="296" y="1203" width="1" height="2" fill="#30c070"/>
<rect x="298" y="1203" width="1" height="2" fill="#f0e020"/>
<rect x="290" y="1198" width="1" height="2" fill="#30c070"/>
<rect x="387" y="1206" width="1" height="2" fill="#2a86d0"/>
<rect x="317" y="1198" width="1" height="2" fill="#30c070"/>
<rect x="301" y="1201" width="1" height="2" fill="#f0e020"/>
<rect x="304" y="1205" width="1" height="2" fill="#e08040"/>
<rect x="339" y="1205" width="1" height="2" fill="#2a86d0"/>
<rect x="382" y="1205" width="1" height="2" fill="#2a86d0"/>
<rect x="350" y="1192" width="1" height="2" fill="#2a86d0"/>
<rect x="368" y="1205" width="1" height="2" fill="#30c070"/>
<rect x="304" y="1198" width="1" height="2" fill="#30c070"/>
<rect x="352" y="1204" width="1" height="2" fill="#20b090"/>
<rect x="337" y="1206" width="1" height="2" fill="#e0b020"/>
<rect x="296" y="1200" width="1" height="2" fill="#d0d020"/>
<rect x="389" y="1204" width="1" height="2" fill="#30c070"/>
<rect x="309" y="1199" width="1" height="2" fill="#30c070"/>
<rect x="402" y="1205" width="1" height="2" fill="#d0d020"/>
<rect x="299" y="1199" width="1" height="2" fill="#d0d020"/>
<rect x="337" y="1197" width="1" height="2" fill="#30c070"/>
<rect x="305" y="1205" width="1" height="2" fill="#e08040"/>
<rect x="362" y="1203" width="1" height="2" fill="#80c830"/>
<rect x="356" y="1197" width="1" height="2" fill="#1a4ec4"/>
<rect x="345" y="1205" width="1" height="2" fill="#80c830"/>
<rect x="366" y="1203" width="1" height="2" fill="#d0d020"/>
<rect x="389" y="1205" width="1" height="2" fill="#d0d020"/>
<rect x="383" y="1203" width="1" height="2" fill="#30c070"/>
<rect x="326" y="1204" width="1" height="2" fill="#d0d020"/>
<rect x="376" y="1204" width="1" height="2" fill="#80c830"/>
<rect x="322" y="1202" width="1" height="2" fill="#e08040"/>
<rect x="375" y="1202" width="1" height="2" fill="#e08040"/>
<rect x="324" y="1201" width="1" height="2" fill="#80c830"/>
<rect x="352" y="1195" width="1" height="2" fill="#80c830"/>
<rect x="342" y="1205" width="1" height="2" fill="#2a86d0"/>
<rect x="344" y="1202" width="1" height="2" fill="#e0b020"/>
<rect x="386" y="1204" width="1" height="2" fill="#d0d020"/>
<rect x="379" y="1202" width="1" height="2" fill="#e0b020"/>
<rect x="354" y="1198" width="1" height="2" fill="#2a86d0"/>
<rect x="366" y="1203" width="1" height="2" fill="#80c830"/>
<rect x="303" y="1205" width="1" height="2" fill="#2a86d0"/>
<rect x="302" y="1205" width="1" height="2" fill="#e0b020"/>
<rect x="358" y="1189" width="1" height="2" fill="#2a86d0"/>
<rect x="382" y="1202" width="1" height="2" fill="#f0e020"/>
<rect x="293" y="1203" width="1" height="2" fill="#e0b020"/>
<rect x="385" y="1202" width="1" height="2" fill="#e0b020"/>
<rect x="319" y="1206" width="1" height="2" fill="#20b090"/>
<rect x="336" y="1198" width="1" height="2" fill="#2a86d0"/>
<rect x="343" y="1202" width="1" height="2" fill="#2a86d0"/>
<rect x="293" y="1199" width="1" height="2" fill="#2a86d0"/>
<rect x="307" y="1206" width="1" height="2" fill="#20b090"/>
<rect x="318" y="1200" width="1" height="2" fill="#e08040"/>
<rect x="372" y="1204" width="1" height="2" fill="#e08040"/>
<rect x="375" y="1205" width="1" height="2" fill="#30c070"/>
<rect x="390" y="1205" width="1" height="2" fill="#f0e020"/>
<rect x="319" y="1200" width="1" height="2" fill="#e08040"/>
<rect x="372" y="1203" width="1" height="2" fill="#30c070"/>
<rect x="317" y="1205" width="1" height="2" fill="#80c830"/>
<rect x="390" y="1204" width="1" height="2" fill="#30c070"/>
<rect x="331" y="1198" width="1" height="2" fill="#2a86d0"/>
<rect x="358" y="1187" width="1" height="2" fill="#2a86d0"/>
<rect x="355" y="1200" width="1" height="2" fill="#2a86d0"/>
<rect x="358" y="1200" width="1" height="2" fill="#2a86d0"/>
<rect x="387" y="1203" width="1" height="2" fill="#30c070"/>
<rect x="364" y="1205" width="1" height="2" fill="#e0b020"/>
<rect x="339" y="1198" width="1" height="2" fill="#e08040"/>
<rect x="348" y="1194" width="1" height="2" fill="#30c070"/>
<rect x="366" y="1204" width="1" height="2" fill="#30c070"/>
<rect x="323" y="1201" width="1" height="2" fill="#e08040"/>
<rect x="389" y="1202" width="1" height="2" fill="#e08040"/>
<rect x="292" y="1202" width="1" height="2" fill="#d0d020"/>
<rect x="343" y="1187" width="1" height="2" fill="#30c070"/>
<rect x="368" y="1203" width="1" height="2" fill="#30c070"/>
<rect x="291" y="1200" width="1" height="2" fill="#80c830"/>
<rect x="349" y="1203" width="1" height="2" fill="#d0d020"/>
<rect x="343" y="1203" width="1" height="2" fill="#d0d020"/>
<rect x="349" y="1195" width="1" height="2" fill="#80c830"/>
<rect x="372" y="1204" width="1" height="2" fill="#e08040"/>
<rect x="359" y="1195" width="1" height="2" fill="#2a86d0"/>
<rect x="322" y="1203" width="1" height="2" fill="#2a86d0"/>
<rect x="345" y="1188" width="1" height="2" fill="#2a86d0"/>
<rect x="330" y="1205" width="1" height="2" fill="#d0d020"/>
<rect x="348" y="1199" width="1" height="2" fill="#80c830"/>
<rect x="333" y="1205" width="1" height="2" fill="#f0e020"/>
<rect x="326" y="1199" width="1" height="2" fill="#30c070"/>
<rect x="378" y="1204" width="1" height="2" fill="#d0d020"/>
<rect x="358" y="1193" width="1" height="2" fill="#80c830"/>
<rect x="365" y="1204" width="1" height="2" fill="#e0b020"/>
<rect x="386" y="1204" width="1" height="2" fill="#f0e020"/>
<rect x="338" y="1197" width="1" height="2" fill="#1a4ec4"/>
<rect x="373" y="1204" width="1" height="2" fill="#20b090"/>
<rect x="323" y="1206" width="1" height="2" fill="#80c830"/>
<rect x="310" y="1200" width="1" height="2" fill="#80c830"/>
<rect x="353" y="1202" width="1" height="2" fill="#e08040"/>
<rect x="300" y="1198" width="1" height="2" fill="#f0e020"/>
<rect x="351" y="1202" width="1" height="2" fill="#d0d020"/>
<rect x="299" y="1199" width="1" height="2" fill="#80c830"/>
<rect x="386" y="1205" width="1" height="2" fill="#e08040"/>
<rect x="387" y="1206" width="1" height="2" fill="#d0d020"/>
<rect x="382" y="1206" width="1" height="2" fill="#2a86d0"/>
<rect x="326" y="1197" width="1" height="2" fill="#80c830"/>
<rect x="328" y="1201" width="1" height="2" fill="#f0e020"/>
<rect x="393" y="1205" width="1" height="2" fill="#20b090"/>
<rect x="322" y="1205" width="1" height="2" fill="#30c070"/>
<rect x="313" y="1204" width="1" height="2" fill="#20b090"/>
<rect x="357" y="1201" width="1" height="2" fill="#d0d020"/>
<rect x="361" y="1187" width="1" height="2" fill="#2a86d0"/>
<rect x="317" y="1197" width="1" height="2" fill="#80c830"/>
<rect x="330" y="1202" width="1" height="2" fill="#2a86d0"/>
<rect x="346" y="1186" width="1" height="2" fill="#80c830"/>
<rect x="333" y="1197" width="1" height="2" fill="#1a4ec4"/>
<rect x="335" y="1201" width="1" height="2" fill="#2a86d0"/>
<rect x="353" y="1187" width="1" height="2" fill="#2a86d0"/>
<rect x="300" y="1197" width="1" height="2" fill="#30c070"/>
<rect x="349" y="1189" width="1" height="2" fill="#80c830"/>
<rect x="399" y="1203" width="1" height="2" fill="#d0d020"/>
<rect x="302" y="1202" width="1" height="2" fill="#80c830"/>
<rect x="327" y="1200" width="1" height="2" fill="#2a86d0"/>
<rect x="325" y="1202" width="1" height="2" fill="#30c070"/>
<rect x="356" y="1188" width="1" height="2" fill="#2a86d0"/>
<rect x="343" y="1199" width="1" height="2" fill="#e0b020"/>
<rect x="336" y="1202" width="1" height="2" fill="#30c070"/>
<rect x="312" y="1202" width="1" height="2" fill="#d0d020"/>
<rect x="321" y="1201" width="1" height="2" fill="#e0b020"/>
<rect x="359" y="1205" width="1" height="2" fill="#20b090"/>
<rect x="347" y="1192" width="1" height="2" fill="#2a86d0"/>
<rect x="291" y="1198" width="1" height="2" fill="#80c830"/>
<rect x="374" y="1202" width="1" height="2" fill="#20b090"/>
<rect x="317" y="1202" width="1" height="2" fill="#30c070"/>
<rect x="347" y="1202" width="1" height="2" fill="#e0b020"/>
<rect x="373" y="1202" width="1" height="2" fill="#f0e020"/>
<rect x="302" y="1206" width="1" height="2" fill="#f0e020"/>
<rect x="312" y="1204" width="1" height="2" fill="#d0d020"/>
<rect x="326" y="1181" width="1" height="2" fill="#1c62c8"/>
<rect x="358" y="1181" width="1" height="2" fill="#1c62c8"/>
<rect x="312" y="1171" width="1" height="2" fill="#2456d0"/>
<rect x="376" y="1188" width="1" height="2" fill="#1a4ec4"/>
<rect x="384" y="1194" width="1" height="2" fill="#1a4ec4"/>
<rect x="310" y="1177" width="1" height="2" fill="#2456d0"/>
<rect x="291" y="1184" width="1" height="2" fill="#1c62c8"/>
<rect x="394" y="1181" width="1" height="2" fill="#1a4ec4"/>
<rect x="344" y="1183" width="1" height="2" fill="#1a4ec4"/>
<rect x="335" y="1170" width="1" height="2" fill="#2456d0"/>
<rect x="366" y="1186" width="1" height="2" fill="#1c62c8"/>
<rect x="382" y="1167" width="1" height="2" fill="#1a4ec4"/>
<rect x="375" y="1197" width="1" height="2" fill="#2456d0"/>
<rect x="323" y="1168" width="1" height="2" fill="#2456d0"/>
<rect x="371" y="1188" width="1" height="2" fill="#2456d0"/>
<rect x="292" y="1186" width="1" height="2" fill="#1c62c8"/>
<rect x="337" y="1173" width="1" height="2" fill="#2456d0"/>
<rect x="347" y="1184" width="1" height="2" fill="#1c62c8"/>
<rect x="302" y="1180" width="1" height="2" fill="#2456d0"/>
<rect x="373" y="1182" width="1" height="2" fill="#1c62c8"/>
<rect x="343" y="1171" width="1" height="2" fill="#1a4ec4"/>
<rect x="353" y="1165" width="1" height="2" fill="#2456d0"/>
<rect x="314" y="1193" width="1" height="2" fill="#1a4ec4"/>
<rect x="305" y="1177" width="1" height="2" fill="#2456d0"/>
<rect x="330" y="1197" width="1" height="2" fill="#1c62c8"/>
<rect x="345" y="1191" width="1" height="2" fill="#1c62c8"/>
<rect x="374" y="1195" width="1" height="2" fill="#1a4ec4"/>
<rect x="292" y="1179" width="1" height="2" fill="#1a4ec4"/>
<rect x="341" y="1196" width="1" height="2" fill="#1c62c8"/>
<rect x="356" y="1179" width="1" height="2" fill="#1a4ec4"/>
<rect x="315" y="1170" width="1" height="2" fill="#2456d0"/>
<rect x="348" y="1176" width="1" height="2" fill="#2456d0"/>
<rect x="336" y="1175" width="1" height="2" fill="#1c62c8"/>
<rect x="361" y="1183" width="1" height="2" fill="#1c62c8"/>
<rect x="330" y="1190" width="1" height="2" fill="#1a4ec4"/>
<rect x="90" y="1202" width="1" height="2" fill="#1c48b0"/>
<rect x="78" y="1206" width="1" height="2" fill="#1c48b0"/>
<rect x="76" y="1203" width="1" height="2" fill="#80c030"/>
<rect x="93" y="1206" width="1" height="2" fill="#2050b8"/>
<rect x="53" y="1203" width="1" height="2" fill="#1a3ea8"/>
<rect x="87" y="1202" width="1" height="2" fill="#2050b8"/>
<rect x="83" y="1203" width="1" height="2" fill="#80c030"/>
<rect x="70" y="1203" width="1" height="2" fill="#1a3ea8"/>
<rect x="89" y="1203" width="1" height="2" fill="#1a3ea8"/>
<rect x="93" y="1201" width="1" height="2" fill="#30aa80"/>
<rect x="81" y="1205" width="1" height="2" fill="#d0d020"/>
<rect x="82" y="1202" width="1" height="2" fill="#d0d020"/>
<rect x="93" y="1202" width="1" height="2" fill="#d0d020"/>
<rect x="64" y="1203" width="1" height="2" fill="#14308a"/>
<rect x="87" y="1201" width="1" height="2" fill="#2050b8"/>
<rect x="73" y="1194" width="1" height="2" fill="#14308a"/>
<rect x="86" y="1206" width="1" height="2" fill="#2050b8"/>
<rect x="52" y="1201" width="1" height="2" fill="#1c48b0"/>
<rect x="92" y="1203" width="1" height="2" fill="#14308a"/>
<rect x="62" y="1204" width="1" height="2" fill="#14308a"/>
<rect x="76" y="1204" width="1" height="2" fill="#80c030"/>
<rect x="51" y="1203" width="1" height="2" fill="#2050b8"/>
<rect x="89" y="1205" width="1" height="2" fill="#d0d020"/>
<rect x="93" y="1204" width="1" height="2" fill="#80c030"/>
<rect x="83" y="1205" width="1" height="2" fill="#80c030"/>
<rect x="68" y="1205" width="1" height="2" fill="#1c48b0"/>
<rect x="58" y="1192" width="1" height="2" fill="#14308a"/>
<rect x="63" y="1205" width="1" height="2" fill="#1c48b0"/>
<rect x="92" y="1202" width="1" height="2" fill="#2050b8"/>
<rect x="70" y="1195" width="1" height="2" fill="#d0d020"/>
<rect x="67" y="1201" width="1" height="2" fill="#2050b8"/>
<rect x="50" y="1198" width="1" height="2" fill="#14308a"/>
<rect x="61" y="1203" width="1" height="2" fill="#2050b8"/>
<rect x="62" y="1203" width="1" height="2" fill="#14308a"/>
<rect x="67" y="1205" width="1" height="2" fill="#1a3ea8"/>
<rect x="90" y="1203" width="1" height="2" fill="#1a3ea8"/>
<rect x="80" y="1203" width="1" height="2" fill="#80c030"/>
<rect x="64" y="1196" width="1" height="2" fill="#1c48b0"/>
<rect x="82" y="1201" width="1" height="2" fill="#2050b8"/>
<rect x="58" y="1204" width="1" height="2" fill="#14308a"/>
<rect x="137" y="1206" width="1" height="2" fill="#2050b8"/>
<rect x="134" y="1201" width="1" height="2" fill="#1c48b0"/>
<rect x="144" y="1204" width="1" height="2" fill="#14308a"/>
<rect x="150" y="1203" width="1" height="2" fill="#1c48b0"/>
<rect x="140" y="1205" width="1" height="2" fill="#2050b8"/>
<rect x="150" y="1194" width="1" height="2" fill="#2050b8"/>
<rect x="140" y="1205" width="1" height="2" fill="#14308a"/>
<rect x="137" y="1204" width="1" height="2" fill="#1a3ea8"/>
<rect x="181" y="1202" width="1" height="2" fill="#1a3ea8"/>
<rect x="190" y="1194" width="1" height="2" fill="#2050b8"/>
<rect x="165" y="1201" width="1" height="2" fill="#1c48b0"/>
<rect x="205" y="1204" width="1" height="2" fill="#1a3ea8"/>
<rect x="199" y="1202" width="1" height="2" fill="#2050b8"/>
<rect x="213" y="1202" width="1" height="2" fill="#2050b8"/>
<rect x="181" y="1202" width="1" height="2" fill="#2050b8"/>
<rect x="169" y="1202" width="1" height="2" fill="#1c48b0"/>
<rect x="207" y="1203" width="1" height="2" fill="#1a3ea8"/>
<rect x="208" y="1206" width="1" height="2" fill="#2050b8"/>
<rect x="176" y="1206" width="1" height="2" fill="#14308a"/>
<rect x="171" y="1202" width="1" height="2" fill="#1a3ea8"/>
<rect x="206" y="1202" width="1" height="2" fill="#1c48b0"/>
<rect x="186" y="1205" width="1" height="2" fill="#1c48b0"/>
<rect x="185" y="1205" width="1" height="2" fill="#1c48b0"/>
<rect x="208" y="1204" width="1" height="2" fill="#1a3ea8"/>
<rect x="197" y="1205" width="1" height="2" fill="#2050b8"/>
<rect x="211" y="1196" width="1" height="2" fill="#14308a"/>
<rect x="213" y="1194" width="1" height="2" fill="#1a3ea8"/>
<rect x="166" y="1202" width="1" height="2" fill="#1c48b0"/>
<rect x="195" y="1206" width="1" height="2" fill="#1a3ea8"/>
<rect x="195" y="1204" width="1" height="2" fill="#1c48b0"/>
<rect x="174" y="1202" width="1" height="2" fill="#2050b8"/>
<rect x="199" y="1205" width="1" height="2" fill="#1a3ea8"/>
<rect x="206" y="1201" width="1" height="2" fill="#1a3ea8"/>
<rect x="201" y="1204" width="1" height="2" fill="#2050b8"/>
<rect x="247" y="1206" width="1" height="2" fill="#14308a"/>
<rect x="263" y="1192" width="1" height="2" fill="#2050b8"/>
<rect x="253" y="1201" width="1" height="2" fill="#2050b8"/>
<rect x="244" y="1201" width="1" height="2" fill="#2050b8"/>
<rect x="264" y="1205" width="1" height="2" fill="#14308a"/>
<rect x="259" y="1205" width="1" height="2" fill="#1c48b0"/>
<rect x="244" y="1203" width="1" height="2" fill="#1c48b0"/>
<rect x="261" y="1201" width="1" height="2" fill="#14308a"/>
<rect x="254" y="1193" width="1" height="2" fill="#1c48b0"/>
<rect x="260" y="1206" width="1" height="2" fill="#2050b8"/>
<rect x="71" y="874" width="1" height="2" fill="#1a4ec4"/>
<rect x="340" y="1080" width="1" height="2" fill="#1a4ec4"/>
<rect x="275" y="1124" width="1" height="2" fill="#1a4ec4"/>
<rect x="410" y="1136" width="1" height="2" fill="#1a4ec4"/>
<rect x="288" y="1137" width="1" height="2" fill="#1a4ec4"/>
<rect x="85" y="1193" width="1" height="2" fill="#1a4ec4"/>
<rect x="190" y="1186" width="1" height="2" fill="#1a4ec4"/>
<rect x="528" y="694" width="30" height="16" fill="#ffffff"/>
<rect x="528" y="710" width="30" height="16" fill="#ff00ff"/>
<rect x="528" y="726" width="30" height="16" fill="#ff3caa"/>
<rect x="528" y="742" width="30" height="16" fill="#f8008c"/>
<rect x="528" y="758" width="30" height="16" fill="#e8007a"/>
<rect x="528" y="774" width="30" height="16" fill="#dc0066"/>
<rect x="528" y="790" width="30" height="16" fill="#ff0000"/>
<rect x="528" y="806" width="30" height="16" fill="#dc0000"/>
<rect x="528" y="822" width="30" height="16" fill="#c04444"/>
<rect x="528" y="838" width="30" height="16" fill="#ff5555"/>
<rect x="528" y="854" width="30" height="16" fill="#ff7755"/>
<rect x="528" y="870" width="30" height="16" fill="#ff8855"/>
<rect x="528" y="886" width="30" height="16" fill="#ffff00"/>
<rect x="528" y="902" width="30" height="16" fill="#ffee00"/>
<rect x="528" y="918" width="30" height="16" fill="#ffdd00"/>
<rect x="528" y="934" width="30" height="16" fill="#ddcc00"/>
<rect x="528" y="950" width="30" height="16" fill="#dda200"/>
<rect x="528" y="966" width="30" height="16" fill="#80a010"/>
<rect x="528" y="982" width="30" height="16" fill="#5aaa00"/>
<rect x="528" y="998" width="30" height="16" fill="#00cc00"/>
<rect x="528" y="1014" width="30" height="16" fill="#00dd44"/>
<rect x="528" y="1030" width="30" height="16" fill="#00cc66"/>
<rect x="528" y="1046" width="30" height="16" fill="#00bb77"/>
<rect x="528" y="1062" width="30" height="16" fill="#00aa88"/>
<rect x="528" y="1078" width="30" height="16" fill="#009999"/>
<rect x="528" y="1094" width="30" height="16" fill="#0088aa"/>
<rect x="528" y="1110" width="30" height="16" fill="#0077cc"/>
<rect x="528" y="1126" width="30" height="16" fill="#1155ee"/>
<rect x="528" y="1142" width="30" height="16" fill="#0000ff"/>
<rect x="528" y="1158" width="30" height="16" fill="#0000cc"/>
<rect x="528" y="1174" width="30" height="16" fill="#0000aa"/>
<rect x="528" y="1190" width="30" height="16" fill="#000000"/>
<rect x="527.5" y="694.5" width="31" height="515" fill="none" stroke="#fff" stroke-width="1"/>
<rect x="559" y="698" width="6" height="1" fill="#fff"/>
<rect x="559" y="740" width="6" height="1" fill="#fff"/>
<rect x="559" y="783" width="6" height="1" fill="#fff"/>
<rect x="559" y="826" width="6" height="1" fill="#fff"/>
<rect x="559" y="868" width="6" height="1" fill="#fff"/>
<rect x="559" y="911" width="6" height="1" fill="#fff"/>
<rect x="559" y="954" width="6" height="1" fill="#fff"/>
<rect x="559" y="996" width="6" height="1" fill="#fff"/>
<rect x="559" y="1039" width="6" height="1" fill="#fff"/>
<rect x="559" y="1082" width="6" height="1" fill="#fff"/>
<rect x="559" y="1124" width="6" height="1" fill="#fff"/>
<rect x="559" y="1167" width="6" height="1" fill="#fff"/>
<rect x="559" y="1210" width="6" height="1" fill="#fff"/>
<text class="s" transform="scale(0.86,1)" x="662.79" y="701.70" letter-spacing="1.43" xml:space="preserve">100</text>
<text class="s" transform="scale(0.86,1)" x="662.79" y="787.03" letter-spacing="1.43" xml:space="preserve">10</text>
<text class="s" transform="scale(0.86,1)" x="662.79" y="872.36" letter-spacing="1.43" xml:space="preserve">1</text>
<text class="s" transform="scale(0.86,1)" x="662.79" y="957.69" letter-spacing="1.43" xml:space="preserve">.1</text>
<text class="s" transform="scale(0.86,1)" x="662.79" y="1043.02" letter-spacing="1.43" xml:space="preserve">.01</text>
<text class="s" transform="scale(0.86,1)" x="662.79" y="1128.35" letter-spacing="1.43" xml:space="preserve">.001</text>
<text class="s" transform="scale(0.86,1)" x="662.79" y="1213.68" letter-spacing="1.43" xml:space="preserve">.0001</text>
<text class="b" transform="scale(0.84,1)" x="773.81" y="1100.00" letter-spacing="3.08" xml:space="preserve">GLL/NIMS</text>
<text class="b" transform="scale(0.84,1)" x="773.81" y="1122.00" letter-spacing="3.08" xml:space="preserve">OBSNAME/EXT=C9JNAURMAP01R</text>
<text class="b" transform="scale(0.84,1)" x="1166.67" y="1122.00" letter-spacing="3.08" xml:space="preserve">TCA=-001 04:20:45</text>
<text class="b" transform="scale(0.84,1)" x="1507.14" y="1122.00" letter-spacing="3.08" xml:space="preserve">TARGET=JUPITER</text>
<text class="b" transform="scale(0.84,1)" x="1742.86" y="1122.00" letter-spacing="3.08" xml:space="preserve">SCET=1997 JUN 26 07:36:48</text>
<text class="b" transform="scale(0.84,1)" x="773.81" y="1144.00" letter-spacing="3.08" xml:space="preserve">BEG SCLK=04016077.00.0</text>
<text class="b" transform="scale(0.84,1)" x="1166.67" y="1144.00" letter-spacing="3.08" xml:space="preserve">NIMSMODE=LONG MAP</text>
<text class="b" transform="scale(0.84,1)" x="1507.14" y="1144.00" letter-spacing="3.08" xml:space="preserve">GRATING OFFSET=04</text>
<text class="b" transform="scale(0.84,1)" x="1742.86" y="1144.00" letter-spacing="3.08" xml:space="preserve">MIN RNG=1323020.00 KM</text>
<text class="b" transform="scale(0.84,1)" x="773.81" y="1166.00" letter-spacing="3.08" xml:space="preserve">END SCLK=04016079.11.0</text>
<text class="b" transform="scale(0.84,1)" x="1166.67" y="1166.00" letter-spacing="3.08" xml:space="preserve">F(1 u)=2789.51</text>
<text class="b" transform="scale(0.84,1)" x="1507.14" y="1166.00" letter-spacing="3.08" xml:space="preserve">GAIN STATE=4</text>
<text class="b" transform="scale(0.84,1)" x="1742.86" y="1166.00" letter-spacing="3.08" xml:space="preserve">MAX RNG=1357510.00 KM</text>
<text class="b" transform="scale(0.84,1)" x="773.81" y="1188.00" letter-spacing="3.08" xml:space="preserve">PROJECTION=SKY</text>
<text class="b" transform="scale(0.84,1)" x="1166.67" y="1188.00" letter-spacing="3.08" xml:space="preserve">INA=97.9</text>
<text class="b" transform="scale(0.84,1)" x="1507.14" y="1188.00" letter-spacing="3.08" xml:space="preserve">PHA=77.1</text>
<text class="b" transform="scale(0.84,1)" x="1742.86" y="1188.00" letter-spacing="3.08" xml:space="preserve">EMA=80.5</text>
<text class="b" transform="scale(0.84,1)" x="773.81" y="1210.00" letter-spacing="3.08" xml:space="preserve">SCALE=0.220   MRAD/PIXEL</text>
<text class="b" transform="scale(0.84,1)" x="1166.67" y="1210.00" letter-spacing="3.08" xml:space="preserve">S/CAZ=-77.6</text>
<text class="b" transform="scale(0.84,1)" x="1507.14" y="1210.00" letter-spacing="3.08" xml:space="preserve">SUNAZ=180.0</text>
<text class="b" transform="scale(0.84,1)" x="1742.86" y="1210.00" letter-spacing="3.08" xml:space="preserve">SPEED=0.2*0.058</text>
<text class="b" transform="scale(0.84,1)" x="773.81" y="1232.00" letter-spacing="3.08" xml:space="preserve">OBSNOTE=Southern nightside auroral map (real-time observation)</text>
</svg></body></html>
